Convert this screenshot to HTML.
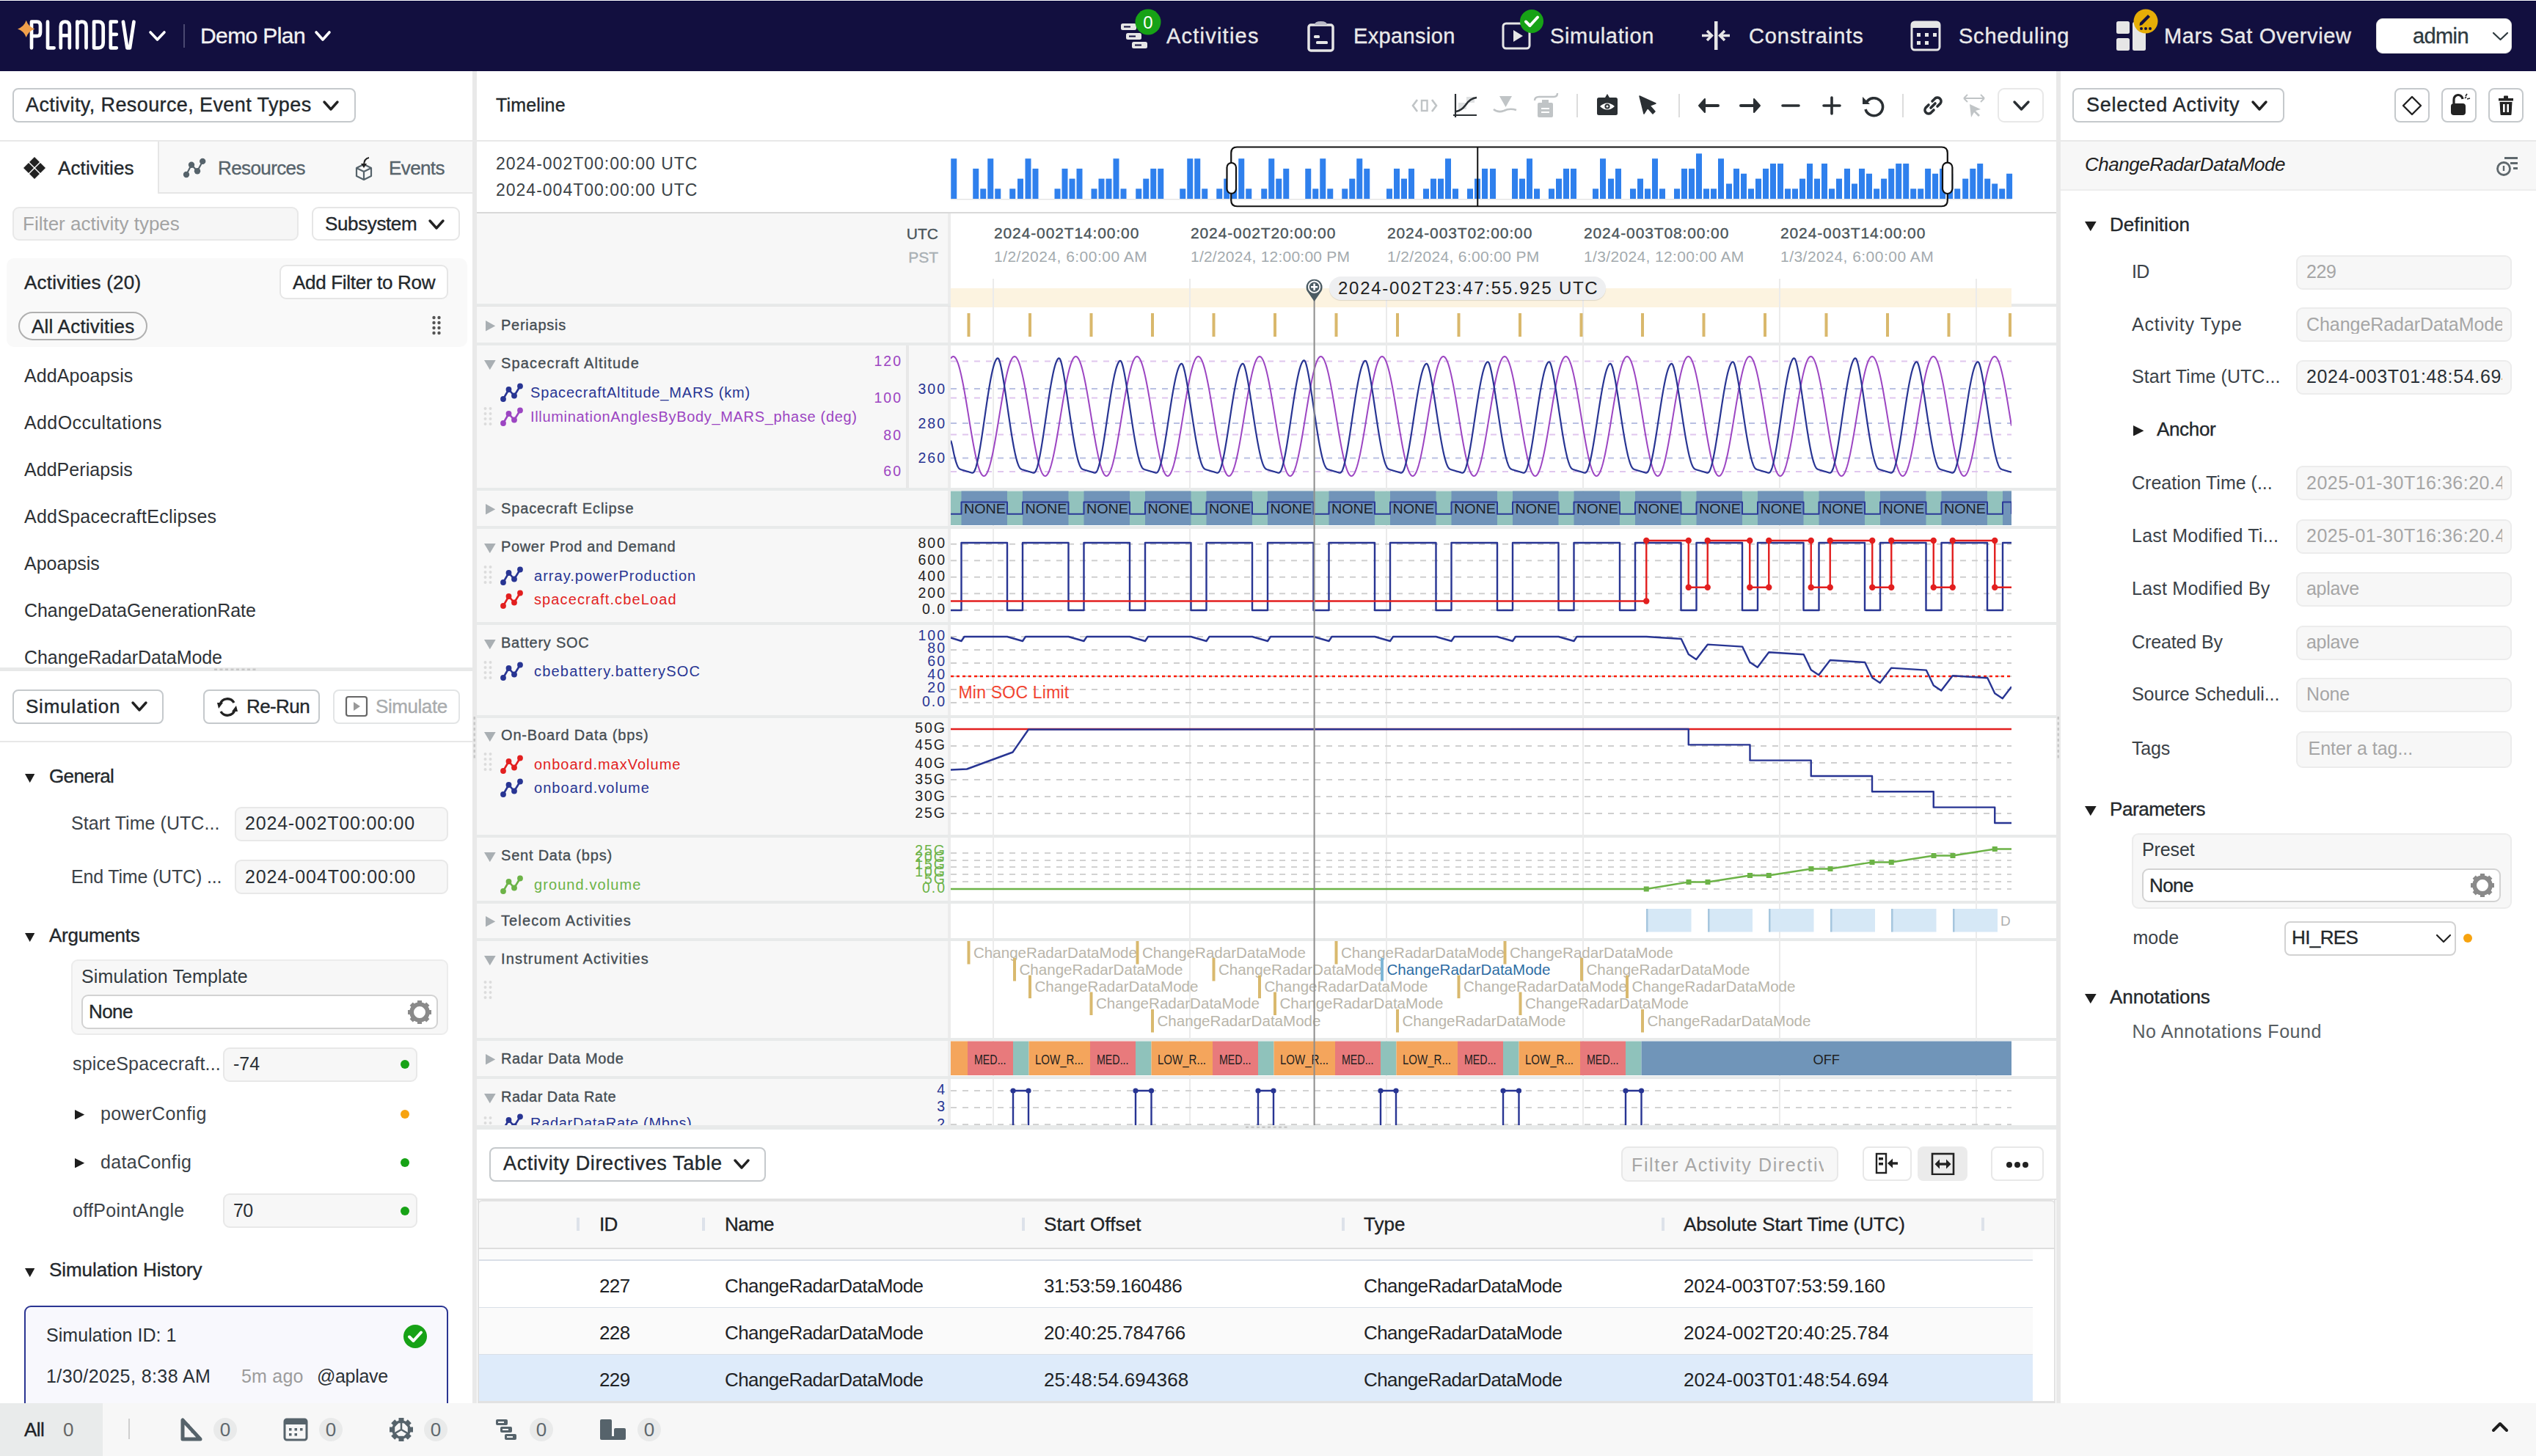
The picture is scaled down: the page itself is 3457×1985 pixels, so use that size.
<!DOCTYPE html>
<html><head><meta charset="utf-8"><style>
html,body{margin:0;padding:0;width:3457px;height:1985px;overflow:hidden;background:#fff;}
body{position:relative;font-family:"Liberation Sans", sans-serif;}
body>div,body>svg{position:absolute;}
.t{white-space:nowrap;}
</style></head><body>
<div style="left:0px;top:0px;width:3457px;height:1985px;background:#fff;"></div>
<div style="left:0px;top:0px;width:3457px;height:97px;background:#120f3f;"></div>
<div style="left:0px;top:0px;width:3457px;height:1px;background:#fff;"></div>
<div style="left:0px;top:1px;width:3457px;height:1px;background:#02023a;"></div>
<svg style="left:0px;top:0px;" width="240" height="97" viewBox="0 0 240 97"><path d="M43 65.3 V29.7 H50.5 Q55 29.7 55 35 V44 Q55 49.2 50.5 49.2 H43 M65 29.7 V65.3 H73.6 M82.8 65.3 V36 Q82.8 29.7 88.8 29.7 Q94.8 29.7 94.8 36 V65.3 M82.8 48.4 H94.8 M105.3 65.3 V29.7 M105.3 33 Q108 29.7 111.5 29.7 Q117.5 29.7 117.5 36 V65.3 M128.1 29.7 V65.3 H134 Q140.7 65.3 140.7 58 V37 Q140.7 29.7 134 29.7 Z M158.8 29.7 H150.8 V65.3 H158.8 M150.8 46.8 H158.8 M167.9 29.7 L173.4 65.3 H177 L182.5 29.7" fill="none" stroke="#fff" stroke-width="4.7" stroke-linejoin="round" stroke-linecap="round"/></svg>
<svg style="left:202px;top:41px;" width="25" height="16" viewBox="0 0 25 16"><path d="M3 3 L12.5 13 L22 3" fill="none" stroke="#fff" stroke-width="3.6" stroke-linecap="round" stroke-linejoin="round"/></svg>
<svg style="left:20px;top:24px;" width="32" height="32" viewBox="0 0 32 32"><path d="M15.7 3.8 Q18.7 12.6 27.4 15.4 Q18.7 18.2 15.7 27 Q12.7 18.2 4 15.4 Q12.7 12.6 15.7 3.8 Z" fill="#f0a04b"/></svg>
<div style="left:250px;top:33px;width:2px;height:32px;background:#4a4870;"></div>
<div class="t" style="top:33.6px;font-size:30px;line-height:30px;color:#f2f2f2;-webkit-text-stroke:0.35px currentColor;letter-spacing:-0.600px;left:273.0px;">Demo Plan</div>
<svg style="left:428px;top:41px;" width="24" height="16" viewBox="0 0 24 16"><path d="M3 3 L12.0 13 L21 3" fill="none" stroke="#fff" stroke-width="3.6" stroke-linecap="round" stroke-linejoin="round"/></svg>
<svg style="left:1524px;top:28px;" width="44" height="44" viewBox="0 0 44 44"><g fill="#e6e6e6"><rect x="4" y="4" width="21" height="9" rx="2.5"/><rect x="11" y="17" width="21" height="9" rx="2.5"/><rect x="19" y="29" width="21" height="9" rx="2.5"/></g><g fill="#120f3f"><rect x="8" y="7.5" width="9" height="2"/><rect x="15" y="20.5" width="9" height="2"/><rect x="23" y="32.5" width="9" height="2"/></g></svg>
<svg style="left:1546px;top:11px;" width="38" height="38" viewBox="0 0 38 38"><circle cx="19" cy="19" r="17.5" fill="#17a216"/><text x="19" y="27.5" text-anchor="middle" font-family="Liberation Sans" font-size="24" font-weight="500" fill="#fff">0</text></svg>
<div class="t" style="top:34.5px;font-size:29px;line-height:29px;color:#e9e9e9;-webkit-text-stroke:0.35px currentColor;letter-spacing:1.222px;left:1590.0px;">Activities</div>
<svg style="left:1780px;top:26px;" width="42" height="46" viewBox="0 0 42 46"><rect x="4" y="8" width="33" height="35" rx="3" fill="none" stroke="#e6e6e6" stroke-width="3.5"/><path d="M12 8 Q12 3 20.5 3 Q29 3 29 8 Z" fill="#b9b9c8"/><rect x="11" y="22" width="8" height="4" rx="1.5" fill="#e6e6e6"/><rect x="14" y="30" width="16" height="4" rx="1.5" fill="#e6e6e6"/></svg>
<div class="t" style="top:34.5px;font-size:29px;line-height:29px;color:#e9e9e9;-webkit-text-stroke:0.35px currentColor;letter-spacing:0.375px;left:1845.0px;">Expansion</div>
<svg style="left:2045px;top:28px;" width="46" height="42" viewBox="0 0 46 42"><rect x="4" y="4" width="36" height="34" rx="4" fill="none" stroke="#e6e6e6" stroke-width="3"/><path d="M18 13 L31 21 L18 29 Z" fill="#e6e6e6"/></svg>
<svg style="left:2071px;top:12px;" width="34" height="34" viewBox="0 0 34 34"><circle cx="17" cy="17" r="16" fill="#17a216"/><path d="M9 17.5 L14.5 23 L25 11.5" fill="none" stroke="#fff" stroke-width="4" stroke-linecap="round" stroke-linejoin="round"/></svg>
<div class="t" style="top:34.5px;font-size:29px;line-height:29px;color:#e9e9e9;-webkit-text-stroke:0.35px currentColor;letter-spacing:0.667px;left:2113.0px;">Simulation</div>
<svg style="left:2318px;top:27px;" width="44" height="44" viewBox="0 0 44 44"><rect x="19" y="2" width="4.5" height="39" fill="#e6e6e6"/><path d="M2 21.5 H13 M9 15 L15.5 21.5 L9 28" fill="none" stroke="#e6e6e6" stroke-width="3.5"/><path d="M40 21.5 H29 M33 15 L26.5 21.5 L33 28" fill="none" stroke="#e6e6e6" stroke-width="3.5"/></svg>
<div class="t" style="top:34.5px;font-size:29px;line-height:29px;color:#e9e9e9;-webkit-text-stroke:0.35px currentColor;letter-spacing:0.900px;left:2384.0px;">Constraints</div>
<svg style="left:2602px;top:26px;" width="46" height="46" viewBox="0 0 46 46"><rect x="4" y="4" width="38" height="38" rx="4" fill="none" stroke="#e6e6e6" stroke-width="3"/><rect x="4" y="4" width="38" height="8" fill="#e6e6e6"/><rect x="11" y="19" width="5" height="5" fill="#e6e6e6"/><rect x="22" y="19" width="5" height="5" fill="#e6e6e6"/><rect x="33" y="19" width="5" height="5" fill="#e6e6e6"/><rect x="11" y="30" width="5" height="5" fill="#e6e6e6"/><rect x="22" y="30" width="5" height="5" fill="#e6e6e6"/></svg>
<div class="t" style="top:34.5px;font-size:29px;line-height:29px;color:#e9e9e9;-webkit-text-stroke:0.35px currentColor;letter-spacing:0.778px;left:2670.0px;">Scheduling</div>
<svg style="left:2880px;top:25px;" width="50" height="46" viewBox="0 0 50 46"><rect x="5" y="4" width="18" height="17" rx="2.5" fill="#e6e6e6"/><rect x="5" y="27" width="18" height="17" rx="2.5" fill="#e6e6e6"/><rect x="27" y="5" width="18" height="39" rx="2.5" fill="#e6e6e6"/></svg>
<svg style="left:2908px;top:12px;" width="34" height="34" viewBox="0 0 34 34"><circle cx="17" cy="17" r="16.5" fill="#e6ad07"/><path d="M9 19 L20 8 L23 11 L12 22 L8.5 23 Z" fill="#120f3f"/><circle cx="11" cy="27" r="2" fill="#120f3f"/><circle cx="17" cy="27" r="2" fill="#120f3f"/><circle cx="23" cy="27" r="2" fill="#120f3f"/></svg>
<div class="t" style="top:34.5px;font-size:29px;line-height:29px;color:#e9e9e9;-webkit-text-stroke:0.35px currentColor;letter-spacing:0.625px;left:2950.0px;">Mars Sat Overview</div>
<div style="left:3239px;top:25px;width:185px;height:48px;background:#fff;border-radius:9px;border:1px solid #ddd;box-sizing:border-box;"></div>
<div class="t" style="top:34.5px;font-size:29px;line-height:29px;color:#2f3a3f;-webkit-text-stroke:0.35px currentColor;letter-spacing:-0.600px;left:3289.0px;">admin</div>
<svg style="left:3396px;top:42px;" width="25" height="15" viewBox="0 0 25 15"><path d="M3 3 L12.5 12 L22 3" fill="none" stroke="#2f3a3f" stroke-width="2.2" stroke-linecap="round" stroke-linejoin="round"/></svg>
<div style="left:17px;top:120px;width:468px;height:47px;border:2px solid #c5c9cc;background:#fff;border-radius:8px;box-sizing:border-box;"></div>
<div class="t" style="top:130.1px;font-size:27px;line-height:27px;color:#23282c;-webkit-text-stroke:0.35px currentColor;letter-spacing:0.400px;left:35.0px;">Activity, Resource, Event Types</div>
<svg style="left:439px;top:136px;" width="24" height="16" viewBox="0 0 24 16"><path d="M3 3 L12.0 13 L21 3" fill="none" stroke="#222" stroke-width="3.4" stroke-linecap="round" stroke-linejoin="round"/></svg>
<div style="left:0px;top:191px;width:644px;height:2px;background:#e8e8e8;"></div>
<div style="left:215px;top:193px;width:429px;height:71px;background:#f8f8f8;border-left:2px solid #e6e6e6;border-bottom:2px solid #e6e6e6;box-sizing:border-box;"></div>
<svg style="left:31px;top:213px;" width="32" height="32" viewBox="0 0 32 32"><g fill="#222"><path d="M16 1 L23 8 L16 15 L9 8 Z"/><path d="M8 9 L15 16 L8 23 L1 16 Z"/><path d="M24 9 L31 16 L24 23 L17 16 Z"/><path d="M16 17 L23 24 L16 31 L9 24 Z"/></g></svg>
<div class="t" style="top:216.0px;font-size:26px;line-height:26px;color:#23282c;-webkit-text-stroke:0.35px currentColor;letter-spacing:0.111px;left:79.0px;">Activities</div>
<svg style="left:248px;top:213px;" width="34" height="34" viewBox="0 0 34 34"><path d="M6 25 L13 11.7 L21 20.2 L28.2 6.9" fill="none" stroke="#56636b" stroke-width="2.2"/><g fill="#56636b"><circle cx="6" cy="25" r="4.2"/><circle cx="13" cy="11.7" r="4.2"/><circle cx="21" cy="20.2" r="4.2"/><circle cx="28.2" cy="6.9" r="4.2"/></g></svg>
<div class="t" style="top:216.0px;font-size:26px;line-height:26px;color:#56636b;-webkit-text-stroke:0.35px currentColor;letter-spacing:-0.600px;left:297.0px;">Resources</div>
<svg style="left:482px;top:212px;" width="30" height="34" viewBox="0 0 30 34"><path d="M4 17 L14 12 L24 17 L24 28 L14 33 L4 28 Z M4 17 L14 22 L24 17 M14 22 V33" fill="none" stroke="#56636b" stroke-width="2.2" stroke-linejoin="round"/><path d="M14 14 Q14 4 21 3" fill="none" stroke="#222" stroke-width="2"/><path d="M10 11 L14 17 L18 11 Z" fill="#222"/></svg>
<div class="t" style="top:216.0px;font-size:26px;line-height:26px;color:#56636b;-webkit-text-stroke:0.35px currentColor;letter-spacing:-0.600px;left:530.0px;">Events</div>
<div style="left:17px;top:282px;width:390px;height:46px;background:#f6f6f6;border:2px solid #e8e8e8;border-radius:9px;box-sizing:border-box;"></div>
<div class="t" style="top:292.0px;font-size:26px;line-height:26px;color:#a3a3a3;letter-spacing:0.000px;left:31.0px;">Filter activity types</div>
<div style="left:425px;top:282px;width:202px;height:46px;border:2px solid #e6e6e6;background:#fff;border-radius:9px;box-sizing:border-box;"></div>
<div class="t" style="top:292.0px;font-size:26px;line-height:26px;color:#23282c;-webkit-text-stroke:0.35px currentColor;letter-spacing:-0.375px;left:443.0px;">Subsystem</div>
<svg style="left:583px;top:298px;" width="24" height="16" viewBox="0 0 24 16"><path d="M3 3 L12.0 13 L21 3" fill="none" stroke="#222" stroke-width="3.4" stroke-linecap="round" stroke-linejoin="round"/></svg>
<div style="left:9px;top:352px;width:628px;height:121px;background:#f9f9f9;border-radius:10px;"></div>
<div class="t" style="top:372.0px;font-size:26px;line-height:26px;color:#23282c;-webkit-text-stroke:0.35px currentColor;letter-spacing:0.214px;left:33.0px;">Activities (20)</div>
<div style="left:381px;top:361px;width:230px;height:47px;border:2px solid #e6e6e6;background:#fff;border-radius:9px;box-sizing:border-box;"></div>
<div class="t" style="top:372.0px;font-size:26px;line-height:26px;color:#23282c;-webkit-text-stroke:0.35px currentColor;letter-spacing:-0.312px;left:399.0px;">Add Filter to Row</div>
<div style="left:25px;top:425px;width:176px;height:39px;border:2px solid #b0b0b0;border-radius:20px;box-sizing:border-box;background:#fafafa;"></div>
<div class="t" style="top:432.0px;font-size:26px;line-height:26px;color:#23282c;-webkit-text-stroke:0.35px currentColor;letter-spacing:0.231px;left:43.0px;">All Activities</div>
<svg style="left:588px;top:430px;" width="14" height="30" viewBox="0 0 14 30"><circle cx="3.5" cy="3" r="2.2" fill="#555"/><circle cx="3.5" cy="10" r="2.2" fill="#555"/><circle cx="3.5" cy="17" r="2.2" fill="#555"/><circle cx="3.5" cy="24" r="2.2" fill="#555"/><circle cx="10.5" cy="3" r="2.2" fill="#555"/><circle cx="10.5" cy="10" r="2.2" fill="#555"/><circle cx="10.5" cy="17" r="2.2" fill="#555"/><circle cx="10.5" cy="24" r="2.2" fill="#555"/></svg>
<div class="t" style="top:499.8px;font-size:25px;line-height:25px;color:#2e3236;letter-spacing:0.100px;left:33.0px;">AddApoapsis</div>
<div class="t" style="top:563.8px;font-size:25px;line-height:25px;color:#2e3236;letter-spacing:0.393px;left:33.0px;">AddOccultations</div>
<div class="t" style="top:627.8px;font-size:25px;line-height:25px;color:#2e3236;letter-spacing:0.045px;left:33.0px;">AddPeriapsis</div>
<div class="t" style="top:691.8px;font-size:25px;line-height:25px;color:#2e3236;letter-spacing:0.250px;left:33.0px;">AddSpacecraftEclipses</div>
<div class="t" style="top:755.8px;font-size:25px;line-height:25px;color:#2e3236;letter-spacing:0.000px;left:33.0px;">Apoapsis</div>
<div class="t" style="top:819.8px;font-size:25px;line-height:25px;color:#2e3236;letter-spacing:-0.043px;left:33.0px;">ChangeDataGenerationRate</div>
<div class="t" style="top:883.8px;font-size:25px;line-height:25px;color:#2e3236;letter-spacing:-0.056px;left:33.0px;">ChangeRadarDataMode</div>
<div style="left:0px;top:910px;width:644px;height:5px;background:#e8e9e9;"></div>
<svg style="left:290px;top:911px;" width="64" height="4" viewBox="0 0 64 4"><rect x="2.0" y="0.5" width="4" height="2.5" fill="#c8c8c8"/><rect x="9.5" y="0.5" width="4" height="2.5" fill="#c8c8c8"/><rect x="17.0" y="0.5" width="4" height="2.5" fill="#c8c8c8"/><rect x="24.5" y="0.5" width="4" height="2.5" fill="#c8c8c8"/><rect x="32.0" y="0.5" width="4" height="2.5" fill="#c8c8c8"/><rect x="39.5" y="0.5" width="4" height="2.5" fill="#c8c8c8"/><rect x="47.0" y="0.5" width="4" height="2.5" fill="#c8c8c8"/><rect x="54.5" y="0.5" width="4" height="2.5" fill="#c8c8c8"/></svg>
<div style="left:0px;top:915px;width:644px;height:998px;background:#fff;"></div>
<div style="left:17px;top:940px;width:206px;height:47px;border:2px solid #c5c9cc;background:#fff;border-radius:8px;box-sizing:border-box;"></div>
<div class="t" style="top:950.0px;font-size:26px;line-height:26px;color:#23282c;-webkit-text-stroke:0.35px currentColor;letter-spacing:0.778px;left:35.0px;">Simulation</div>
<svg style="left:178px;top:955px;" width="24" height="16" viewBox="0 0 24 16"><path d="M3 3 L12.0 13 L21 3" fill="none" stroke="#222" stroke-width="3.4" stroke-linecap="round" stroke-linejoin="round"/></svg>
<div style="left:277px;top:940px;width:159px;height:47px;border:2px solid #c5c9cc;background:#fff;border-radius:8px;box-sizing:border-box;"></div>
<svg style="left:292px;top:946px;" width="36" height="36" viewBox="0 0 36 36"><path d="M27 12 A10.5 10.5 0 0 0 8 14" fill="none" stroke="#222" stroke-width="3.4"/><path d="M9 24 A10.5 10.5 0 0 0 28 22" fill="none" stroke="#222" stroke-width="3.4"/><path d="M4 12 L12 12 L6 20 Z" fill="#222"/><path d="M32 24 L24 24 L30 16 Z" fill="#222"/></svg>
<div class="t" style="top:950.0px;font-size:26px;line-height:26px;color:#23282c;-webkit-text-stroke:0.35px currentColor;letter-spacing:-0.600px;left:336.0px;">Re-Run</div>
<div style="left:454px;top:940px;width:173px;height:47px;border:2px solid #e3e5e6;background:#fff;border-radius:8px;box-sizing:border-box;"></div>
<svg style="left:469px;top:947px;" width="36" height="34" viewBox="0 0 36 34"><rect x="3" y="3" width="28" height="26" rx="3" fill="none" stroke="#666" stroke-width="2.2"/><path d="M13 10 L22 16 L13 22 Z" fill="#999"/></svg>
<div class="t" style="top:950.0px;font-size:26px;line-height:26px;color:#a9acae;-webkit-text-stroke:0.35px currentColor;letter-spacing:-0.429px;left:512.0px;">Simulate</div>
<div style="left:0px;top:1010px;width:644px;height:2px;background:#e8e8e8;"></div>
<svg style="left:34px;top:1055px;" width="13.440000000000001" height="12.100000000000001" viewBox="0 0 13.440000000000001 12.100000000000001"><path d="M0 0 L13.440000000000001 0 L6.720000000000001 12.100000000000001 Z" fill="#1e1e1e"/></svg>
<div class="t" style="top:1045.0px;font-size:26px;line-height:26px;color:#23282c;-webkit-text-stroke:0.35px currentColor;letter-spacing:-0.600px;left:67.0px;">General</div>
<div class="t" style="top:1109.8px;font-size:25px;line-height:25px;color:#3b4248;letter-spacing:0.059px;left:97.0px;">Start Time (UTC...</div>
<div style="left:320px;top:1100px;width:291px;height:47px;background:#f7f7f7;border:2px solid #e8e8e8;border-radius:9px;box-sizing:border-box;"></div>
<div class="t" style="top:1109.8px;font-size:25px;line-height:25px;color:#2a3035;letter-spacing:0.812px;left:334.0px;">2024-002T00:00:00</div>
<div class="t" style="top:1182.8px;font-size:25px;line-height:25px;color:#3b4248;letter-spacing:-0.176px;left:97.0px;">End Time (UTC) ...</div>
<div style="left:320px;top:1172px;width:291px;height:47px;background:#f7f7f7;border:2px solid #e8e8e8;border-radius:9px;box-sizing:border-box;"></div>
<div class="t" style="top:1182.8px;font-size:25px;line-height:25px;color:#2a3035;letter-spacing:0.875px;left:334.0px;">2024-004T00:00:00</div>
<svg style="left:34px;top:1272px;" width="13.440000000000001" height="12.100000000000001" viewBox="0 0 13.440000000000001 12.100000000000001"><path d="M0 0 L13.440000000000001 0 L6.720000000000001 12.100000000000001 Z" fill="#1e1e1e"/></svg>
<div class="t" style="top:1262.0px;font-size:26px;line-height:26px;color:#23282c;-webkit-text-stroke:0.35px currentColor;letter-spacing:-0.250px;left:67.0px;">Arguments</div>
<div style="left:97px;top:1308px;width:514px;height:103px;background:#f7f7f7;border:2px solid #ececec;border-radius:9px;box-sizing:border-box;"></div>
<div class="t" style="top:1318.8px;font-size:25px;line-height:25px;color:#333a3f;letter-spacing:0.111px;left:111.0px;">Simulation Template</div>
<div style="left:111px;top:1356px;width:486px;height:47px;background:#fff;border:2px solid #d2d2d2;border-radius:9px;box-sizing:border-box;"></div>
<div class="t" style="top:1366.0px;font-size:26px;line-height:26px;color:#23282c;-webkit-text-stroke:0.35px currentColor;letter-spacing:-0.600px;left:121.0px;">None</div>
<svg style="left:555px;top:1363px;" width="34" height="34" viewBox="0 0 34 34"><g transform="translate(17,17)"><rect x="-3" y="-16" width="6" height="8.0" transform="rotate(0)" fill="#8a8a8a"/><rect x="-3" y="-16" width="6" height="8.0" transform="rotate(45)" fill="#8a8a8a"/><rect x="-3" y="-16" width="6" height="8.0" transform="rotate(90)" fill="#8a8a8a"/><rect x="-3" y="-16" width="6" height="8.0" transform="rotate(135)" fill="#8a8a8a"/><rect x="-3" y="-16" width="6" height="8.0" transform="rotate(180)" fill="#8a8a8a"/><rect x="-3" y="-16" width="6" height="8.0" transform="rotate(225)" fill="#8a8a8a"/><rect x="-3" y="-16" width="6" height="8.0" transform="rotate(270)" fill="#8a8a8a"/><rect x="-3" y="-16" width="6" height="8.0" transform="rotate(315)" fill="#8a8a8a"/><circle r="10.88" fill="none" stroke="#8a8a8a" stroke-width="5.76"/></g></svg>
<div class="t" style="top:1437.8px;font-size:25px;line-height:25px;color:#3b4248;letter-spacing:0.176px;left:99.0px;">spiceSpacecraft...</div>
<div style="left:304px;top:1428px;width:265px;height:47px;background:#f7f7f7;border:2px solid #e8e8e8;border-radius:9px;box-sizing:border-box;"></div>
<div class="t" style="top:1437.8px;font-size:25px;line-height:25px;color:#2a3035;letter-spacing:0.000px;left:318.0px;">-74</div>
<div style="left:546px;top:1445px;width:12px;height:12px;background:#17a216;border-radius:6px;"></div>
<svg style="left:102px;top:1513px;" width="13.200000000000001" height="13.440000000000001" viewBox="0 0 13.200000000000001 13.440000000000001"><path d="M0 0 L13.200000000000001 6.720000000000001 L0 13.440000000000001 Z" fill="#1e1e1e"/></svg>
<div class="t" style="top:1505.8px;font-size:25px;line-height:25px;color:#3b4248;letter-spacing:0.400px;left:137.0px;">powerConfig</div>
<div style="left:546px;top:1513px;width:12px;height:12px;background:#f7a30f;border-radius:6px;"></div>
<svg style="left:102px;top:1579px;" width="13.200000000000001" height="13.440000000000001" viewBox="0 0 13.200000000000001 13.440000000000001"><path d="M0 0 L13.200000000000001 6.720000000000001 L0 13.440000000000001 Z" fill="#1e1e1e"/></svg>
<div class="t" style="top:1571.8px;font-size:25px;line-height:25px;color:#3b4248;letter-spacing:0.333px;left:137.0px;">dataConfig</div>
<div style="left:546px;top:1579px;width:12px;height:12px;background:#17a216;border-radius:6px;"></div>
<div class="t" style="top:1637.8px;font-size:25px;line-height:25px;color:#3b4248;letter-spacing:0.333px;left:99.0px;">offPointAngle</div>
<div style="left:304px;top:1627px;width:265px;height:47px;background:#f7f7f7;border:2px solid #e8e8e8;border-radius:9px;box-sizing:border-box;"></div>
<div class="t" style="top:1637.8px;font-size:25px;line-height:25px;color:#2a3035;letter-spacing:-0.600px;left:318.0px;">70</div>
<div style="left:546px;top:1645px;width:12px;height:12px;background:#17a216;border-radius:6px;"></div>
<svg style="left:34px;top:1729px;" width="13.440000000000001" height="12.100000000000001" viewBox="0 0 13.440000000000001 12.100000000000001"><path d="M0 0 L13.440000000000001 0 L6.720000000000001 12.100000000000001 Z" fill="#1e1e1e"/></svg>
<div class="t" style="top:1718.0px;font-size:26px;line-height:26px;color:#23282c;-webkit-text-stroke:0.35px currentColor;letter-spacing:-0.059px;left:67.0px;">Simulation History</div>
<div style="left:33px;top:1780px;width:578px;height:160px;background:#f8f8fd;border:2px solid #2b3592;border-radius:9px;box-sizing:border-box;"></div>
<div class="t" style="top:1807.8px;font-size:25px;line-height:25px;color:#2b3136;letter-spacing:0.067px;left:63.0px;">Simulation ID: 1</div>
<svg style="left:549px;top:1805px;" width="34" height="34" viewBox="0 0 34 34"><circle cx="17" cy="17" r="16" fill="#17a216"/><path d="M9 17.5 L14.5 23 L25 11.5" fill="none" stroke="#fff" stroke-width="4" stroke-linecap="round" stroke-linejoin="round"/></svg>
<div class="t" style="top:1863.8px;font-size:25px;line-height:25px;color:#2b3136;letter-spacing:0.412px;left:63.0px;">1/30/2025, 8:38 AM</div>
<div class="t" style="top:1863.8px;font-size:25px;line-height:25px;color:#9c9c9c;letter-spacing:0.200px;left:329.0px;">5m ago</div>
<div class="t" style="top:1863.8px;font-size:25px;line-height:25px;color:#2b3136;letter-spacing:-0.333px;left:432.0px;">@aplave</div>
<div style="left:644px;top:97px;width:6px;height:1816px;background:#e9e9e9;"></div>
<svg style="left:645px;top:975px;" width="4" height="62" viewBox="0 0 4 62"><rect x="0.5" y="2.0" width="2.5" height="4" fill="#c8c8c8"/><rect x="0.5" y="9.5" width="2.5" height="4" fill="#c8c8c8"/><rect x="0.5" y="17.0" width="2.5" height="4" fill="#c8c8c8"/><rect x="0.5" y="24.5" width="2.5" height="4" fill="#c8c8c8"/><rect x="0.5" y="32.0" width="2.5" height="4" fill="#c8c8c8"/><rect x="0.5" y="39.5" width="2.5" height="4" fill="#c8c8c8"/><rect x="0.5" y="47.0" width="2.5" height="4" fill="#c8c8c8"/><rect x="0.5" y="54.5" width="2.5" height="4" fill="#c8c8c8"/></svg>
<div class="t" style="top:130.8px;font-size:25px;line-height:25px;color:#23282c;-webkit-text-stroke:0.35px currentColor;letter-spacing:0.143px;left:676.0px;">Timeline</div>
<div style="left:650px;top:191px;width:2153px;height:2px;background:#e8e8e8;"></div>
<svg style="left:1922px;top:130px;" width="40" height="28" viewBox="0 0 40 28"><path d="M10 6 L4 14 L10 22 M30 6 L36 14 L30 22" fill="none" stroke="#c0c4c6" stroke-width="2.6"/><rect x="16" y="7" width="7.5" height="14" fill="none" stroke="#c0c4c6" stroke-width="2.4"/></svg>
<svg style="left:1978px;top:125px;" width="40" height="38" viewBox="0 0 40 38"><rect x="10" y="15" width="11" height="9" fill="#dfe1e2"/><rect x="21" y="7" width="11" height="8" fill="#dfe1e2"/><path d="M6 3 V35 M3 32 H35" stroke="#2a2f33" stroke-width="2.2" fill="none"/><path d="M7 27 Q14 26 20 18 Q26 9 35 8" stroke="#2a2f33" stroke-width="2.6" fill="none"/></svg>
<svg style="left:2034px;top:126px;" width="40" height="36" viewBox="0 0 40 36"><path d="M10 5 H27 L18.5 20 Z" fill="#c0c4c6"/><path d="M2 23 Q8 28 16 25 Q24 21 33 24" stroke="#c0c4c6" stroke-width="2.6" fill="none"/></svg>
<svg style="left:2090px;top:125px;" width="38" height="38" viewBox="0 0 38 38"><path d="M2 12 Q2 7 8 7 H28 Q33 7 33 2" stroke="#c0c4c6" stroke-width="2.4" fill="none"/><rect x="6" y="15" width="21" height="20" rx="2" fill="#c0c4c6"/><rect x="12" y="11" width="9" height="6" fill="#c0c4c6"/><rect x="11" y="22" width="11" height="2" fill="#fff"/><rect x="11" y="27" width="11" height="2" fill="#fff"/></svg>
<div style="left:2149px;top:128px;width:2px;height:32px;background:#dcdcdc;"></div>
<svg style="left:2174px;top:126px;" width="34" height="34" viewBox="0 0 34 34"><rect x="3" y="7" width="28" height="24" rx="2.5" fill="#2a2f33"/><path d="M14 7 L17 2 L20 7 Z" fill="#2a2f33"/><path d="M7 19 Q17 10 27 19 Q17 28 7 19 Z" fill="#fff"/><circle cx="17" cy="19" r="3.6" fill="#2a2f33"/><circle cx="17" cy="19" r="1.6" fill="#fff"/></svg>
<svg style="left:2232px;top:128px;" width="32" height="32" viewBox="0 0 32 32"><path d="M3 3 L9 27 L14 19 L21 27 L24 24 L17 16 L25 13 Z" fill="#2a2f33" stroke="#2a2f33" stroke-width="1.5" stroke-linejoin="round"/></svg>
<div style="left:2288px;top:128px;width:2px;height:32px;background:#dcdcdc;"></div>
<svg style="left:2312px;top:130px;" width="34" height="28" viewBox="0 0 34 28"><path d="M8 14 H30" stroke="#2a2f33" stroke-width="4" stroke-linecap="round"/><path d="M4 14 L12 5 L12 23 Z" fill="#2a2f33" stroke="#2a2f33" stroke-width="2" stroke-linejoin="round"/></svg>
<svg style="left:2369px;top:130px;" width="34" height="28" viewBox="0 0 34 28"><path d="M4 14 H26" stroke="#2a2f33" stroke-width="4" stroke-linecap="round"/><path d="M30 14 L22 5 L22 23 Z" fill="#2a2f33" stroke="#2a2f33" stroke-width="2" stroke-linejoin="round"/></svg>
<svg style="left:2426px;top:130px;" width="30" height="28" viewBox="0 0 30 28"><path d="M4 14 H26" stroke="#2a2f33" stroke-width="3.6" stroke-linecap="round"/></svg>
<svg style="left:2482px;top:128px;" width="30" height="32" viewBox="0 0 30 32"><path d="M4 16 H26 M15 5 V27" stroke="#2a2f33" stroke-width="3.6" stroke-linecap="round"/></svg>
<svg style="left:2535px;top:127px;" width="36" height="34" viewBox="0 0 36 34"><path d="M9 13 A12 12 0 1 1 8 22" fill="none" stroke="#2a2f33" stroke-width="3.6"/><path d="M4 5 L4 15 L14 15 Z" fill="#2a2f33"/></svg>
<div style="left:2593px;top:128px;width:2px;height:32px;background:#dcdcdc;"></div>
<svg style="left:2618px;top:127px;" width="34" height="34" viewBox="0 0 34 34"><g fill="none" stroke="#2a2f33" stroke-width="3.6" stroke-linecap="round"><path d="M14 20 L20 14"/><path d="M11 16 L7 20 A5 5 0 0 0 14 27 L18 23"/><path d="M16 11 L20 7 A5 5 0 0 1 27 14 L23 18"/></g></svg>
<svg style="left:2674px;top:126px;" width="36" height="36" viewBox="0 0 36 36"><path d="M3 8 H31 M3 8 L8 3 M3 8 L8 13 M31 8 L26 3 M31 8 L26 13" stroke="#c0c4c6" stroke-width="1.8" fill="none"/><path d="M11 16 L13 34 L17 27 L23 33 L25 31 L19 25 L26 23 Z" fill="#c0c4c6"/></svg>
<div style="left:2723px;top:120px;width:63px;height:47px;border:2px solid #e8e8e8;border-radius:9px;box-sizing:border-box;background:#fff;"></div>
<svg style="left:2743px;top:136px;" width="25" height="16" viewBox="0 0 25 16"><path d="M3 3 L12.5 13 L22 3" fill="none" stroke="#2a2f33" stroke-width="3.4" stroke-linecap="round" stroke-linejoin="round"/></svg>
<div class="t" style="top:211.8px;font-size:23px;line-height:23px;color:#3b4347;letter-spacing:1.000px;left:676.0px;">2024-002T00:00:00 UTC</div>
<div class="t" style="top:248.0px;font-size:23px;line-height:23px;color:#3b4347;letter-spacing:1.000px;left:676.0px;">2024-004T00:00:00 UTC</div>
<svg style="left:1290px;top:195px;" width="1460" height="90" viewBox="0 0 1460 90"><rect x="6" y="76" width="1446" height="1.5" fill="#e6e6e6"/><g fill="#2f80ed"><rect x="6.25" y="21.20" width="8" height="54.80"/><rect x="36.25" y="34.90" width="8" height="41.10"/><rect x="46.25" y="62.30" width="8" height="13.70"/><rect x="56.25" y="21.20" width="8" height="54.80"/><rect x="66.25" y="62.30" width="8" height="13.70"/><rect x="86.25" y="62.30" width="8" height="13.70"/><rect x="97.00" y="48.60" width="8" height="27.40"/><rect x="107.50" y="21.20" width="8" height="54.80"/><rect x="117.50" y="34.90" width="8" height="41.10"/><rect x="147.50" y="62.30" width="8" height="13.70"/><rect x="157.50" y="34.90" width="8" height="41.10"/><rect x="167.50" y="48.60" width="8" height="27.40"/><rect x="177.50" y="34.90" width="8" height="41.10"/><rect x="197.50" y="62.30" width="8" height="13.70"/><rect x="207.50" y="48.60" width="8" height="27.40"/><rect x="217.50" y="48.60" width="8" height="27.40"/><rect x="227.50" y="21.20" width="8" height="54.80"/><rect x="237.50" y="62.30" width="8" height="13.70"/><rect x="258.25" y="62.30" width="8" height="13.70"/><rect x="268.25" y="48.60" width="8" height="27.40"/><rect x="278.25" y="34.90" width="8" height="41.10"/><rect x="288.25" y="34.90" width="8" height="41.10"/><rect x="318.25" y="62.30" width="8" height="13.70"/><rect x="328.25" y="21.20" width="8" height="54.80"/><rect x="338.25" y="21.20" width="8" height="54.80"/><rect x="348.25" y="62.30" width="8" height="13.70"/><rect x="368.25" y="62.30" width="8" height="13.70"/><rect x="378.25" y="48.60" width="8" height="27.40"/><rect x="388.25" y="62.30" width="8" height="13.70"/><rect x="398.25" y="21.20" width="8" height="54.80"/><rect x="408.25" y="62.30" width="8" height="13.70"/><rect x="429.25" y="62.30" width="8" height="13.70"/><rect x="439.25" y="21.20" width="8" height="54.80"/><rect x="449.25" y="48.60" width="8" height="27.40"/><rect x="459.25" y="34.90" width="8" height="41.10"/><rect x="489.25" y="34.90" width="8" height="41.10"/><rect x="499.25" y="62.30" width="8" height="13.70"/><rect x="509.25" y="21.20" width="8" height="54.80"/><rect x="519.25" y="62.30" width="8" height="13.70"/><rect x="539.25" y="62.30" width="8" height="13.70"/><rect x="549.25" y="48.60" width="8" height="27.40"/><rect x="559.25" y="21.20" width="8" height="54.80"/><rect x="569.25" y="34.90" width="8" height="41.10"/><rect x="600.00" y="62.30" width="8" height="13.70"/><rect x="610.00" y="34.90" width="8" height="41.10"/><rect x="620.00" y="48.60" width="8" height="27.40"/><rect x="630.00" y="34.90" width="8" height="41.10"/><rect x="650.00" y="62.30" width="8" height="13.70"/><rect x="660.00" y="48.60" width="8" height="27.40"/><rect x="670.00" y="48.60" width="8" height="27.40"/><rect x="680.00" y="21.20" width="8" height="54.80"/><rect x="690.00" y="62.30" width="8" height="13.70"/><rect x="710.00" y="62.30" width="8" height="13.70"/><rect x="720.00" y="48.60" width="8" height="27.40"/><rect x="730.00" y="34.90" width="8" height="41.10"/><rect x="741.00" y="34.90" width="8" height="41.10"/><rect x="771.00" y="34.90" width="8" height="41.10"/><rect x="781.00" y="48.60" width="8" height="27.40"/><rect x="791.00" y="21.20" width="8" height="54.80"/><rect x="801.00" y="62.30" width="8" height="13.70"/><rect x="821.00" y="62.30" width="8" height="13.70"/><rect x="831.00" y="48.60" width="8" height="27.40"/><rect x="841.00" y="34.90" width="8" height="41.10"/><rect x="851.00" y="34.90" width="8" height="41.10"/><rect x="881.00" y="62.30" width="8" height="13.70"/><rect x="891.00" y="21.20" width="8" height="54.80"/><rect x="902.00" y="48.60" width="8" height="27.40"/><rect x="912.00" y="34.90" width="8" height="41.10"/><rect x="932.00" y="62.30" width="8" height="13.70"/><rect x="942.00" y="48.60" width="8" height="27.40"/><rect x="952.00" y="62.30" width="8" height="13.70"/><rect x="962.00" y="21.20" width="8" height="54.80"/><rect x="972.00" y="62.30" width="8" height="13.70"/><rect x="992.00" y="62.30" width="8" height="13.70"/><rect x="1002.00" y="34.90" width="8" height="41.10"/><rect x="1012.00" y="34.90" width="8" height="41.10"/><rect x="1022.00" y="14.35" width="8" height="61.65"/><rect x="1032.00" y="62.30" width="8" height="13.70"/><rect x="1042.00" y="62.30" width="8" height="13.70"/><rect x="1052.00" y="21.20" width="8" height="54.80"/><rect x="1063.00" y="55.45" width="8" height="20.55"/><rect x="1073.00" y="34.90" width="8" height="41.10"/><rect x="1083.00" y="41.75" width="8" height="34.25"/><rect x="1093.00" y="62.30" width="8" height="13.70"/><rect x="1103.00" y="48.60" width="8" height="27.40"/><rect x="1113.00" y="34.90" width="8" height="41.10"/><rect x="1123.00" y="28.05" width="8" height="47.95"/><rect x="1133.00" y="28.05" width="8" height="47.95"/><rect x="1143.00" y="62.30" width="8" height="13.70"/><rect x="1153.00" y="62.30" width="8" height="13.70"/><rect x="1163.00" y="48.60" width="8" height="27.40"/><rect x="1173.00" y="28.05" width="8" height="47.95"/><rect x="1183.00" y="48.60" width="8" height="27.40"/><rect x="1193.00" y="28.05" width="8" height="47.95"/><rect x="1203.00" y="62.30" width="8" height="13.70"/><rect x="1213.00" y="48.60" width="8" height="27.40"/><rect x="1224.00" y="34.90" width="8" height="41.10"/><rect x="1234.00" y="55.45" width="8" height="20.55"/><rect x="1244.00" y="34.90" width="8" height="41.10"/><rect x="1254.00" y="41.75" width="8" height="34.25"/><rect x="1264.10" y="62.30" width="8" height="13.70"/><rect x="1274.10" y="48.60" width="8" height="27.40"/><rect x="1284.20" y="34.90" width="8" height="41.10"/><rect x="1294.20" y="28.05" width="8" height="47.95"/><rect x="1304.20" y="28.05" width="8" height="47.95"/><rect x="1314.20" y="62.30" width="8" height="13.70"/><rect x="1324.20" y="62.30" width="8" height="13.70"/><rect x="1334.10" y="34.90" width="8" height="41.10"/><rect x="1344.10" y="41.75" width="8" height="34.25"/><rect x="1354.10" y="34.90" width="8" height="41.10"/><rect x="1364.20" y="41.75" width="8" height="34.25"/><rect x="1374.20" y="62.30" width="8" height="13.70"/><rect x="1385.20" y="48.60" width="8" height="27.40"/><rect x="1395.30" y="34.90" width="8" height="41.10"/><rect x="1405.20" y="28.05" width="8" height="47.95"/><rect x="1415.20" y="48.60" width="8" height="27.40"/><rect x="1425.20" y="55.45" width="8" height="20.55"/><rect x="1435.20" y="62.30" width="8" height="13.70"/><rect x="1445.10" y="41.75" width="8" height="34.25"/></g><path d="M388.25 68.75 V78.25 Q388.25 86.25 396.25 86.25 H1356.8000000000002 Q1364.8000000000002 86.25 1364.8000000000002 78.25 V13.5 Q1364.8000000000002 5.5 1356.8000000000002 5.5 H396.25 Q388.25 5.5 388.25 13.5 Z" fill="none" stroke="#111" stroke-width="2.2"/><rect x="723.25" y="5.5" width="2" height="81" fill="#111"/><rect x="382.5" y="27" width="12.5" height="41.75" rx="6.25" fill="#fff" stroke="#111" stroke-width="2.2"/><rect x="1358" y="26.599999999999994" width="13.4" height="42.4" rx="6.7" fill="#fff" stroke="#111" stroke-width="2.2"/></svg>
<div style="left:650px;top:289px;width:2153px;height:2px;background:#d9d9d9;"></div>
<div style="left:650px;top:291px;width:642px;height:1243px;background:#f7f7f7;"></div>
<div style="left:1292px;top:291px;width:4px;height:1243px;background:#ececec;"></div>
<div style="left:1296px;top:291px;width:1507px;height:1243px;background:#fff;"></div>
<div style="left:650px;top:414px;width:2153px;height:4px;background:#e8eaea;"></div>
<div style="left:650px;top:467px;width:2153px;height:4px;background:#e8eaea;"></div>
<div style="left:650px;top:665px;width:2153px;height:4px;background:#e8eaea;"></div>
<div style="left:650px;top:717px;width:2153px;height:4px;background:#e8eaea;"></div>
<div style="left:650px;top:848px;width:2153px;height:4px;background:#e8eaea;"></div>
<div style="left:650px;top:975px;width:2153px;height:4px;background:#e8eaea;"></div>
<div style="left:650px;top:1138px;width:2153px;height:4px;background:#e8eaea;"></div>
<div style="left:650px;top:1228px;width:2153px;height:4px;background:#e8eaea;"></div>
<div style="left:650px;top:1279px;width:2153px;height:4px;background:#e8eaea;"></div>
<div style="left:650px;top:1415px;width:2153px;height:4px;background:#e8eaea;"></div>
<div style="left:650px;top:1467px;width:2153px;height:4px;background:#e8eaea;"></div>
<div style="left:650px;top:417px;width:2153px;height:1px;background:#e3e3e3;"></div>
<div style="left:1296px;top:393px;width:1446px;height:26px;background:#fcf3e0;"></div>
<div style="left:1353px;top:380px;width:2px;height:1154px;background:#ebebeb;"></div>
<div style="left:1621px;top:380px;width:2px;height:1154px;background:#ebebeb;"></div>
<div style="left:1889px;top:380px;width:2px;height:1154px;background:#ebebeb;"></div>
<div style="left:2157px;top:380px;width:2px;height:1154px;background:#ebebeb;"></div>
<div style="left:2425px;top:380px;width:2px;height:1154px;background:#ebebeb;"></div>
<div style="left:2693px;top:380px;width:2px;height:1154px;background:#ebebeb;"></div>
<div class="t" style="top:308.2px;font-size:21px;line-height:21px;color:#49545a;-webkit-text-stroke:0.35px currentColor;right:2178px;text-align:right;">UTC</div>
<div class="t" style="top:340.2px;font-size:21px;line-height:21px;color:#a9b0b4;-webkit-text-stroke:0.35px currentColor;right:2178px;text-align:right;">PST</div>
<div class="t" style="top:307.2px;font-size:21px;line-height:21px;color:#4a5459;-webkit-text-stroke:0.35px currentColor;letter-spacing:0.875px;left:1355.0px;">2024-002T14:00:00</div>
<div class="t" style="top:339.2px;font-size:21px;line-height:21px;color:#a3aaae;letter-spacing:0.474px;left:1355.0px;">1/2/2024, 6:00:00 AM</div>
<div class="t" style="top:307.2px;font-size:21px;line-height:21px;color:#4a5459;-webkit-text-stroke:0.35px currentColor;letter-spacing:0.875px;left:1623.0px;">2024-002T20:00:00</div>
<div class="t" style="top:339.2px;font-size:21px;line-height:21px;color:#a3aaae;letter-spacing:0.225px;left:1623.0px;">1/2/2024, 12:00:00 PM</div>
<div class="t" style="top:307.2px;font-size:21px;line-height:21px;color:#4a5459;-webkit-text-stroke:0.35px currentColor;letter-spacing:0.875px;left:1891.0px;">2024-003T02:00:00</div>
<div class="t" style="top:339.2px;font-size:21px;line-height:21px;color:#a3aaae;letter-spacing:0.342px;left:1891.0px;">1/2/2024, 6:00:00 PM</div>
<div class="t" style="top:307.2px;font-size:21px;line-height:21px;color:#4a5459;-webkit-text-stroke:0.35px currentColor;letter-spacing:0.875px;left:2159.0px;">2024-003T08:00:00</div>
<div class="t" style="top:339.2px;font-size:21px;line-height:21px;color:#a3aaae;letter-spacing:0.350px;left:2159.0px;">1/3/2024, 12:00:00 AM</div>
<div class="t" style="top:307.2px;font-size:21px;line-height:21px;color:#4a5459;-webkit-text-stroke:0.35px currentColor;letter-spacing:0.875px;left:2427.0px;">2024-003T14:00:00</div>
<div class="t" style="top:339.2px;font-size:21px;line-height:21px;color:#a3aaae;letter-spacing:0.474px;left:2427.0px;">1/3/2024, 6:00:00 AM</div>
<svg style="left:662px;top:437px;" width="13.200000000000001" height="14.560000000000002" viewBox="0 0 13.200000000000001 14.560000000000002"><path d="M0 0 L13.200000000000001 7.280000000000001 L0 14.560000000000002 Z" fill="#a9afb3"/></svg>
<div class="t" style="top:433.1px;font-size:20px;line-height:20px;color:#454d53;-webkit-text-stroke:0.35px currentColor;letter-spacing:0.750px;left:683.0px;">Periapsis</div>
<svg style="left:660px;top:491px;" width="15.680000000000001" height="13.200000000000001" viewBox="0 0 15.680000000000001 13.200000000000001"><path d="M0 0 L15.680000000000001 0 L7.840000000000001 13.200000000000001 Z" fill="#a9afb3"/></svg>
<div class="t" style="top:485.1px;font-size:20px;line-height:20px;color:#454d53;-webkit-text-stroke:0.35px currentColor;letter-spacing:1.167px;left:683.0px;">Spacecraft Altitude</div>
<svg style="left:662px;top:687px;" width="13.200000000000001" height="14.560000000000002" viewBox="0 0 13.200000000000001 14.560000000000002"><path d="M0 0 L13.200000000000001 7.280000000000001 L0 14.560000000000002 Z" fill="#a9afb3"/></svg>
<div class="t" style="top:683.1px;font-size:20px;line-height:20px;color:#454d53;-webkit-text-stroke:0.35px currentColor;letter-spacing:0.882px;left:683.0px;">Spacecraft Eclipse</div>
<svg style="left:660px;top:740.5px;" width="15.680000000000001" height="13.200000000000001" viewBox="0 0 15.680000000000001 13.200000000000001"><path d="M0 0 L15.680000000000001 0 L7.840000000000001 13.200000000000001 Z" fill="#a9afb3"/></svg>
<div class="t" style="top:734.6px;font-size:20px;line-height:20px;color:#454d53;-webkit-text-stroke:0.35px currentColor;letter-spacing:0.650px;left:683.0px;">Power Prod and Demand</div>
<svg style="left:660px;top:872px;" width="15.680000000000001" height="13.200000000000001" viewBox="0 0 15.680000000000001 13.200000000000001"><path d="M0 0 L15.680000000000001 0 L7.840000000000001 13.200000000000001 Z" fill="#a9afb3"/></svg>
<div class="t" style="top:866.1px;font-size:20px;line-height:20px;color:#454d53;-webkit-text-stroke:0.35px currentColor;letter-spacing:0.750px;left:683.0px;">Battery SOC</div>
<svg style="left:660px;top:997.5px;" width="15.680000000000001" height="13.200000000000001" viewBox="0 0 15.680000000000001 13.200000000000001"><path d="M0 0 L15.680000000000001 0 L7.840000000000001 13.200000000000001 Z" fill="#a9afb3"/></svg>
<div class="t" style="top:991.6px;font-size:20px;line-height:20px;color:#454d53;-webkit-text-stroke:0.35px currentColor;letter-spacing:0.833px;left:683.0px;">On-Board Data (bps)</div>
<svg style="left:660px;top:1162px;" width="15.680000000000001" height="13.200000000000001" viewBox="0 0 15.680000000000001 13.200000000000001"><path d="M0 0 L15.680000000000001 0 L7.840000000000001 13.200000000000001 Z" fill="#a9afb3"/></svg>
<div class="t" style="top:1156.1px;font-size:20px;line-height:20px;color:#454d53;-webkit-text-stroke:0.35px currentColor;letter-spacing:0.786px;left:683.0px;">Sent Data (bps)</div>
<svg style="left:662px;top:1249px;" width="13.200000000000001" height="14.560000000000002" viewBox="0 0 13.200000000000001 14.560000000000002"><path d="M0 0 L13.200000000000001 7.280000000000001 L0 14.560000000000002 Z" fill="#a9afb3"/></svg>
<div class="t" style="top:1245.1px;font-size:20px;line-height:20px;color:#454d53;-webkit-text-stroke:0.35px currentColor;letter-spacing:1.118px;left:683.0px;">Telecom Activities</div>
<svg style="left:660px;top:1303px;" width="15.680000000000001" height="13.200000000000001" viewBox="0 0 15.680000000000001 13.200000000000001"><path d="M0 0 L15.680000000000001 0 L7.840000000000001 13.200000000000001 Z" fill="#a9afb3"/></svg>
<div class="t" style="top:1297.1px;font-size:20px;line-height:20px;color:#454d53;-webkit-text-stroke:0.35px currentColor;letter-spacing:1.150px;left:683.0px;">Instrument Activities</div>
<svg style="left:662px;top:1437px;" width="13.200000000000001" height="14.560000000000002" viewBox="0 0 13.200000000000001 14.560000000000002"><path d="M0 0 L13.200000000000001 7.280000000000001 L0 14.560000000000002 Z" fill="#a9afb3"/></svg>
<div class="t" style="top:1433.1px;font-size:20px;line-height:20px;color:#454d53;-webkit-text-stroke:0.35px currentColor;letter-spacing:0.643px;left:683.0px;">Radar Data Mode</div>
<svg style="left:660px;top:1490.5px;" width="15.680000000000001" height="13.200000000000001" viewBox="0 0 15.680000000000001 13.200000000000001"><path d="M0 0 L15.680000000000001 0 L7.840000000000001 13.200000000000001 Z" fill="#a9afb3"/></svg>
<div class="t" style="top:1484.6px;font-size:20px;line-height:20px;color:#454d53;-webkit-text-stroke:0.35px currentColor;letter-spacing:0.464px;left:683.0px;">Radar Data Rate</div>
<svg style="left:682px;top:521.5px;" width="32" height="28" viewBox="0 0 32 28"><path d="M4 22 L11.5 9 L19 17.5 L27 4.5" fill="none" stroke="#283593" stroke-width="2.6"/><g fill="#283593"><circle cx="4" cy="22" r="3.9"/><circle cx="11.5" cy="9" r="3.9"/><circle cx="19" cy="17.5" r="3.9"/><circle cx="27" cy="4.5" r="3.9"/></g></svg>
<div class="t" style="top:524.6px;font-size:20px;line-height:20px;color:#283593;letter-spacing:0.833px;left:723.0px;">SpacecraftAltitude_MARS (km)</div>
<svg style="left:682px;top:554.5px;" width="32" height="28" viewBox="0 0 32 28"><path d="M4 22 L11.5 9 L19 17.5 L27 4.5" fill="none" stroke="#9c45c2" stroke-width="2.6"/><g fill="#9c45c2"><circle cx="4" cy="22" r="3.9"/><circle cx="11.5" cy="9" r="3.9"/><circle cx="19" cy="17.5" r="3.9"/><circle cx="27" cy="4.5" r="3.9"/></g></svg>
<div class="t" style="top:557.6px;font-size:20px;line-height:20px;color:#9c45c2;letter-spacing:0.675px;left:723.0px;">IlluminationAnglesByBody_MARS_phase (deg)</div>
<svg style="left:682px;top:772px;" width="32" height="28" viewBox="0 0 32 28"><path d="M4 22 L11.5 9 L19 17.5 L27 4.5" fill="none" stroke="#283593" stroke-width="2.6"/><g fill="#283593"><circle cx="4" cy="22" r="3.9"/><circle cx="11.5" cy="9" r="3.9"/><circle cx="19" cy="17.5" r="3.9"/><circle cx="27" cy="4.5" r="3.9"/></g></svg>
<div class="t" style="top:775.1px;font-size:20px;line-height:20px;color:#283593;letter-spacing:1.025px;left:728.0px;">array.powerProduction</div>
<svg style="left:682px;top:804px;" width="32" height="28" viewBox="0 0 32 28"><path d="M4 22 L11.5 9 L19 17.5 L27 4.5" fill="none" stroke="#e21f1f" stroke-width="2.6"/><g fill="#e21f1f"><circle cx="4" cy="22" r="3.9"/><circle cx="11.5" cy="9" r="3.9"/><circle cx="19" cy="17.5" r="3.9"/><circle cx="27" cy="4.5" r="3.9"/></g></svg>
<div class="t" style="top:807.1px;font-size:20px;line-height:20px;color:#e21f1f;letter-spacing:1.118px;left:728.0px;">spacecraft.cbeLoad</div>
<svg style="left:682px;top:902px;" width="32" height="28" viewBox="0 0 32 28"><path d="M4 22 L11.5 9 L19 17.5 L27 4.5" fill="none" stroke="#283593" stroke-width="2.6"/><g fill="#283593"><circle cx="4" cy="22" r="3.9"/><circle cx="11.5" cy="9" r="3.9"/><circle cx="19" cy="17.5" r="3.9"/><circle cx="27" cy="4.5" r="3.9"/></g></svg>
<div class="t" style="top:905.1px;font-size:20px;line-height:20px;color:#283593;letter-spacing:1.200px;left:728.0px;">cbebattery.batterySOC</div>
<svg style="left:682px;top:1029px;" width="32" height="28" viewBox="0 0 32 28"><path d="M4 22 L11.5 9 L19 17.5 L27 4.5" fill="none" stroke="#e21f1f" stroke-width="2.6"/><g fill="#e21f1f"><circle cx="4" cy="22" r="3.9"/><circle cx="11.5" cy="9" r="3.9"/><circle cx="19" cy="17.5" r="3.9"/><circle cx="27" cy="4.5" r="3.9"/></g></svg>
<div class="t" style="top:1032.1px;font-size:20px;line-height:20px;color:#e21f1f;letter-spacing:1.000px;left:728.0px;">onboard.maxVolume</div>
<svg style="left:682px;top:1061px;" width="32" height="28" viewBox="0 0 32 28"><path d="M4 22 L11.5 9 L19 17.5 L27 4.5" fill="none" stroke="#283593" stroke-width="2.6"/><g fill="#283593"><circle cx="4" cy="22" r="3.9"/><circle cx="11.5" cy="9" r="3.9"/><circle cx="19" cy="17.5" r="3.9"/><circle cx="27" cy="4.5" r="3.9"/></g></svg>
<div class="t" style="top:1064.1px;font-size:20px;line-height:20px;color:#283593;letter-spacing:1.038px;left:728.0px;">onboard.volume</div>
<svg style="left:682px;top:1193px;" width="32" height="28" viewBox="0 0 32 28"><path d="M4 22 L11.5 9 L19 17.5 L27 4.5" fill="none" stroke="#6cb347" stroke-width="2.6"/><g fill="#6cb347"><circle cx="4" cy="22" r="3.9"/><circle cx="11.5" cy="9" r="3.9"/><circle cx="19" cy="17.5" r="3.9"/><circle cx="27" cy="4.5" r="3.9"/></g></svg>
<div class="t" style="top:1196.1px;font-size:20px;line-height:20px;color:#6cb347;letter-spacing:1.083px;left:728.0px;">ground.volume</div>
<svg style="left:682px;top:1518px;" width="32" height="28" viewBox="0 0 32 28"><path d="M4 22 L11.5 9 L19 17.5 L27 4.5" fill="none" stroke="#283593" stroke-width="2.6"/><g fill="#283593"><circle cx="4" cy="22" r="3.9"/><circle cx="11.5" cy="9" r="3.9"/><circle cx="19" cy="17.5" r="3.9"/><circle cx="27" cy="4.5" r="3.9"/></g></svg>
<div class="t" style="top:1521.1px;font-size:20px;line-height:20px;color:#283593;letter-spacing:0.684px;left:723.0px;">RadarDataRate (Mbps)</div>
<svg style="left:659px;top:554px;" width="12" height="28" viewBox="0 0 12 28"><circle cx="2.5" cy="3" r="2" fill="#dcdcdc"/><circle cx="2.5" cy="10" r="2" fill="#dcdcdc"/><circle cx="2.5" cy="17" r="2" fill="#dcdcdc"/><circle cx="2.5" cy="24" r="2" fill="#dcdcdc"/><circle cx="9.5" cy="3" r="2" fill="#dcdcdc"/><circle cx="9.5" cy="10" r="2" fill="#dcdcdc"/><circle cx="9.5" cy="17" r="2" fill="#dcdcdc"/><circle cx="9.5" cy="24" r="2" fill="#dcdcdc"/></svg>
<svg style="left:659px;top:770px;" width="12" height="28" viewBox="0 0 12 28"><circle cx="2.5" cy="3" r="2" fill="#dcdcdc"/><circle cx="2.5" cy="10" r="2" fill="#dcdcdc"/><circle cx="2.5" cy="17" r="2" fill="#dcdcdc"/><circle cx="2.5" cy="24" r="2" fill="#dcdcdc"/><circle cx="9.5" cy="3" r="2" fill="#dcdcdc"/><circle cx="9.5" cy="10" r="2" fill="#dcdcdc"/><circle cx="9.5" cy="17" r="2" fill="#dcdcdc"/><circle cx="9.5" cy="24" r="2" fill="#dcdcdc"/></svg>
<svg style="left:659px;top:900px;" width="12" height="28" viewBox="0 0 12 28"><circle cx="2.5" cy="3" r="2" fill="#dcdcdc"/><circle cx="2.5" cy="10" r="2" fill="#dcdcdc"/><circle cx="2.5" cy="17" r="2" fill="#dcdcdc"/><circle cx="2.5" cy="24" r="2" fill="#dcdcdc"/><circle cx="9.5" cy="3" r="2" fill="#dcdcdc"/><circle cx="9.5" cy="10" r="2" fill="#dcdcdc"/><circle cx="9.5" cy="17" r="2" fill="#dcdcdc"/><circle cx="9.5" cy="24" r="2" fill="#dcdcdc"/></svg>
<svg style="left:659px;top:1025px;" width="12" height="28" viewBox="0 0 12 28"><circle cx="2.5" cy="3" r="2" fill="#dcdcdc"/><circle cx="2.5" cy="10" r="2" fill="#dcdcdc"/><circle cx="2.5" cy="17" r="2" fill="#dcdcdc"/><circle cx="2.5" cy="24" r="2" fill="#dcdcdc"/><circle cx="9.5" cy="3" r="2" fill="#dcdcdc"/><circle cx="9.5" cy="10" r="2" fill="#dcdcdc"/><circle cx="9.5" cy="17" r="2" fill="#dcdcdc"/><circle cx="9.5" cy="24" r="2" fill="#dcdcdc"/></svg>
<svg style="left:659px;top:1336px;" width="12" height="28" viewBox="0 0 12 28"><circle cx="2.5" cy="3" r="2" fill="#dcdcdc"/><circle cx="2.5" cy="10" r="2" fill="#dcdcdc"/><circle cx="2.5" cy="17" r="2" fill="#dcdcdc"/><circle cx="2.5" cy="24" r="2" fill="#dcdcdc"/><circle cx="9.5" cy="3" r="2" fill="#dcdcdc"/><circle cx="9.5" cy="10" r="2" fill="#dcdcdc"/><circle cx="9.5" cy="17" r="2" fill="#dcdcdc"/><circle cx="9.5" cy="24" r="2" fill="#dcdcdc"/></svg>
<svg style="left:659px;top:1521px;" width="12" height="14" viewBox="0 0 12 14"><circle cx="2.5" cy="3" r="2" fill="#dcdcdc"/><circle cx="2.5" cy="10" r="2" fill="#dcdcdc"/><circle cx="9.5" cy="3" r="2" fill="#dcdcdc"/><circle cx="9.5" cy="10" r="2" fill="#dcdcdc"/></svg>
<div style="left:1235px;top:471px;width:4px;height:194px;background:#e8e8e8;"></div>
<div class="t" style="top:482.5px;font-size:19.5px;line-height:19.5px;color:#9c45c2;right:2229px;text-align:right;letter-spacing:2px;margin-right:-2px;">120</div>
<div class="t" style="top:532.5px;font-size:19.5px;line-height:19.5px;color:#9c45c2;right:2229px;text-align:right;letter-spacing:2px;margin-right:-2px;">100</div>
<div class="t" style="top:583.5px;font-size:19.5px;line-height:19.5px;color:#9c45c2;right:2229px;text-align:right;letter-spacing:2px;margin-right:-2px;">80</div>
<div class="t" style="top:633.0px;font-size:19.5px;line-height:19.5px;color:#9c45c2;right:2229px;text-align:right;letter-spacing:2px;margin-right:-2px;">60</div>
<div class="t" style="top:520.5px;font-size:19.5px;line-height:19.5px;color:#283593;right:2169px;text-align:right;letter-spacing:2px;margin-right:-2px;">300</div>
<div class="t" style="top:567.5px;font-size:19.5px;line-height:19.5px;color:#283593;right:2169px;text-align:right;letter-spacing:2px;margin-right:-2px;">280</div>
<div class="t" style="top:614.5px;font-size:19.5px;line-height:19.5px;color:#283593;right:2169px;text-align:right;letter-spacing:2px;margin-right:-2px;">260</div>
<div class="t" style="top:731.0px;font-size:19.5px;line-height:19.5px;color:#222;right:2169px;text-align:right;letter-spacing:2px;margin-right:-2px;">800</div>
<div class="t" style="top:753.5px;font-size:19.5px;line-height:19.5px;color:#222;right:2169px;text-align:right;letter-spacing:2px;margin-right:-2px;">600</div>
<div class="t" style="top:776.0px;font-size:19.5px;line-height:19.5px;color:#222;right:2169px;text-align:right;letter-spacing:2px;margin-right:-2px;">400</div>
<div class="t" style="top:799.0px;font-size:19.5px;line-height:19.5px;color:#222;right:2169px;text-align:right;letter-spacing:2px;margin-right:-2px;">200</div>
<div class="t" style="top:821.0px;font-size:19.5px;line-height:19.5px;color:#222;right:2169px;text-align:right;letter-spacing:2px;margin-right:-2px;">0.0</div>
<div class="t" style="top:856.5px;font-size:19.5px;line-height:19.5px;color:#283593;right:2169px;text-align:right;letter-spacing:2px;margin-right:-2px;">100</div>
<div class="t" style="top:874.0px;font-size:19.5px;line-height:19.5px;color:#283593;right:2169px;text-align:right;letter-spacing:2px;margin-right:-2px;">80</div>
<div class="t" style="top:891.5px;font-size:19.5px;line-height:19.5px;color:#283593;right:2169px;text-align:right;letter-spacing:2px;margin-right:-2px;">60</div>
<div class="t" style="top:909.5px;font-size:19.5px;line-height:19.5px;color:#283593;right:2169px;text-align:right;letter-spacing:2px;margin-right:-2px;">40</div>
<div class="t" style="top:927.5px;font-size:19.5px;line-height:19.5px;color:#283593;right:2169px;text-align:right;letter-spacing:2px;margin-right:-2px;">20</div>
<div class="t" style="top:946.5px;font-size:19.5px;line-height:19.5px;color:#283593;right:2169px;text-align:right;letter-spacing:2px;margin-right:-2px;">0.0</div>
<div class="t" style="top:982.5px;font-size:19.5px;line-height:19.5px;color:#222;right:2169px;text-align:right;letter-spacing:2px;margin-right:-2px;">50G</div>
<div class="t" style="top:1005.5px;font-size:19.5px;line-height:19.5px;color:#222;right:2169px;text-align:right;letter-spacing:2px;margin-right:-2px;">45G</div>
<div class="t" style="top:1030.5px;font-size:19.5px;line-height:19.5px;color:#222;right:2169px;text-align:right;letter-spacing:2px;margin-right:-2px;">40G</div>
<div class="t" style="top:1053.2px;font-size:19.5px;line-height:19.5px;color:#222;right:2169px;text-align:right;letter-spacing:2px;margin-right:-2px;">35G</div>
<div class="t" style="top:1076.2px;font-size:19.5px;line-height:19.5px;color:#222;right:2169px;text-align:right;letter-spacing:2px;margin-right:-2px;">30G</div>
<div class="t" style="top:1099.1px;font-size:19.5px;line-height:19.5px;color:#222;right:2169px;text-align:right;letter-spacing:2px;margin-right:-2px;">25G</div>
<div class="t" style="top:1149.5px;font-size:19.5px;line-height:19.5px;color:#6cb347;right:2169px;text-align:right;letter-spacing:2px;margin-right:-2px;">25G</div>
<div class="t" style="top:1159.0px;font-size:19.5px;line-height:19.5px;color:#6cb347;right:2169px;text-align:right;letter-spacing:2px;margin-right:-2px;">20G</div>
<div class="t" style="top:1168.5px;font-size:19.5px;line-height:19.5px;color:#6cb347;right:2169px;text-align:right;letter-spacing:2px;margin-right:-2px;">15G</div>
<div class="t" style="top:1178.5px;font-size:19.5px;line-height:19.5px;color:#6cb347;right:2169px;text-align:right;letter-spacing:2px;margin-right:-2px;">10G</div>
<div class="t" style="top:1188.5px;font-size:19.5px;line-height:19.5px;color:#6cb347;right:2169px;text-align:right;letter-spacing:2px;margin-right:-2px;">5G</div>
<div class="t" style="top:1201.0px;font-size:19.5px;line-height:19.5px;color:#6cb347;right:2169px;text-align:right;letter-spacing:2px;margin-right:-2px;">0.0</div>
<div class="t" style="top:1475.5px;font-size:19.5px;line-height:19.5px;color:#283593;right:2169px;text-align:right;letter-spacing:2px;margin-right:-2px;">4</div>
<div class="t" style="top:1499.2px;font-size:19.5px;line-height:19.5px;color:#283593;right:2169px;text-align:right;letter-spacing:2px;margin-right:-2px;">3</div>
<div class="t" style="top:1522.5px;font-size:19.5px;line-height:19.5px;color:#283593;right:2169px;text-align:right;letter-spacing:2px;margin-right:-2px;">2</div>
<svg style="left:0px;top:0px;pointer-events:none;" width="3457" height="1985" viewBox="0 0 3457 1985"><defs><clipPath id="cc"><rect x="1296" y="291" width="1446" height="1243"/></clipPath></defs><g clip-path="url(#cc)"><rect x="1318.50" y="427" width="4" height="32" fill="#d9b86c"/><rect x="1402.00" y="427" width="4" height="32" fill="#d9b86c"/><rect x="1485.50" y="427" width="4" height="32" fill="#d9b86c"/><rect x="1569.00" y="427" width="4" height="32" fill="#d9b86c"/><rect x="1652.50" y="427" width="4" height="32" fill="#d9b86c"/><rect x="1736.00" y="427" width="4" height="32" fill="#d9b86c"/><rect x="1819.50" y="427" width="4" height="32" fill="#d9b86c"/><rect x="1903.00" y="427" width="4" height="32" fill="#d9b86c"/><rect x="1986.50" y="427" width="4" height="32" fill="#d9b86c"/><rect x="2070.00" y="427" width="4" height="32" fill="#d9b86c"/><rect x="2153.50" y="427" width="4" height="32" fill="#d9b86c"/><rect x="2237.00" y="427" width="4" height="32" fill="#d9b86c"/><rect x="2320.50" y="427" width="4" height="32" fill="#d9b86c"/><rect x="2404.00" y="427" width="4" height="32" fill="#d9b86c"/><rect x="2487.50" y="427" width="4" height="32" fill="#d9b86c"/><rect x="2571.00" y="427" width="4" height="32" fill="#d9b86c"/><rect x="2654.50" y="427" width="4" height="32" fill="#d9b86c"/><rect x="2738.00" y="427" width="4" height="32" fill="#d9b86c"/><path d="M1296 492.5 H2742" stroke="#e0c6ee" stroke-width="2" stroke-dasharray="8 8" fill="none"/><path d="M1296 542.5 H2742" stroke="#e0c6ee" stroke-width="2" stroke-dasharray="8 8" fill="none"/><path d="M1296 592.5 H2742" stroke="#e0c6ee" stroke-width="2" stroke-dasharray="8 8" fill="none"/><path d="M1296 643 H2742" stroke="#e0c6ee" stroke-width="2" stroke-dasharray="8 8" fill="none"/><path d="M1296 530 H2742" stroke="#b9c0e2" stroke-width="2" stroke-dasharray="8 8" fill="none"/><path d="M1296 577 H2742" stroke="#b9c0e2" stroke-width="2" stroke-dasharray="8 8" fill="none"/><path d="M1296 624.5 H2742" stroke="#b9c0e2" stroke-width="2" stroke-dasharray="8 8" fill="none"/><path d="M1296.00 488.81 L1297.00 487.44 L1298.00 486.52 L1299.00 486.06 L1300.00 486.06 L1301.00 486.52 L1302.00 487.44 L1303.00 488.81 L1304.00 490.63 L1305.00 492.88 L1306.00 495.56 L1307.00 498.64 L1308.00 502.11 L1309.00 505.95 L1310.00 510.14 L1311.00 514.66 L1312.00 519.47 L1313.00 524.56 L1314.00 529.89 L1315.00 535.43 L1316.00 541.15 L1317.00 547.02 L1318.00 553.01 L1319.00 559.08 L1320.00 565.20 L1321.00 571.33 L1322.00 577.44 L1323.00 583.49 L1324.00 589.46 L1325.00 595.29 L1326.00 600.98 L1327.00 606.47 L1328.00 611.74 L1329.00 616.76 L1330.00 621.50 L1331.00 625.94 L1332.00 630.04 L1333.00 633.79 L1334.00 637.17 L1335.00 640.15 L1336.00 642.72 L1337.00 644.87 L1338.00 646.57 L1339.00 647.83 L1340.00 648.64 L1341.00 648.99 L1342.00 648.87 L1343.00 648.29 L1344.00 647.26 L1345.00 645.78 L1346.00 643.85 L1347.00 641.49 L1348.00 638.71 L1349.00 635.53 L1350.00 631.96 L1351.00 628.03 L1352.00 623.76 L1353.00 619.17 L1354.00 614.28 L1355.00 609.13 L1356.00 603.75 L1357.00 598.16 L1358.00 592.39 L1359.00 586.49 L1360.00 580.48 L1361.00 574.39 L1362.00 568.27 L1363.00 562.14 L1364.00 556.04 L1365.00 550.01 L1366.00 544.07 L1367.00 538.27 L1368.00 532.63 L1369.00 527.19 L1370.00 521.98 L1371.00 517.03 L1372.00 512.36 L1373.00 508.01 L1374.00 503.99 L1375.00 500.33 L1376.00 497.05 L1377.00 494.17 L1378.00 491.70 L1379.00 489.66 L1380.00 488.07 L1381.00 486.92 L1382.00 486.23 L1383.00 486.00 L1384.00 486.23 L1385.00 486.92 L1386.00 488.07 L1387.00 489.66 L1388.00 491.70 L1389.00 494.17 L1390.00 497.05 L1391.00 500.33 L1392.00 503.99 L1393.00 508.01 L1394.00 512.36 L1395.00 517.03 L1396.00 521.98 L1397.00 527.19 L1398.00 532.63 L1399.00 538.27 L1400.00 544.07 L1401.00 550.01 L1402.00 556.04 L1403.00 562.14 L1404.00 568.27 L1405.00 574.39 L1406.00 580.48 L1407.00 586.49 L1408.00 592.39 L1409.00 598.16 L1410.00 603.75 L1411.00 609.13 L1412.00 614.28 L1413.00 619.17 L1414.00 623.76 L1415.00 628.03 L1416.00 631.96 L1417.00 635.53 L1418.00 638.71 L1419.00 641.49 L1420.00 643.85 L1421.00 645.78 L1422.00 647.26 L1423.00 648.29 L1424.00 648.87 L1425.00 648.99 L1426.00 648.64 L1427.00 647.83 L1428.00 646.57 L1429.00 644.87 L1430.00 642.72 L1431.00 640.15 L1432.00 637.17 L1433.00 633.79 L1434.00 630.04 L1435.00 625.94 L1436.00 621.50 L1437.00 616.76 L1438.00 611.74 L1439.00 606.47 L1440.00 600.98 L1441.00 595.29 L1442.00 589.46 L1443.00 583.49 L1444.00 577.44 L1445.00 571.33 L1446.00 565.20 L1447.00 559.08 L1448.00 553.01 L1449.00 547.02 L1450.00 541.15 L1451.00 535.43 L1452.00 529.89 L1453.00 524.56 L1454.00 519.47 L1455.00 514.66 L1456.00 510.14 L1457.00 505.95 L1458.00 502.11 L1459.00 498.64 L1460.00 495.56 L1461.00 492.88 L1462.00 490.63 L1463.00 488.81 L1464.00 487.44 L1465.00 486.52 L1466.00 486.06 L1467.00 486.06 L1468.00 486.52 L1469.00 487.44 L1470.00 488.81 L1471.00 490.63 L1472.00 492.88 L1473.00 495.56 L1474.00 498.64 L1475.00 502.11 L1476.00 505.95 L1477.00 510.14 L1478.00 514.66 L1479.00 519.47 L1480.00 524.56 L1481.00 529.89 L1482.00 535.43 L1483.00 541.15 L1484.00 547.02 L1485.00 553.01 L1486.00 559.08 L1487.00 565.20 L1488.00 571.33 L1489.00 577.44 L1490.00 583.49 L1491.00 589.46 L1492.00 595.29 L1493.00 600.98 L1494.00 606.47 L1495.00 611.74 L1496.00 616.76 L1497.00 621.50 L1498.00 625.94 L1499.00 630.04 L1500.00 633.79 L1501.00 637.17 L1502.00 640.15 L1503.00 642.72 L1504.00 644.87 L1505.00 646.57 L1506.00 647.83 L1507.00 648.64 L1508.00 648.99 L1509.00 648.87 L1510.00 648.29 L1511.00 647.26 L1512.00 645.78 L1513.00 643.85 L1514.00 641.49 L1515.00 638.71 L1516.00 635.53 L1517.00 631.96 L1518.00 628.03 L1519.00 623.76 L1520.00 619.17 L1521.00 614.28 L1522.00 609.13 L1523.00 603.75 L1524.00 598.16 L1525.00 592.39 L1526.00 586.49 L1527.00 580.48 L1528.00 574.39 L1529.00 568.27 L1530.00 562.14 L1531.00 556.04 L1532.00 550.01 L1533.00 544.07 L1534.00 538.27 L1535.00 532.63 L1536.00 527.19 L1537.00 521.98 L1538.00 517.03 L1539.00 512.36 L1540.00 508.01 L1541.00 503.99 L1542.00 500.33 L1543.00 497.05 L1544.00 494.17 L1545.00 491.70 L1546.00 489.66 L1547.00 488.07 L1548.00 486.92 L1549.00 486.23 L1550.00 486.00 L1551.00 486.23 L1552.00 486.92 L1553.00 488.07 L1554.00 489.66 L1555.00 491.70 L1556.00 494.17 L1557.00 497.05 L1558.00 500.33 L1559.00 503.99 L1560.00 508.01 L1561.00 512.36 L1562.00 517.03 L1563.00 521.98 L1564.00 527.19 L1565.00 532.63 L1566.00 538.27 L1567.00 544.07 L1568.00 550.01 L1569.00 556.04 L1570.00 562.14 L1571.00 568.27 L1572.00 574.39 L1573.00 580.48 L1574.00 586.49 L1575.00 592.39 L1576.00 598.16 L1577.00 603.75 L1578.00 609.13 L1579.00 614.28 L1580.00 619.17 L1581.00 623.76 L1582.00 628.03 L1583.00 631.96 L1584.00 635.53 L1585.00 638.71 L1586.00 641.49 L1587.00 643.85 L1588.00 645.78 L1589.00 647.26 L1590.00 648.29 L1591.00 648.87 L1592.00 648.99 L1593.00 648.64 L1594.00 647.83 L1595.00 646.57 L1596.00 644.87 L1597.00 642.72 L1598.00 640.15 L1599.00 637.17 L1600.00 633.79 L1601.00 630.04 L1602.00 625.94 L1603.00 621.50 L1604.00 616.76 L1605.00 611.74 L1606.00 606.47 L1607.00 600.98 L1608.00 595.29 L1609.00 589.46 L1610.00 583.49 L1611.00 577.44 L1612.00 571.33 L1613.00 565.20 L1614.00 559.08 L1615.00 553.01 L1616.00 547.02 L1617.00 541.15 L1618.00 535.43 L1619.00 529.89 L1620.00 524.56 L1621.00 519.47 L1622.00 514.66 L1623.00 510.14 L1624.00 505.95 L1625.00 502.11 L1626.00 498.64 L1627.00 495.56 L1628.00 492.88 L1629.00 490.63 L1630.00 488.81 L1631.00 487.44 L1632.00 486.52 L1633.00 486.06 L1634.00 486.06 L1635.00 486.52 L1636.00 487.44 L1637.00 488.81 L1638.00 490.63 L1639.00 492.88 L1640.00 495.56 L1641.00 498.64 L1642.00 502.11 L1643.00 505.95 L1644.00 510.14 L1645.00 514.66 L1646.00 519.47 L1647.00 524.56 L1648.00 529.89 L1649.00 535.43 L1650.00 541.15 L1651.00 547.02 L1652.00 553.01 L1653.00 559.08 L1654.00 565.20 L1655.00 571.33 L1656.00 577.44 L1657.00 583.49 L1658.00 589.46 L1659.00 595.29 L1660.00 600.98 L1661.00 606.47 L1662.00 611.74 L1663.00 616.76 L1664.00 621.50 L1665.00 625.94 L1666.00 630.04 L1667.00 633.79 L1668.00 637.17 L1669.00 640.15 L1670.00 642.72 L1671.00 644.87 L1672.00 646.57 L1673.00 647.83 L1674.00 648.64 L1675.00 648.99 L1676.00 648.87 L1677.00 648.29 L1678.00 647.26 L1679.00 645.78 L1680.00 643.85 L1681.00 641.49 L1682.00 638.71 L1683.00 635.53 L1684.00 631.96 L1685.00 628.03 L1686.00 623.76 L1687.00 619.17 L1688.00 614.28 L1689.00 609.13 L1690.00 603.75 L1691.00 598.16 L1692.00 592.39 L1693.00 586.49 L1694.00 580.48 L1695.00 574.39 L1696.00 568.27 L1697.00 562.14 L1698.00 556.04 L1699.00 550.01 L1700.00 544.07 L1701.00 538.27 L1702.00 532.63 L1703.00 527.19 L1704.00 521.98 L1705.00 517.03 L1706.00 512.36 L1707.00 508.01 L1708.00 503.99 L1709.00 500.33 L1710.00 497.05 L1711.00 494.17 L1712.00 491.70 L1713.00 489.66 L1714.00 488.07 L1715.00 486.92 L1716.00 486.23 L1717.00 486.00 L1718.00 486.23 L1719.00 486.92 L1720.00 488.07 L1721.00 489.66 L1722.00 491.70 L1723.00 494.17 L1724.00 497.05 L1725.00 500.33 L1726.00 503.99 L1727.00 508.01 L1728.00 512.36 L1729.00 517.03 L1730.00 521.98 L1731.00 527.19 L1732.00 532.63 L1733.00 538.27 L1734.00 544.07 L1735.00 550.01 L1736.00 556.04 L1737.00 562.14 L1738.00 568.27 L1739.00 574.39 L1740.00 580.48 L1741.00 586.49 L1742.00 592.39 L1743.00 598.16 L1744.00 603.75 L1745.00 609.13 L1746.00 614.28 L1747.00 619.17 L1748.00 623.76 L1749.00 628.03 L1750.00 631.96 L1751.00 635.53 L1752.00 638.71 L1753.00 641.49 L1754.00 643.85 L1755.00 645.78 L1756.00 647.26 L1757.00 648.29 L1758.00 648.87 L1759.00 648.99 L1760.00 648.64 L1761.00 647.83 L1762.00 646.57 L1763.00 644.87 L1764.00 642.72 L1765.00 640.15 L1766.00 637.17 L1767.00 633.79 L1768.00 630.04 L1769.00 625.94 L1770.00 621.50 L1771.00 616.76 L1772.00 611.74 L1773.00 606.47 L1774.00 600.98 L1775.00 595.29 L1776.00 589.46 L1777.00 583.49 L1778.00 577.44 L1779.00 571.33 L1780.00 565.20 L1781.00 559.08 L1782.00 553.01 L1783.00 547.02 L1784.00 541.15 L1785.00 535.43 L1786.00 529.89 L1787.00 524.56 L1788.00 519.47 L1789.00 514.66 L1790.00 510.14 L1791.00 505.95 L1792.00 502.11 L1793.00 498.64 L1794.00 495.56 L1795.00 492.88 L1796.00 490.63 L1797.00 488.81 L1798.00 487.44 L1799.00 486.52 L1800.00 486.06 L1801.00 486.06 L1802.00 486.52 L1803.00 487.44 L1804.00 488.81 L1805.00 490.63 L1806.00 492.88 L1807.00 495.56 L1808.00 498.64 L1809.00 502.11 L1810.00 505.95 L1811.00 510.14 L1812.00 514.66 L1813.00 519.47 L1814.00 524.56 L1815.00 529.89 L1816.00 535.43 L1817.00 541.15 L1818.00 547.02 L1819.00 553.01 L1820.00 559.08 L1821.00 565.20 L1822.00 571.33 L1823.00 577.44 L1824.00 583.49 L1825.00 589.46 L1826.00 595.29 L1827.00 600.98 L1828.00 606.47 L1829.00 611.74 L1830.00 616.76 L1831.00 621.50 L1832.00 625.94 L1833.00 630.04 L1834.00 633.79 L1835.00 637.17 L1836.00 640.15 L1837.00 642.72 L1838.00 644.87 L1839.00 646.57 L1840.00 647.83 L1841.00 648.64 L1842.00 648.99 L1843.00 648.87 L1844.00 648.29 L1845.00 647.26 L1846.00 645.78 L1847.00 643.85 L1848.00 641.49 L1849.00 638.71 L1850.00 635.53 L1851.00 631.96 L1852.00 628.03 L1853.00 623.76 L1854.00 619.17 L1855.00 614.28 L1856.00 609.13 L1857.00 603.75 L1858.00 598.16 L1859.00 592.39 L1860.00 586.49 L1861.00 580.48 L1862.00 574.39 L1863.00 568.27 L1864.00 562.14 L1865.00 556.04 L1866.00 550.01 L1867.00 544.07 L1868.00 538.27 L1869.00 532.63 L1870.00 527.19 L1871.00 521.98 L1872.00 517.03 L1873.00 512.36 L1874.00 508.01 L1875.00 503.99 L1876.00 500.33 L1877.00 497.05 L1878.00 494.17 L1879.00 491.70 L1880.00 489.66 L1881.00 488.07 L1882.00 486.92 L1883.00 486.23 L1884.00 486.00 L1885.00 486.23 L1886.00 486.92 L1887.00 488.07 L1888.00 489.66 L1889.00 491.70 L1890.00 494.17 L1891.00 497.05 L1892.00 500.33 L1893.00 503.99 L1894.00 508.01 L1895.00 512.36 L1896.00 517.03 L1897.00 521.98 L1898.00 527.19 L1899.00 532.63 L1900.00 538.27 L1901.00 544.07 L1902.00 550.01 L1903.00 556.04 L1904.00 562.14 L1905.00 568.27 L1906.00 574.39 L1907.00 580.48 L1908.00 586.49 L1909.00 592.39 L1910.00 598.16 L1911.00 603.75 L1912.00 609.13 L1913.00 614.28 L1914.00 619.17 L1915.00 623.76 L1916.00 628.03 L1917.00 631.96 L1918.00 635.53 L1919.00 638.71 L1920.00 641.49 L1921.00 643.85 L1922.00 645.78 L1923.00 647.26 L1924.00 648.29 L1925.00 648.87 L1926.00 648.99 L1927.00 648.64 L1928.00 647.83 L1929.00 646.57 L1930.00 644.87 L1931.00 642.72 L1932.00 640.15 L1933.00 637.17 L1934.00 633.79 L1935.00 630.04 L1936.00 625.94 L1937.00 621.50 L1938.00 616.76 L1939.00 611.74 L1940.00 606.47 L1941.00 600.98 L1942.00 595.29 L1943.00 589.46 L1944.00 583.49 L1945.00 577.44 L1946.00 571.33 L1947.00 565.20 L1948.00 559.08 L1949.00 553.01 L1950.00 547.02 L1951.00 541.15 L1952.00 535.43 L1953.00 529.89 L1954.00 524.56 L1955.00 519.47 L1956.00 514.66 L1957.00 510.14 L1958.00 505.95 L1959.00 502.11 L1960.00 498.64 L1961.00 495.56 L1962.00 492.88 L1963.00 490.63 L1964.00 488.81 L1965.00 487.44 L1966.00 486.52 L1967.00 486.06 L1968.00 486.06 L1969.00 486.52 L1970.00 487.44 L1971.00 488.81 L1972.00 490.63 L1973.00 492.88 L1974.00 495.56 L1975.00 498.64 L1976.00 502.11 L1977.00 505.95 L1978.00 510.14 L1979.00 514.66 L1980.00 519.47 L1981.00 524.56 L1982.00 529.89 L1983.00 535.43 L1984.00 541.15 L1985.00 547.02 L1986.00 553.01 L1987.00 559.08 L1988.00 565.20 L1989.00 571.33 L1990.00 577.44 L1991.00 583.49 L1992.00 589.46 L1993.00 595.29 L1994.00 600.98 L1995.00 606.47 L1996.00 611.74 L1997.00 616.76 L1998.00 621.50 L1999.00 625.94 L2000.00 630.04 L2001.00 633.79 L2002.00 637.17 L2003.00 640.15 L2004.00 642.72 L2005.00 644.87 L2006.00 646.57 L2007.00 647.83 L2008.00 648.64 L2009.00 648.99 L2010.00 648.87 L2011.00 648.29 L2012.00 647.26 L2013.00 645.78 L2014.00 643.85 L2015.00 641.49 L2016.00 638.71 L2017.00 635.53 L2018.00 631.96 L2019.00 628.03 L2020.00 623.76 L2021.00 619.17 L2022.00 614.28 L2023.00 609.13 L2024.00 603.75 L2025.00 598.16 L2026.00 592.39 L2027.00 586.49 L2028.00 580.48 L2029.00 574.39 L2030.00 568.27 L2031.00 562.14 L2032.00 556.04 L2033.00 550.01 L2034.00 544.07 L2035.00 538.27 L2036.00 532.63 L2037.00 527.19 L2038.00 521.98 L2039.00 517.03 L2040.00 512.36 L2041.00 508.01 L2042.00 503.99 L2043.00 500.33 L2044.00 497.05 L2045.00 494.17 L2046.00 491.70 L2047.00 489.66 L2048.00 488.07 L2049.00 486.92 L2050.00 486.23 L2051.00 486.00 L2052.00 486.23 L2053.00 486.92 L2054.00 488.07 L2055.00 489.66 L2056.00 491.70 L2057.00 494.17 L2058.00 497.05 L2059.00 500.33 L2060.00 503.99 L2061.00 508.01 L2062.00 512.36 L2063.00 517.03 L2064.00 521.98 L2065.00 527.19 L2066.00 532.63 L2067.00 538.27 L2068.00 544.07 L2069.00 550.01 L2070.00 556.04 L2071.00 562.14 L2072.00 568.27 L2073.00 574.39 L2074.00 580.48 L2075.00 586.49 L2076.00 592.39 L2077.00 598.16 L2078.00 603.75 L2079.00 609.13 L2080.00 614.28 L2081.00 619.17 L2082.00 623.76 L2083.00 628.03 L2084.00 631.96 L2085.00 635.53 L2086.00 638.71 L2087.00 641.49 L2088.00 643.85 L2089.00 645.78 L2090.00 647.26 L2091.00 648.29 L2092.00 648.87 L2093.00 648.99 L2094.00 648.64 L2095.00 647.83 L2096.00 646.57 L2097.00 644.87 L2098.00 642.72 L2099.00 640.15 L2100.00 637.17 L2101.00 633.79 L2102.00 630.04 L2103.00 625.94 L2104.00 621.50 L2105.00 616.76 L2106.00 611.74 L2107.00 606.47 L2108.00 600.98 L2109.00 595.29 L2110.00 589.46 L2111.00 583.49 L2112.00 577.44 L2113.00 571.33 L2114.00 565.20 L2115.00 559.08 L2116.00 553.01 L2117.00 547.02 L2118.00 541.15 L2119.00 535.43 L2120.00 529.89 L2121.00 524.56 L2122.00 519.47 L2123.00 514.66 L2124.00 510.14 L2125.00 505.95 L2126.00 502.11 L2127.00 498.64 L2128.00 495.56 L2129.00 492.88 L2130.00 490.63 L2131.00 488.81 L2132.00 487.44 L2133.00 486.52 L2134.00 486.06 L2135.00 486.06 L2136.00 486.52 L2137.00 487.44 L2138.00 488.81 L2139.00 490.63 L2140.00 492.88 L2141.00 495.56 L2142.00 498.64 L2143.00 502.11 L2144.00 505.95 L2145.00 510.14 L2146.00 514.66 L2147.00 519.47 L2148.00 524.56 L2149.00 529.89 L2150.00 535.43 L2151.00 541.15 L2152.00 547.02 L2153.00 553.01 L2154.00 559.08 L2155.00 565.20 L2156.00 571.33 L2157.00 577.44 L2158.00 583.49 L2159.00 589.46 L2160.00 595.29 L2161.00 600.98 L2162.00 606.47 L2163.00 611.74 L2164.00 616.76 L2165.00 621.50 L2166.00 625.94 L2167.00 630.04 L2168.00 633.79 L2169.00 637.17 L2170.00 640.15 L2171.00 642.72 L2172.00 644.87 L2173.00 646.57 L2174.00 647.83 L2175.00 648.64 L2176.00 648.99 L2177.00 648.87 L2178.00 648.29 L2179.00 647.26 L2180.00 645.78 L2181.00 643.85 L2182.00 641.49 L2183.00 638.71 L2184.00 635.53 L2185.00 631.96 L2186.00 628.03 L2187.00 623.76 L2188.00 619.17 L2189.00 614.28 L2190.00 609.13 L2191.00 603.75 L2192.00 598.16 L2193.00 592.39 L2194.00 586.49 L2195.00 580.48 L2196.00 574.39 L2197.00 568.27 L2198.00 562.14 L2199.00 556.04 L2200.00 550.01 L2201.00 544.07 L2202.00 538.27 L2203.00 532.63 L2204.00 527.19 L2205.00 521.98 L2206.00 517.03 L2207.00 512.36 L2208.00 508.01 L2209.00 503.99 L2210.00 500.33 L2211.00 497.05 L2212.00 494.17 L2213.00 491.70 L2214.00 489.66 L2215.00 488.07 L2216.00 486.92 L2217.00 486.23 L2218.00 486.00 L2219.00 486.23 L2220.00 486.92 L2221.00 488.07 L2222.00 489.66 L2223.00 491.70 L2224.00 494.17 L2225.00 497.05 L2226.00 500.33 L2227.00 503.99 L2228.00 508.01 L2229.00 512.36 L2230.00 517.03 L2231.00 521.98 L2232.00 527.19 L2233.00 532.63 L2234.00 538.27 L2235.00 544.07 L2236.00 550.01 L2237.00 556.04 L2238.00 562.14 L2239.00 568.27 L2240.00 574.39 L2241.00 580.48 L2242.00 586.49 L2243.00 592.39 L2244.00 598.16 L2245.00 603.75 L2246.00 609.13 L2247.00 614.28 L2248.00 619.17 L2249.00 623.76 L2250.00 628.03 L2251.00 631.96 L2252.00 635.53 L2253.00 638.71 L2254.00 641.49 L2255.00 643.85 L2256.00 645.78 L2257.00 647.26 L2258.00 648.29 L2259.00 648.87 L2260.00 648.99 L2261.00 648.64 L2262.00 647.83 L2263.00 646.57 L2264.00 644.87 L2265.00 642.72 L2266.00 640.15 L2267.00 637.17 L2268.00 633.79 L2269.00 630.04 L2270.00 625.94 L2271.00 621.50 L2272.00 616.76 L2273.00 611.74 L2274.00 606.47 L2275.00 600.98 L2276.00 595.29 L2277.00 589.46 L2278.00 583.49 L2279.00 577.44 L2280.00 571.33 L2281.00 565.20 L2282.00 559.08 L2283.00 553.01 L2284.00 547.02 L2285.00 541.15 L2286.00 535.43 L2287.00 529.89 L2288.00 524.56 L2289.00 519.47 L2290.00 514.66 L2291.00 510.14 L2292.00 505.95 L2293.00 502.11 L2294.00 498.64 L2295.00 495.56 L2296.00 492.88 L2297.00 490.63 L2298.00 488.81 L2299.00 487.44 L2300.00 486.52 L2301.00 486.06 L2302.00 486.06 L2303.00 486.52 L2304.00 487.44 L2305.00 488.81 L2306.00 490.63 L2307.00 492.88 L2308.00 495.56 L2309.00 498.64 L2310.00 502.11 L2311.00 505.95 L2312.00 510.14 L2313.00 514.66 L2314.00 519.47 L2315.00 524.56 L2316.00 529.89 L2317.00 535.43 L2318.00 541.15 L2319.00 547.02 L2320.00 553.01 L2321.00 559.08 L2322.00 565.20 L2323.00 571.33 L2324.00 577.44 L2325.00 583.49 L2326.00 589.46 L2327.00 595.29 L2328.00 600.98 L2329.00 606.47 L2330.00 611.74 L2331.00 616.76 L2332.00 621.50 L2333.00 625.94 L2334.00 630.04 L2335.00 633.79 L2336.00 637.17 L2337.00 640.15 L2338.00 642.72 L2339.00 644.87 L2340.00 646.57 L2341.00 647.83 L2342.00 648.64 L2343.00 648.99 L2344.00 648.87 L2345.00 648.29 L2346.00 647.26 L2347.00 645.78 L2348.00 643.85 L2349.00 641.49 L2350.00 638.71 L2351.00 635.53 L2352.00 631.96 L2353.00 628.03 L2354.00 623.76 L2355.00 619.17 L2356.00 614.28 L2357.00 609.13 L2358.00 603.75 L2359.00 598.16 L2360.00 592.39 L2361.00 586.49 L2362.00 580.48 L2363.00 574.39 L2364.00 568.27 L2365.00 562.14 L2366.00 556.04 L2367.00 550.01 L2368.00 544.07 L2369.00 538.27 L2370.00 532.63 L2371.00 527.19 L2372.00 521.98 L2373.00 517.03 L2374.00 512.36 L2375.00 508.01 L2376.00 503.99 L2377.00 500.33 L2378.00 497.05 L2379.00 494.17 L2380.00 491.70 L2381.00 489.66 L2382.00 488.07 L2383.00 486.92 L2384.00 486.23 L2385.00 486.00 L2386.00 486.23 L2387.00 486.92 L2388.00 488.07 L2389.00 489.66 L2390.00 491.70 L2391.00 494.17 L2392.00 497.05 L2393.00 500.33 L2394.00 503.99 L2395.00 508.01 L2396.00 512.36 L2397.00 517.03 L2398.00 521.98 L2399.00 527.19 L2400.00 532.63 L2401.00 538.27 L2402.00 544.07 L2403.00 550.01 L2404.00 556.04 L2405.00 562.14 L2406.00 568.27 L2407.00 574.39 L2408.00 580.48 L2409.00 586.49 L2410.00 592.39 L2411.00 598.16 L2412.00 603.75 L2413.00 609.13 L2414.00 614.28 L2415.00 619.17 L2416.00 623.76 L2417.00 628.03 L2418.00 631.96 L2419.00 635.53 L2420.00 638.71 L2421.00 641.49 L2422.00 643.85 L2423.00 645.78 L2424.00 647.26 L2425.00 648.29 L2426.00 648.87 L2427.00 648.99 L2428.00 648.64 L2429.00 647.83 L2430.00 646.57 L2431.00 644.87 L2432.00 642.72 L2433.00 640.15 L2434.00 637.17 L2435.00 633.79 L2436.00 630.04 L2437.00 625.94 L2438.00 621.50 L2439.00 616.76 L2440.00 611.74 L2441.00 606.47 L2442.00 600.98 L2443.00 595.29 L2444.00 589.46 L2445.00 583.49 L2446.00 577.44 L2447.00 571.33 L2448.00 565.20 L2449.00 559.08 L2450.00 553.01 L2451.00 547.02 L2452.00 541.15 L2453.00 535.43 L2454.00 529.89 L2455.00 524.56 L2456.00 519.47 L2457.00 514.66 L2458.00 510.14 L2459.00 505.95 L2460.00 502.11 L2461.00 498.64 L2462.00 495.56 L2463.00 492.88 L2464.00 490.63 L2465.00 488.81 L2466.00 487.44 L2467.00 486.52 L2468.00 486.06 L2469.00 486.06 L2470.00 486.52 L2471.00 487.44 L2472.00 488.81 L2473.00 490.63 L2474.00 492.88 L2475.00 495.56 L2476.00 498.64 L2477.00 502.11 L2478.00 505.95 L2479.00 510.14 L2480.00 514.66 L2481.00 519.47 L2482.00 524.56 L2483.00 529.89 L2484.00 535.43 L2485.00 541.15 L2486.00 547.02 L2487.00 553.01 L2488.00 559.08 L2489.00 565.20 L2490.00 571.33 L2491.00 577.44 L2492.00 583.49 L2493.00 589.46 L2494.00 595.29 L2495.00 600.98 L2496.00 606.47 L2497.00 611.74 L2498.00 616.76 L2499.00 621.50 L2500.00 625.94 L2501.00 630.04 L2502.00 633.79 L2503.00 637.17 L2504.00 640.15 L2505.00 642.72 L2506.00 644.87 L2507.00 646.57 L2508.00 647.83 L2509.00 648.64 L2510.00 648.99 L2511.00 648.87 L2512.00 648.29 L2513.00 647.26 L2514.00 645.78 L2515.00 643.85 L2516.00 641.49 L2517.00 638.71 L2518.00 635.53 L2519.00 631.96 L2520.00 628.03 L2521.00 623.76 L2522.00 619.17 L2523.00 614.28 L2524.00 609.13 L2525.00 603.75 L2526.00 598.16 L2527.00 592.39 L2528.00 586.49 L2529.00 580.48 L2530.00 574.39 L2531.00 568.27 L2532.00 562.14 L2533.00 556.04 L2534.00 550.01 L2535.00 544.07 L2536.00 538.27 L2537.00 532.63 L2538.00 527.19 L2539.00 521.98 L2540.00 517.03 L2541.00 512.36 L2542.00 508.01 L2543.00 503.99 L2544.00 500.33 L2545.00 497.05 L2546.00 494.17 L2547.00 491.70 L2548.00 489.66 L2549.00 488.07 L2550.00 486.92 L2551.00 486.23 L2552.00 486.00 L2553.00 486.23 L2554.00 486.92 L2555.00 488.07 L2556.00 489.66 L2557.00 491.70 L2558.00 494.17 L2559.00 497.05 L2560.00 500.33 L2561.00 503.99 L2562.00 508.01 L2563.00 512.36 L2564.00 517.03 L2565.00 521.98 L2566.00 527.19 L2567.00 532.63 L2568.00 538.27 L2569.00 544.07 L2570.00 550.01 L2571.00 556.04 L2572.00 562.14 L2573.00 568.27 L2574.00 574.39 L2575.00 580.48 L2576.00 586.49 L2577.00 592.39 L2578.00 598.16 L2579.00 603.75 L2580.00 609.13 L2581.00 614.28 L2582.00 619.17 L2583.00 623.76 L2584.00 628.03 L2585.00 631.96 L2586.00 635.53 L2587.00 638.71 L2588.00 641.49 L2589.00 643.85 L2590.00 645.78 L2591.00 647.26 L2592.00 648.29 L2593.00 648.87 L2594.00 648.99 L2595.00 648.64 L2596.00 647.83 L2597.00 646.57 L2598.00 644.87 L2599.00 642.72 L2600.00 640.15 L2601.00 637.17 L2602.00 633.79 L2603.00 630.04 L2604.00 625.94 L2605.00 621.50 L2606.00 616.76 L2607.00 611.74 L2608.00 606.47 L2609.00 600.98 L2610.00 595.29 L2611.00 589.46 L2612.00 583.49 L2613.00 577.44 L2614.00 571.33 L2615.00 565.20 L2616.00 559.08 L2617.00 553.01 L2618.00 547.02 L2619.00 541.15 L2620.00 535.43 L2621.00 529.89 L2622.00 524.56 L2623.00 519.47 L2624.00 514.66 L2625.00 510.14 L2626.00 505.95 L2627.00 502.11 L2628.00 498.64 L2629.00 495.56 L2630.00 492.88 L2631.00 490.63 L2632.00 488.81 L2633.00 487.44 L2634.00 486.52 L2635.00 486.06 L2636.00 486.06 L2637.00 486.52 L2638.00 487.44 L2639.00 488.81 L2640.00 490.63 L2641.00 492.88 L2642.00 495.56 L2643.00 498.64 L2644.00 502.11 L2645.00 505.95 L2646.00 510.14 L2647.00 514.66 L2648.00 519.47 L2649.00 524.56 L2650.00 529.89 L2651.00 535.43 L2652.00 541.15 L2653.00 547.02 L2654.00 553.01 L2655.00 559.08 L2656.00 565.20 L2657.00 571.33 L2658.00 577.44 L2659.00 583.49 L2660.00 589.46 L2661.00 595.29 L2662.00 600.98 L2663.00 606.47 L2664.00 611.74 L2665.00 616.76 L2666.00 621.50 L2667.00 625.94 L2668.00 630.04 L2669.00 633.79 L2670.00 637.17 L2671.00 640.15 L2672.00 642.72 L2673.00 644.87 L2674.00 646.57 L2675.00 647.83 L2676.00 648.64 L2677.00 648.99 L2678.00 648.87 L2679.00 648.29 L2680.00 647.26 L2681.00 645.78 L2682.00 643.85 L2683.00 641.49 L2684.00 638.71 L2685.00 635.53 L2686.00 631.96 L2687.00 628.03 L2688.00 623.76 L2689.00 619.17 L2690.00 614.28 L2691.00 609.13 L2692.00 603.75 L2693.00 598.16 L2694.00 592.39 L2695.00 586.49 L2696.00 580.48 L2697.00 574.39 L2698.00 568.27 L2699.00 562.14 L2700.00 556.04 L2701.00 550.01 L2702.00 544.07 L2703.00 538.27 L2704.00 532.63 L2705.00 527.19 L2706.00 521.98 L2707.00 517.03 L2708.00 512.36 L2709.00 508.01 L2710.00 503.99 L2711.00 500.33 L2712.00 497.05 L2713.00 494.17 L2714.00 491.70 L2715.00 489.66 L2716.00 488.07 L2717.00 486.92 L2718.00 486.23 L2719.00 486.00 L2720.00 486.23 L2721.00 486.92 L2722.00 488.07 L2723.00 489.66 L2724.00 491.70 L2725.00 494.17 L2726.00 497.05 L2727.00 500.33 L2728.00 503.99 L2729.00 508.01 L2730.00 512.36 L2731.00 517.03 L2732.00 521.98 L2733.00 527.19 L2734.00 532.63 L2735.00 538.27 L2736.00 544.07 L2737.00 550.01 L2738.00 556.04 L2739.00 562.14 L2740.00 568.27 L2741.00 574.39 L2742.00 580.48" stroke="#9c45c2" stroke-width="2.0" fill="none" stroke-linejoin="round" /><path d="M1296.00 600.55 L1296.50 601.85 L1297.00 603.45 L1297.50 605.35 L1298.00 607.51 L1298.50 609.85 L1299.00 612.27 L1299.50 614.75 L1300.00 617.12 L1300.50 619.40 L1301.00 621.56 L1301.50 623.62 L1302.00 625.56 L1302.50 627.39 L1303.00 629.10 L1303.50 630.68 L1304.00 632.15 L1304.50 633.48 L1305.00 634.69 L1305.50 635.77 L1306.00 636.72 L1306.50 637.54 L1307.00 638.23 L1307.50 638.79 L1308.00 639.23 L1308.50 639.57 L1309.00 639.84 L1309.50 640.04 L1310.00 640.22 L1310.50 640.37 L1311.00 640.52 L1311.50 640.66 L1312.00 640.81 L1312.50 640.96 L1313.00 641.10 L1313.50 641.25 L1314.00 641.40 L1314.50 641.54 L1315.00 641.69 L1315.50 641.84 L1316.00 641.99 L1316.50 642.13 L1317.00 642.28 L1317.50 642.43 L1318.00 642.57 L1318.50 642.72 L1319.00 642.87 L1319.50 643.01 L1320.00 643.16 L1320.50 643.31 L1321.00 643.46 L1321.50 643.60 L1322.00 643.75 L1322.50 643.90 L1323.00 644.04 L1323.50 644.19 L1324.00 644.33 L1324.50 644.46 L1325.00 644.55 L1325.50 644.59 L1326.00 644.54 L1326.50 644.36 L1327.00 644.02 L1327.50 643.50 L1328.00 642.78 L1328.50 641.87 L1329.00 640.78 L1329.50 639.51 L1330.00 638.07 L1330.50 636.47 L1331.00 634.72 L1331.50 632.83 L1332.00 630.80 L1332.50 628.64 L1333.00 626.35 L1333.50 623.95 L1334.00 621.43 L1334.50 618.81 L1335.00 616.09 L1335.50 613.27 L1336.00 610.37 L1336.50 607.38 L1337.00 604.32 L1337.50 601.19 L1338.00 598.00 L1338.50 594.75 L1339.00 591.45 L1339.50 588.11 L1340.00 584.74 L1340.50 581.33 L1341.00 577.91 L1341.50 574.46 L1342.00 571.01 L1342.50 567.55 L1343.00 564.09 L1343.50 560.64 L1344.00 557.21 L1344.50 553.80 L1345.00 550.42 L1345.50 547.07 L1346.00 543.77 L1346.50 540.51 L1347.00 537.30 L1347.50 534.15 L1348.00 531.06 L1348.50 528.05 L1349.00 525.11 L1349.50 522.24 L1350.00 519.47 L1350.50 516.78 L1351.00 514.19 L1351.50 511.70 L1352.00 509.31 L1352.50 507.03 L1353.00 504.87 L1353.50 502.82 L1354.00 500.89 L1354.50 499.08 L1355.00 497.40 L1355.50 495.85 L1356.00 494.43 L1356.50 493.14 L1357.00 492.00 L1357.50 490.99 L1358.00 490.12 L1358.50 489.41 L1359.00 488.86 L1359.50 488.50 L1360.00 488.36 L1360.50 488.48 L1361.00 488.90 L1361.50 489.64 L1362.00 490.70 L1362.50 492.07 L1363.00 493.70 L1363.50 495.56 L1364.00 497.63 L1364.50 499.87 L1365.00 502.26 L1365.50 504.79 L1366.00 507.44 L1366.50 510.20 L1367.00 513.07 L1367.50 516.03 L1368.00 519.08 L1368.50 522.20 L1369.00 525.38 L1369.50 528.63 L1370.00 531.93 L1370.50 535.27 L1371.00 538.65 L1371.50 542.06 L1372.00 545.49 L1372.50 548.94 L1373.00 552.40 L1373.50 555.87 L1374.00 559.33 L1374.50 562.78 L1375.00 566.22 L1375.50 569.64 L1376.00 573.03 L1376.50 576.39 L1377.00 579.72 L1377.50 583.00 L1378.00 586.23 L1378.50 589.40 L1379.00 592.52 L1379.50 595.57 L1380.00 598.55 L1380.50 601.46 L1381.00 604.30 L1381.50 607.04 L1382.00 609.70 L1382.50 612.27 L1383.00 614.75 L1383.50 617.12 L1384.00 619.40 L1384.50 621.56 L1385.00 623.62 L1385.50 625.56 L1386.00 627.39 L1386.50 629.10 L1387.00 630.68 L1387.50 632.15 L1388.00 633.48 L1388.50 634.69 L1389.00 635.77 L1389.50 636.72 L1390.00 637.54 L1390.50 638.23 L1391.00 638.79 L1391.50 639.23 L1392.00 639.57 L1392.50 639.84 L1393.00 640.04 L1393.50 640.22 L1394.00 640.37 L1394.50 640.52 L1395.00 640.66 L1395.50 640.81 L1396.00 640.96 L1396.50 641.10 L1397.00 641.25 L1397.50 641.40 L1398.00 641.54 L1398.50 641.69 L1399.00 641.84 L1399.50 641.99 L1400.00 642.13 L1400.50 642.28 L1401.00 642.43 L1401.50 642.57 L1402.00 642.72 L1402.50 642.87 L1403.00 643.01 L1403.50 643.16 L1404.00 643.31 L1404.50 643.46 L1405.00 643.60 L1405.50 643.75 L1406.00 643.90 L1406.50 644.04 L1407.00 644.19 L1407.50 644.33 L1408.00 644.46 L1408.50 644.55 L1409.00 644.59 L1409.50 644.54 L1410.00 644.36 L1410.50 644.02 L1411.00 643.50 L1411.50 642.78 L1412.00 641.87 L1412.50 640.78 L1413.00 639.51 L1413.50 638.07 L1414.00 636.47 L1414.50 634.72 L1415.00 632.83 L1415.50 630.80 L1416.00 628.64 L1416.50 626.35 L1417.00 623.95 L1417.50 621.43 L1418.00 618.81 L1418.50 616.09 L1419.00 613.27 L1419.50 610.37 L1420.00 607.38 L1420.50 604.32 L1421.00 601.19 L1421.50 598.00 L1422.00 594.75 L1422.50 591.45 L1423.00 588.11 L1423.50 584.74 L1424.00 581.33 L1424.50 577.91 L1425.00 574.46 L1425.50 571.01 L1426.00 567.55 L1426.50 564.09 L1427.00 560.64 L1427.50 557.21 L1428.00 553.80 L1428.50 550.42 L1429.00 547.07 L1429.50 543.77 L1430.00 540.51 L1430.50 537.30 L1431.00 534.15 L1431.50 531.06 L1432.00 528.05 L1432.50 525.11 L1433.00 522.24 L1433.50 519.47 L1434.00 516.78 L1434.50 514.19 L1435.00 511.70 L1435.50 509.31 L1436.00 507.03 L1436.50 504.87 L1437.00 502.82 L1437.50 500.89 L1438.00 499.08 L1438.50 497.40 L1439.00 495.85 L1439.50 494.43 L1440.00 493.14 L1440.50 492.00 L1441.00 490.99 L1441.50 490.12 L1442.00 489.41 L1442.50 488.86 L1443.00 488.50 L1443.50 488.36 L1444.00 488.48 L1444.50 488.90 L1445.00 489.64 L1445.50 490.70 L1446.00 492.07 L1446.50 493.70 L1447.00 495.56 L1447.50 497.63 L1448.00 499.87 L1448.50 502.26 L1449.00 504.79 L1449.50 507.44 L1450.00 510.20 L1450.50 513.07 L1451.00 516.03 L1451.50 519.08 L1452.00 522.20 L1452.50 525.38 L1453.00 528.63 L1453.50 531.93 L1454.00 535.27 L1454.50 538.65 L1455.00 542.06 L1455.50 545.49 L1456.00 548.94 L1456.50 552.40 L1457.00 555.87 L1457.50 559.33 L1458.00 562.78 L1458.50 566.22 L1459.00 569.64 L1459.50 573.03 L1460.00 576.39 L1460.50 579.72 L1461.00 583.00 L1461.50 586.23 L1462.00 589.40 L1462.50 592.52 L1463.00 595.57 L1463.50 598.55 L1464.00 601.46 L1464.50 604.30 L1465.00 607.04 L1465.50 609.70 L1466.00 612.27 L1466.50 614.75 L1467.00 617.12 L1467.50 619.40 L1468.00 621.56 L1468.50 623.62 L1469.00 625.56 L1469.50 627.39 L1470.00 629.10 L1470.50 630.68 L1471.00 632.15 L1471.50 633.48 L1472.00 634.69 L1472.50 635.77 L1473.00 636.72 L1473.50 637.54 L1474.00 638.23 L1474.50 638.79 L1475.00 639.23 L1475.50 639.57 L1476.00 639.84 L1476.50 640.04 L1477.00 640.22 L1477.50 640.37 L1478.00 640.52 L1478.50 640.66 L1479.00 640.81 L1479.50 640.96 L1480.00 641.10 L1480.50 641.25 L1481.00 641.40 L1481.50 641.54 L1482.00 641.69 L1482.50 641.84 L1483.00 641.99 L1483.50 642.13 L1484.00 642.28 L1484.50 642.43 L1485.00 642.57 L1485.50 642.72 L1486.00 642.87 L1486.50 643.01 L1487.00 643.16 L1487.50 643.31 L1488.00 643.46 L1488.50 643.60 L1489.00 643.75 L1489.50 643.90 L1490.00 644.04 L1490.50 644.19 L1491.00 644.33 L1491.50 644.46 L1492.00 644.55 L1492.50 644.59 L1493.00 644.54 L1493.50 644.37 L1494.00 644.04 L1494.50 643.53 L1495.00 642.83 L1495.50 641.94 L1496.00 640.87 L1496.50 639.63 L1497.00 638.22 L1497.50 636.66 L1498.00 634.95 L1498.50 633.10 L1499.00 631.12 L1499.50 629.00 L1500.00 626.77 L1500.50 624.42 L1501.00 621.96 L1501.50 619.39 L1502.00 616.73 L1502.50 613.97 L1503.00 611.13 L1503.50 608.22 L1504.00 605.22 L1504.50 602.16 L1505.00 599.04 L1505.50 595.87 L1506.00 592.64 L1506.50 589.38 L1507.00 586.08 L1507.50 582.75 L1508.00 579.40 L1508.50 576.03 L1509.00 572.65 L1509.50 569.27 L1510.00 565.89 L1510.50 562.52 L1511.00 559.16 L1511.50 555.83 L1512.00 552.52 L1512.50 549.25 L1513.00 546.02 L1513.50 542.83 L1514.00 539.69 L1514.50 536.61 L1515.00 533.60 L1515.50 530.65 L1516.00 527.77 L1516.50 524.97 L1517.00 522.26 L1517.50 519.63 L1518.00 517.10 L1518.50 514.66 L1519.00 512.33 L1519.50 510.10 L1520.00 507.98 L1520.50 505.98 L1521.00 504.09 L1521.50 502.32 L1522.00 500.68 L1522.50 499.16 L1523.00 497.78 L1523.50 496.52 L1524.00 495.40 L1524.50 494.41 L1525.00 493.56 L1525.50 492.86 L1526.00 492.33 L1526.50 491.97 L1527.00 491.84 L1527.50 491.96 L1528.00 492.37 L1528.50 493.09 L1529.00 494.13 L1529.50 495.46 L1530.00 497.06 L1530.50 498.88 L1531.00 500.89 L1531.50 503.08 L1532.00 505.42 L1532.50 507.89 L1533.00 510.48 L1533.50 513.18 L1534.00 515.99 L1534.50 518.88 L1535.00 521.85 L1535.50 524.90 L1536.00 528.01 L1536.50 531.18 L1537.00 534.41 L1537.50 537.67 L1538.00 540.97 L1538.50 544.31 L1539.00 547.66 L1539.50 551.03 L1540.00 554.41 L1540.50 557.80 L1541.00 561.18 L1541.50 564.56 L1542.00 567.92 L1542.50 571.26 L1543.00 574.57 L1543.50 577.85 L1544.00 581.10 L1544.50 584.30 L1545.00 587.46 L1545.50 590.56 L1546.00 593.61 L1546.50 596.59 L1547.00 599.51 L1547.50 602.35 L1548.00 605.11 L1548.50 607.80 L1549.00 610.40 L1549.50 612.91 L1550.00 615.33 L1550.50 617.65 L1551.00 619.87 L1551.50 621.98 L1552.00 623.99 L1552.50 625.89 L1553.00 627.68 L1553.50 629.35 L1554.00 630.90 L1554.50 632.33 L1555.00 633.63 L1555.50 634.82 L1556.00 635.87 L1556.50 636.80 L1557.00 637.60 L1557.50 638.27 L1558.00 638.81 L1558.50 639.25 L1559.00 639.58 L1559.50 639.84 L1560.00 640.05 L1560.50 640.22 L1561.00 640.37 L1561.50 640.52 L1562.00 640.66 L1562.50 640.81 L1563.00 640.96 L1563.50 641.10 L1564.00 641.25 L1564.50 641.40 L1565.00 641.54 L1565.50 641.69 L1566.00 641.84 L1566.50 641.99 L1567.00 642.13 L1567.50 642.28 L1568.00 642.43 L1568.50 642.57 L1569.00 642.72 L1569.50 642.87 L1570.00 643.01 L1570.50 643.16 L1571.00 643.31 L1571.50 643.46 L1572.00 643.60 L1572.50 643.75 L1573.00 643.90 L1573.50 644.04 L1574.00 644.19 L1574.50 644.33 L1575.00 644.46 L1575.50 644.55 L1576.00 644.60 L1576.50 644.55 L1577.00 644.38 L1577.50 644.06 L1578.00 643.57 L1578.50 642.88 L1579.00 642.02 L1579.50 640.98 L1580.00 639.77 L1580.50 638.40 L1581.00 636.88 L1581.50 635.21 L1582.00 633.41 L1582.50 631.48 L1583.00 629.42 L1583.50 627.24 L1584.00 624.95 L1584.50 622.55 L1585.00 620.06 L1585.50 617.46 L1586.00 614.78 L1586.50 612.01 L1587.00 609.17 L1587.50 606.26 L1588.00 603.28 L1588.50 600.24 L1589.00 597.14 L1589.50 594.00 L1590.00 590.82 L1590.50 587.61 L1591.00 584.37 L1591.50 581.10 L1592.00 577.82 L1592.50 574.53 L1593.00 571.23 L1593.50 567.94 L1594.00 564.66 L1594.50 561.39 L1595.00 558.14 L1595.50 554.92 L1596.00 551.74 L1596.50 548.59 L1597.00 545.48 L1597.50 542.43 L1598.00 539.43 L1598.50 536.49 L1599.00 533.62 L1599.50 530.82 L1600.00 528.09 L1600.50 525.45 L1601.00 522.89 L1601.50 520.42 L1602.00 518.05 L1602.50 515.77 L1603.00 513.60 L1603.50 511.54 L1604.00 509.59 L1604.50 507.75 L1605.00 506.03 L1605.50 504.43 L1606.00 502.95 L1606.50 501.60 L1607.00 500.38 L1607.50 499.28 L1608.00 498.32 L1608.50 497.50 L1609.00 496.82 L1609.50 496.29 L1610.00 495.95 L1610.50 495.81 L1611.00 495.93 L1611.50 496.33 L1612.00 497.04 L1612.50 498.05 L1613.00 499.34 L1613.50 500.89 L1614.00 502.66 L1614.50 504.63 L1615.00 506.76 L1615.50 509.03 L1616.00 511.44 L1616.50 513.96 L1617.00 516.59 L1617.50 519.31 L1618.00 522.13 L1618.50 525.02 L1619.00 527.99 L1619.50 531.02 L1620.00 534.11 L1620.50 537.24 L1621.00 540.42 L1621.50 543.63 L1622.00 546.87 L1622.50 550.14 L1623.00 553.42 L1623.50 556.71 L1624.00 560.00 L1624.50 563.30 L1625.00 566.58 L1625.50 569.85 L1626.00 573.10 L1626.50 576.33 L1627.00 579.52 L1627.50 582.68 L1628.00 585.80 L1628.50 588.87 L1629.00 591.89 L1629.50 594.85 L1630.00 597.76 L1630.50 600.59 L1631.00 603.36 L1631.50 606.05 L1632.00 608.66 L1632.50 611.19 L1633.00 613.64 L1633.50 615.99 L1634.00 618.25 L1634.50 620.41 L1635.00 622.47 L1635.50 624.42 L1636.00 626.27 L1636.50 628.01 L1637.00 629.63 L1637.50 631.14 L1638.00 632.53 L1638.50 633.81 L1639.00 634.96 L1639.50 635.98 L1640.00 636.88 L1640.50 637.66 L1641.00 638.31 L1641.50 638.85 L1642.00 639.27 L1642.50 639.60 L1643.00 639.85 L1643.50 640.05 L1644.00 640.22 L1644.50 640.37 L1645.00 640.52 L1645.50 640.66 L1646.00 640.81 L1646.50 640.96 L1647.00 641.10 L1647.50 641.25 L1648.00 641.40 L1648.50 641.54 L1649.00 641.69 L1649.50 641.84 L1650.00 641.99 L1650.50 642.13 L1651.00 642.28 L1651.50 642.43 L1652.00 642.57 L1652.50 642.72 L1653.00 642.87 L1653.50 643.01 L1654.00 643.16 L1654.50 643.31 L1655.00 643.46 L1655.50 643.60 L1656.00 643.75 L1656.50 643.90 L1657.00 644.04 L1657.50 644.19 L1658.00 644.33 L1658.50 644.46 L1659.00 644.55 L1659.50 644.60 L1660.00 644.55 L1660.50 644.38 L1661.00 644.06 L1661.50 643.57 L1662.00 642.88 L1662.50 642.02 L1663.00 640.98 L1663.50 639.77 L1664.00 638.40 L1664.50 636.88 L1665.00 635.21 L1665.50 633.41 L1666.00 631.48 L1666.50 629.42 L1667.00 627.24 L1667.50 624.95 L1668.00 622.55 L1668.50 620.06 L1669.00 617.46 L1669.50 614.78 L1670.00 612.01 L1670.50 609.17 L1671.00 606.26 L1671.50 603.28 L1672.00 600.24 L1672.50 597.14 L1673.00 594.00 L1673.50 590.82 L1674.00 587.61 L1674.50 584.37 L1675.00 581.10 L1675.50 577.82 L1676.00 574.53 L1676.50 571.23 L1677.00 567.94 L1677.50 564.66 L1678.00 561.39 L1678.50 558.14 L1679.00 554.92 L1679.50 551.74 L1680.00 548.59 L1680.50 545.48 L1681.00 542.43 L1681.50 539.43 L1682.00 536.49 L1682.50 533.62 L1683.00 530.82 L1683.50 528.09 L1684.00 525.45 L1684.50 522.89 L1685.00 520.42 L1685.50 518.05 L1686.00 515.77 L1686.50 513.60 L1687.00 511.54 L1687.50 509.59 L1688.00 507.75 L1688.50 506.03 L1689.00 504.43 L1689.50 502.95 L1690.00 501.60 L1690.50 500.38 L1691.00 499.28 L1691.50 498.32 L1692.00 497.50 L1692.50 496.82 L1693.00 496.29 L1693.50 495.95 L1694.00 495.81 L1694.50 495.93 L1695.00 496.33 L1695.50 497.04 L1696.00 498.05 L1696.50 499.34 L1697.00 500.89 L1697.50 502.66 L1698.00 504.63 L1698.50 506.76 L1699.00 509.03 L1699.50 511.44 L1700.00 513.96 L1700.50 516.59 L1701.00 519.31 L1701.50 522.13 L1702.00 525.02 L1702.50 527.99 L1703.00 531.02 L1703.50 534.11 L1704.00 537.24 L1704.50 540.42 L1705.00 543.63 L1705.50 546.87 L1706.00 550.14 L1706.50 553.42 L1707.00 556.71 L1707.50 560.00 L1708.00 563.30 L1708.50 566.58 L1709.00 569.85 L1709.50 573.10 L1710.00 576.33 L1710.50 579.52 L1711.00 582.68 L1711.50 585.80 L1712.00 588.87 L1712.50 591.89 L1713.00 594.85 L1713.50 597.76 L1714.00 600.59 L1714.50 603.36 L1715.00 606.05 L1715.50 608.66 L1716.00 611.19 L1716.50 613.64 L1717.00 615.99 L1717.50 618.25 L1718.00 620.41 L1718.50 622.47 L1719.00 624.42 L1719.50 626.27 L1720.00 628.01 L1720.50 629.63 L1721.00 631.14 L1721.50 632.53 L1722.00 633.81 L1722.50 634.96 L1723.00 635.98 L1723.50 636.88 L1724.00 637.66 L1724.50 638.31 L1725.00 638.85 L1725.50 639.27 L1726.00 639.60 L1726.50 639.85 L1727.00 640.05 L1727.50 640.22 L1728.00 640.37 L1728.50 640.52 L1729.00 640.66 L1729.50 640.81 L1730.00 640.96 L1730.50 641.10 L1731.00 641.25 L1731.50 641.40 L1732.00 641.54 L1732.50 641.69 L1733.00 641.84 L1733.50 641.99 L1734.00 642.13 L1734.50 642.28 L1735.00 642.43 L1735.50 642.57 L1736.00 642.72 L1736.50 642.87 L1737.00 643.01 L1737.50 643.16 L1738.00 643.31 L1738.50 643.46 L1739.00 643.60 L1739.50 643.75 L1740.00 643.90 L1740.50 644.04 L1741.00 644.19 L1741.50 644.33 L1742.00 644.46 L1742.50 644.55 L1743.00 644.59 L1743.50 644.54 L1744.00 644.37 L1744.50 644.04 L1745.00 643.52 L1745.50 642.82 L1746.00 641.93 L1746.50 640.86 L1747.00 639.61 L1747.50 638.20 L1748.00 636.63 L1748.50 634.92 L1749.00 633.06 L1749.50 631.07 L1750.00 628.95 L1750.50 626.71 L1751.00 624.35 L1751.50 621.88 L1752.00 619.31 L1752.50 616.64 L1753.00 613.87 L1753.50 611.02 L1754.00 608.10 L1754.50 605.09 L1755.00 602.02 L1755.50 598.89 L1756.00 595.71 L1756.50 592.47 L1757.00 589.20 L1757.50 585.89 L1758.00 582.55 L1758.50 579.18 L1759.00 575.80 L1759.50 572.41 L1760.00 569.02 L1760.50 565.63 L1761.00 562.25 L1761.50 558.88 L1762.00 555.54 L1762.50 552.22 L1763.00 548.94 L1763.50 545.69 L1764.00 542.50 L1764.50 539.35 L1765.00 536.26 L1765.50 533.23 L1766.00 530.27 L1766.50 527.39 L1767.00 524.58 L1767.50 521.86 L1768.00 519.22 L1768.50 516.68 L1769.00 514.24 L1769.50 511.90 L1770.00 509.66 L1770.50 507.54 L1771.00 505.53 L1771.50 503.63 L1772.00 501.86 L1772.50 500.21 L1773.00 498.69 L1773.50 497.30 L1774.00 496.04 L1774.50 494.91 L1775.00 493.92 L1775.50 493.07 L1776.00 492.37 L1776.50 491.83 L1777.00 491.48 L1777.50 491.34 L1778.00 491.46 L1778.50 491.87 L1779.00 492.60 L1779.50 493.64 L1780.00 494.98 L1780.50 496.58 L1781.00 498.40 L1781.50 500.43 L1782.00 502.62 L1782.50 504.97 L1783.00 507.45 L1783.50 510.05 L1784.00 512.76 L1784.50 515.57 L1785.00 518.47 L1785.50 521.46 L1786.00 524.51 L1786.50 527.64 L1787.00 530.82 L1787.50 534.05 L1788.00 537.33 L1788.50 540.64 L1789.00 543.98 L1789.50 547.35 L1790.00 550.73 L1790.50 554.13 L1791.00 557.52 L1791.50 560.92 L1792.00 564.30 L1792.50 567.67 L1793.00 571.03 L1793.50 574.35 L1794.00 577.65 L1794.50 580.90 L1795.00 584.12 L1795.50 587.28 L1796.00 590.40 L1796.50 593.45 L1797.00 596.44 L1797.50 599.37 L1798.00 602.22 L1798.50 605.00 L1799.00 607.69 L1799.50 610.30 L1800.00 612.82 L1800.50 615.25 L1801.00 617.57 L1801.50 619.80 L1802.00 621.92 L1802.50 623.94 L1803.00 625.84 L1803.50 627.64 L1804.00 629.31 L1804.50 630.87 L1805.00 632.30 L1805.50 633.61 L1806.00 634.80 L1806.50 635.86 L1807.00 636.79 L1807.50 637.59 L1808.00 638.26 L1808.50 638.81 L1809.00 639.25 L1809.50 639.58 L1810.00 639.84 L1810.50 640.05 L1811.00 640.22 L1811.50 640.37 L1812.00 640.52 L1812.50 640.66 L1813.00 640.81 L1813.50 640.96 L1814.00 641.10 L1814.50 641.25 L1815.00 641.40 L1815.50 641.54 L1816.00 641.69 L1816.50 641.84 L1817.00 641.99 L1817.50 642.13 L1818.00 642.28 L1818.50 642.43 L1819.00 642.57 L1819.50 642.72 L1820.00 642.87 L1820.50 643.01 L1821.00 643.16 L1821.50 643.31 L1822.00 643.46 L1822.50 643.60 L1823.00 643.75 L1823.50 643.90 L1824.00 644.04 L1824.50 644.19 L1825.00 644.33 L1825.50 644.46 L1826.00 644.55 L1826.50 644.59 L1827.00 644.54 L1827.50 644.37 L1828.00 644.04 L1828.50 643.53 L1829.00 642.83 L1829.50 641.94 L1830.00 640.87 L1830.50 639.63 L1831.00 638.22 L1831.50 636.66 L1832.00 634.95 L1832.50 633.10 L1833.00 631.12 L1833.50 629.00 L1834.00 626.77 L1834.50 624.42 L1835.00 621.96 L1835.50 619.39 L1836.00 616.73 L1836.50 613.97 L1837.00 611.13 L1837.50 608.22 L1838.00 605.22 L1838.50 602.16 L1839.00 599.04 L1839.50 595.87 L1840.00 592.64 L1840.50 589.38 L1841.00 586.08 L1841.50 582.75 L1842.00 579.40 L1842.50 576.03 L1843.00 572.65 L1843.50 569.27 L1844.00 565.89 L1844.50 562.52 L1845.00 559.16 L1845.50 555.83 L1846.00 552.52 L1846.50 549.25 L1847.00 546.02 L1847.50 542.83 L1848.00 539.69 L1848.50 536.61 L1849.00 533.60 L1849.50 530.65 L1850.00 527.77 L1850.50 524.97 L1851.00 522.26 L1851.50 519.63 L1852.00 517.10 L1852.50 514.66 L1853.00 512.33 L1853.50 510.10 L1854.00 507.98 L1854.50 505.98 L1855.00 504.09 L1855.50 502.32 L1856.00 500.68 L1856.50 499.16 L1857.00 497.78 L1857.50 496.52 L1858.00 495.40 L1858.50 494.41 L1859.00 493.56 L1859.50 492.86 L1860.00 492.33 L1860.50 491.97 L1861.00 491.84 L1861.50 491.96 L1862.00 492.37 L1862.50 493.09 L1863.00 494.13 L1863.50 495.46 L1864.00 497.06 L1864.50 498.88 L1865.00 500.89 L1865.50 503.08 L1866.00 505.42 L1866.50 507.89 L1867.00 510.48 L1867.50 513.18 L1868.00 515.99 L1868.50 518.88 L1869.00 521.85 L1869.50 524.90 L1870.00 528.01 L1870.50 531.18 L1871.00 534.41 L1871.50 537.67 L1872.00 540.97 L1872.50 544.31 L1873.00 547.66 L1873.50 551.03 L1874.00 554.41 L1874.50 557.80 L1875.00 561.18 L1875.50 564.56 L1876.00 567.92 L1876.50 571.26 L1877.00 574.57 L1877.50 577.85 L1878.00 581.10 L1878.50 584.30 L1879.00 587.46 L1879.50 590.56 L1880.00 593.61 L1880.50 596.59 L1881.00 599.51 L1881.50 602.35 L1882.00 605.11 L1882.50 607.80 L1883.00 610.40 L1883.50 612.91 L1884.00 615.33 L1884.50 617.65 L1885.00 619.87 L1885.50 621.98 L1886.00 623.99 L1886.50 625.89 L1887.00 627.68 L1887.50 629.35 L1888.00 630.90 L1888.50 632.33 L1889.00 633.63 L1889.50 634.82 L1890.00 635.87 L1890.50 636.80 L1891.00 637.60 L1891.50 638.27 L1892.00 638.81 L1892.50 639.25 L1893.00 639.58 L1893.50 639.84 L1894.00 640.05 L1894.50 640.22 L1895.00 640.37 L1895.50 640.52 L1896.00 640.66 L1896.50 640.81 L1897.00 640.96 L1897.50 641.10 L1898.00 641.25 L1898.50 641.40 L1899.00 641.54 L1899.50 641.69 L1900.00 641.84 L1900.50 641.99 L1901.00 642.13 L1901.50 642.28 L1902.00 642.43 L1902.50 642.57 L1903.00 642.72 L1903.50 642.87 L1904.00 643.01 L1904.50 643.16 L1905.00 643.31 L1905.50 643.46 L1906.00 643.60 L1906.50 643.75 L1907.00 643.90 L1907.50 644.04 L1908.00 644.19 L1908.50 644.33 L1909.00 644.46 L1909.50 644.55 L1910.00 644.60 L1910.50 644.55 L1911.00 644.38 L1911.50 644.06 L1912.00 643.57 L1912.50 642.88 L1913.00 642.02 L1913.50 640.98 L1914.00 639.77 L1914.50 638.40 L1915.00 636.88 L1915.50 635.21 L1916.00 633.41 L1916.50 631.48 L1917.00 629.42 L1917.50 627.24 L1918.00 624.95 L1918.50 622.55 L1919.00 620.06 L1919.50 617.46 L1920.00 614.78 L1920.50 612.01 L1921.00 609.17 L1921.50 606.26 L1922.00 603.28 L1922.50 600.24 L1923.00 597.14 L1923.50 594.00 L1924.00 590.82 L1924.50 587.61 L1925.00 584.37 L1925.50 581.10 L1926.00 577.82 L1926.50 574.53 L1927.00 571.23 L1927.50 567.94 L1928.00 564.66 L1928.50 561.39 L1929.00 558.14 L1929.50 554.92 L1930.00 551.74 L1930.50 548.59 L1931.00 545.48 L1931.50 542.43 L1932.00 539.43 L1932.50 536.49 L1933.00 533.62 L1933.50 530.82 L1934.00 528.09 L1934.50 525.45 L1935.00 522.89 L1935.50 520.42 L1936.00 518.05 L1936.50 515.77 L1937.00 513.60 L1937.50 511.54 L1938.00 509.59 L1938.50 507.75 L1939.00 506.03 L1939.50 504.43 L1940.00 502.95 L1940.50 501.60 L1941.00 500.38 L1941.50 499.28 L1942.00 498.32 L1942.50 497.50 L1943.00 496.82 L1943.50 496.29 L1944.00 495.95 L1944.50 495.81 L1945.00 495.93 L1945.50 496.33 L1946.00 497.04 L1946.50 498.05 L1947.00 499.34 L1947.50 500.89 L1948.00 502.66 L1948.50 504.63 L1949.00 506.76 L1949.50 509.03 L1950.00 511.44 L1950.50 513.96 L1951.00 516.59 L1951.50 519.31 L1952.00 522.13 L1952.50 525.02 L1953.00 527.99 L1953.50 531.02 L1954.00 534.11 L1954.50 537.24 L1955.00 540.42 L1955.50 543.63 L1956.00 546.87 L1956.50 550.14 L1957.00 553.42 L1957.50 556.71 L1958.00 560.00 L1958.50 563.30 L1959.00 566.58 L1959.50 569.85 L1960.00 573.10 L1960.50 576.33 L1961.00 579.52 L1961.50 582.68 L1962.00 585.80 L1962.50 588.87 L1963.00 591.89 L1963.50 594.85 L1964.00 597.76 L1964.50 600.59 L1965.00 603.36 L1965.50 606.05 L1966.00 608.66 L1966.50 611.19 L1967.00 613.64 L1967.50 615.99 L1968.00 618.25 L1968.50 620.41 L1969.00 622.47 L1969.50 624.42 L1970.00 626.27 L1970.50 628.01 L1971.00 629.63 L1971.50 631.14 L1972.00 632.53 L1972.50 633.81 L1973.00 634.96 L1973.50 635.98 L1974.00 636.88 L1974.50 637.66 L1975.00 638.31 L1975.50 638.85 L1976.00 639.27 L1976.50 639.60 L1977.00 639.85 L1977.50 640.05 L1978.00 640.22 L1978.50 640.37 L1979.00 640.52 L1979.50 640.66 L1980.00 640.81 L1980.50 640.96 L1981.00 641.10 L1981.50 641.25 L1982.00 641.40 L1982.50 641.54 L1983.00 641.69 L1983.50 641.84 L1984.00 641.99 L1984.50 642.13 L1985.00 642.28 L1985.50 642.43 L1986.00 642.57 L1986.50 642.72 L1987.00 642.87 L1987.50 643.01 L1988.00 643.16 L1988.50 643.31 L1989.00 643.46 L1989.50 643.60 L1990.00 643.75 L1990.50 643.90 L1991.00 644.04 L1991.50 644.19 L1992.00 644.33 L1992.50 644.46 L1993.00 644.55 L1993.50 644.59 L1994.00 644.55 L1994.50 644.37 L1995.00 644.05 L1995.50 643.54 L1996.00 642.85 L1996.50 641.97 L1997.00 640.91 L1997.50 639.68 L1998.00 638.29 L1998.50 636.74 L1999.00 635.05 L1999.50 633.22 L2000.00 631.25 L2000.50 629.16 L2001.00 626.95 L2001.50 624.62 L2002.00 622.18 L2002.50 619.64 L2003.00 617.00 L2003.50 614.28 L2004.00 611.46 L2004.50 608.57 L2005.00 605.61 L2005.50 602.58 L2006.00 599.49 L2006.50 596.35 L2007.00 593.15 L2007.50 589.92 L2008.00 586.65 L2008.50 583.36 L2009.00 580.04 L2009.50 576.70 L2010.00 573.35 L2010.50 570.00 L2011.00 566.66 L2011.50 563.32 L2012.00 560.00 L2012.50 556.70 L2013.00 553.42 L2013.50 550.18 L2014.00 546.98 L2014.50 543.82 L2015.00 540.72 L2015.50 537.67 L2016.00 534.68 L2016.50 531.76 L2017.00 528.91 L2017.50 526.14 L2018.00 523.45 L2018.50 520.85 L2019.00 518.34 L2019.50 515.93 L2020.00 513.62 L2020.50 511.41 L2021.00 509.32 L2021.50 507.33 L2022.00 505.46 L2022.50 503.71 L2023.00 502.09 L2023.50 500.58 L2024.00 499.21 L2024.50 497.97 L2025.00 496.85 L2025.50 495.88 L2026.00 495.04 L2026.50 494.35 L2027.00 493.81 L2027.50 493.46 L2028.00 493.33 L2028.50 493.45 L2029.00 493.86 L2029.50 494.57 L2030.00 495.60 L2030.50 496.92 L2031.00 498.49 L2031.50 500.30 L2032.00 502.29 L2032.50 504.46 L2033.00 506.77 L2033.50 509.22 L2034.00 511.79 L2034.50 514.46 L2035.00 517.23 L2035.50 520.10 L2036.00 523.04 L2036.50 526.06 L2037.00 529.14 L2037.50 532.28 L2038.00 535.47 L2038.50 538.70 L2039.00 541.97 L2039.50 545.27 L2040.00 548.59 L2040.50 551.93 L2041.00 555.27 L2041.50 558.63 L2042.00 561.97 L2042.50 565.32 L2043.00 568.64 L2043.50 571.95 L2044.00 575.23 L2044.50 578.48 L2045.00 581.69 L2045.50 584.86 L2046.00 587.99 L2046.50 591.06 L2047.00 594.08 L2047.50 597.03 L2048.00 599.91 L2048.50 602.73 L2049.00 605.47 L2049.50 608.12 L2050.00 610.70 L2050.50 613.18 L2051.00 615.58 L2051.50 617.87 L2052.00 620.07 L2052.50 622.17 L2053.00 624.15 L2053.50 626.03 L2054.00 627.80 L2054.50 629.45 L2055.00 630.99 L2055.50 632.40 L2056.00 633.70 L2056.50 634.87 L2057.00 635.91 L2057.50 636.83 L2058.00 637.62 L2058.50 638.28 L2059.00 638.83 L2059.50 639.26 L2060.00 639.59 L2060.50 639.85 L2061.00 640.05 L2061.50 640.22 L2062.00 640.37 L2062.50 640.52 L2063.00 640.66 L2063.50 640.81 L2064.00 640.96 L2064.50 641.10 L2065.00 641.25 L2065.50 641.40 L2066.00 641.54 L2066.50 641.69 L2067.00 641.84 L2067.50 641.99 L2068.00 642.13 L2068.50 642.28 L2069.00 642.43 L2069.50 642.57 L2070.00 642.72 L2070.50 642.87 L2071.00 643.01 L2071.50 643.16 L2072.00 643.31 L2072.50 643.46 L2073.00 643.60 L2073.50 643.75 L2074.00 643.90 L2074.50 644.04 L2075.00 644.19 L2075.50 644.33 L2076.00 644.46 L2076.50 644.55 L2077.00 644.59 L2077.50 644.55 L2078.00 644.37 L2078.50 644.05 L2079.00 643.54 L2079.50 642.85 L2080.00 641.97 L2080.50 640.91 L2081.00 639.68 L2081.50 638.29 L2082.00 636.74 L2082.50 635.05 L2083.00 633.22 L2083.50 631.25 L2084.00 629.16 L2084.50 626.95 L2085.00 624.62 L2085.50 622.18 L2086.00 619.64 L2086.50 617.00 L2087.00 614.28 L2087.50 611.46 L2088.00 608.57 L2088.50 605.61 L2089.00 602.58 L2089.50 599.49 L2090.00 596.35 L2090.50 593.15 L2091.00 589.92 L2091.50 586.65 L2092.00 583.36 L2092.50 580.04 L2093.00 576.70 L2093.50 573.35 L2094.00 570.00 L2094.50 566.66 L2095.00 563.32 L2095.50 560.00 L2096.00 556.70 L2096.50 553.42 L2097.00 550.18 L2097.50 546.98 L2098.00 543.82 L2098.50 540.72 L2099.00 537.67 L2099.50 534.68 L2100.00 531.76 L2100.50 528.91 L2101.00 526.14 L2101.50 523.45 L2102.00 520.85 L2102.50 518.34 L2103.00 515.93 L2103.50 513.62 L2104.00 511.41 L2104.50 509.32 L2105.00 507.33 L2105.50 505.46 L2106.00 503.71 L2106.50 502.09 L2107.00 500.58 L2107.50 499.21 L2108.00 497.97 L2108.50 496.85 L2109.00 495.88 L2109.50 495.04 L2110.00 494.35 L2110.50 493.81 L2111.00 493.46 L2111.50 493.33 L2112.00 493.45 L2112.50 493.86 L2113.00 494.57 L2113.50 495.60 L2114.00 496.92 L2114.50 498.49 L2115.00 500.30 L2115.50 502.29 L2116.00 504.46 L2116.50 506.77 L2117.00 509.22 L2117.50 511.79 L2118.00 514.46 L2118.50 517.23 L2119.00 520.10 L2119.50 523.04 L2120.00 526.06 L2120.50 529.14 L2121.00 532.28 L2121.50 535.47 L2122.00 538.70 L2122.50 541.97 L2123.00 545.27 L2123.50 548.59 L2124.00 551.93 L2124.50 555.27 L2125.00 558.63 L2125.50 561.97 L2126.00 565.32 L2126.50 568.64 L2127.00 571.95 L2127.50 575.23 L2128.00 578.48 L2128.50 581.69 L2129.00 584.86 L2129.50 587.99 L2130.00 591.06 L2130.50 594.08 L2131.00 597.03 L2131.50 599.91 L2132.00 602.73 L2132.50 605.47 L2133.00 608.12 L2133.50 610.70 L2134.00 613.18 L2134.50 615.58 L2135.00 617.87 L2135.50 620.07 L2136.00 622.17 L2136.50 624.15 L2137.00 626.03 L2137.50 627.80 L2138.00 629.45 L2138.50 630.99 L2139.00 632.40 L2139.50 633.70 L2140.00 634.87 L2140.50 635.91 L2141.00 636.83 L2141.50 637.62 L2142.00 638.28 L2142.50 638.83 L2143.00 639.26 L2143.50 639.59 L2144.00 639.85 L2144.50 640.05 L2145.00 640.22 L2145.50 640.37 L2146.00 640.52 L2146.50 640.66 L2147.00 640.81 L2147.50 640.96 L2148.00 641.10 L2148.50 641.25 L2149.00 641.40 L2149.50 641.54 L2150.00 641.69 L2150.50 641.84 L2151.00 641.99 L2151.50 642.13 L2152.00 642.28 L2152.50 642.43 L2153.00 642.57 L2153.50 642.72 L2154.00 642.87 L2154.50 643.01 L2155.00 643.16 L2155.50 643.31 L2156.00 643.46 L2156.50 643.60 L2157.00 643.75 L2157.50 643.90 L2158.00 644.04 L2158.50 644.19 L2159.00 644.33 L2159.50 644.46 L2160.00 644.55 L2160.50 644.60 L2161.00 644.55 L2161.50 644.38 L2162.00 644.06 L2162.50 643.57 L2163.00 642.88 L2163.50 642.02 L2164.00 640.98 L2164.50 639.77 L2165.00 638.40 L2165.50 636.88 L2166.00 635.21 L2166.50 633.41 L2167.00 631.48 L2167.50 629.42 L2168.00 627.24 L2168.50 624.95 L2169.00 622.55 L2169.50 620.06 L2170.00 617.46 L2170.50 614.78 L2171.00 612.01 L2171.50 609.17 L2172.00 606.26 L2172.50 603.28 L2173.00 600.24 L2173.50 597.14 L2174.00 594.00 L2174.50 590.82 L2175.00 587.61 L2175.50 584.37 L2176.00 581.10 L2176.50 577.82 L2177.00 574.53 L2177.50 571.23 L2178.00 567.94 L2178.50 564.66 L2179.00 561.39 L2179.50 558.14 L2180.00 554.92 L2180.50 551.74 L2181.00 548.59 L2181.50 545.48 L2182.00 542.43 L2182.50 539.43 L2183.00 536.49 L2183.50 533.62 L2184.00 530.82 L2184.50 528.09 L2185.00 525.45 L2185.50 522.89 L2186.00 520.42 L2186.50 518.05 L2187.00 515.77 L2187.50 513.60 L2188.00 511.54 L2188.50 509.59 L2189.00 507.75 L2189.50 506.03 L2190.00 504.43 L2190.50 502.95 L2191.00 501.60 L2191.50 500.38 L2192.00 499.28 L2192.50 498.32 L2193.00 497.50 L2193.50 496.82 L2194.00 496.29 L2194.50 495.95 L2195.00 495.81 L2195.50 495.93 L2196.00 496.33 L2196.50 497.04 L2197.00 498.05 L2197.50 499.34 L2198.00 500.89 L2198.50 502.66 L2199.00 504.63 L2199.50 506.76 L2200.00 509.03 L2200.50 511.44 L2201.00 513.96 L2201.50 516.59 L2202.00 519.31 L2202.50 522.13 L2203.00 525.02 L2203.50 527.99 L2204.00 531.02 L2204.50 534.11 L2205.00 537.24 L2205.50 540.42 L2206.00 543.63 L2206.50 546.87 L2207.00 550.14 L2207.50 553.42 L2208.00 556.71 L2208.50 560.00 L2209.00 563.30 L2209.50 566.58 L2210.00 569.85 L2210.50 573.10 L2211.00 576.33 L2211.50 579.52 L2212.00 582.68 L2212.50 585.80 L2213.00 588.87 L2213.50 591.89 L2214.00 594.85 L2214.50 597.76 L2215.00 600.59 L2215.50 603.36 L2216.00 606.05 L2216.50 608.66 L2217.00 611.19 L2217.50 613.64 L2218.00 615.99 L2218.50 618.25 L2219.00 620.41 L2219.50 622.47 L2220.00 624.42 L2220.50 626.27 L2221.00 628.01 L2221.50 629.63 L2222.00 631.14 L2222.50 632.53 L2223.00 633.81 L2223.50 634.96 L2224.00 635.98 L2224.50 636.88 L2225.00 637.66 L2225.50 638.31 L2226.00 638.85 L2226.50 639.27 L2227.00 639.60 L2227.50 639.85 L2228.00 640.05 L2228.50 640.22 L2229.00 640.37 L2229.50 640.52 L2230.00 640.66 L2230.50 640.81 L2231.00 640.96 L2231.50 641.10 L2232.00 641.25 L2232.50 641.40 L2233.00 641.54 L2233.50 641.69 L2234.00 641.84 L2234.50 641.99 L2235.00 642.13 L2235.50 642.28 L2236.00 642.43 L2236.50 642.57 L2237.00 642.72 L2237.50 642.87 L2238.00 643.01 L2238.50 643.16 L2239.00 643.31 L2239.50 643.46 L2240.00 643.60 L2240.50 643.75 L2241.00 643.90 L2241.50 644.04 L2242.00 644.19 L2242.50 644.33 L2243.00 644.46 L2243.50 644.55 L2244.00 644.60 L2244.50 644.55 L2245.00 644.38 L2245.50 644.06 L2246.00 643.57 L2246.50 642.88 L2247.00 642.02 L2247.50 640.98 L2248.00 639.77 L2248.50 638.40 L2249.00 636.88 L2249.50 635.21 L2250.00 633.41 L2250.50 631.48 L2251.00 629.42 L2251.50 627.24 L2252.00 624.95 L2252.50 622.55 L2253.00 620.06 L2253.50 617.46 L2254.00 614.78 L2254.50 612.01 L2255.00 609.17 L2255.50 606.26 L2256.00 603.28 L2256.50 600.24 L2257.00 597.14 L2257.50 594.00 L2258.00 590.82 L2258.50 587.61 L2259.00 584.37 L2259.50 581.10 L2260.00 577.82 L2260.50 574.53 L2261.00 571.23 L2261.50 567.94 L2262.00 564.66 L2262.50 561.39 L2263.00 558.14 L2263.50 554.92 L2264.00 551.74 L2264.50 548.59 L2265.00 545.48 L2265.50 542.43 L2266.00 539.43 L2266.50 536.49 L2267.00 533.62 L2267.50 530.82 L2268.00 528.09 L2268.50 525.45 L2269.00 522.89 L2269.50 520.42 L2270.00 518.05 L2270.50 515.77 L2271.00 513.60 L2271.50 511.54 L2272.00 509.59 L2272.50 507.75 L2273.00 506.03 L2273.50 504.43 L2274.00 502.95 L2274.50 501.60 L2275.00 500.38 L2275.50 499.28 L2276.00 498.32 L2276.50 497.50 L2277.00 496.82 L2277.50 496.29 L2278.00 495.95 L2278.50 495.81 L2279.00 495.93 L2279.50 496.33 L2280.00 497.04 L2280.50 498.05 L2281.00 499.34 L2281.50 500.89 L2282.00 502.66 L2282.50 504.63 L2283.00 506.76 L2283.50 509.03 L2284.00 511.44 L2284.50 513.96 L2285.00 516.59 L2285.50 519.31 L2286.00 522.13 L2286.50 525.02 L2287.00 527.99 L2287.50 531.02 L2288.00 534.11 L2288.50 537.24 L2289.00 540.42 L2289.50 543.63 L2290.00 546.87 L2290.50 550.14 L2291.00 553.42 L2291.50 556.71 L2292.00 560.00 L2292.50 563.30 L2293.00 566.58 L2293.50 569.85 L2294.00 573.10 L2294.50 576.33 L2295.00 579.52 L2295.50 582.68 L2296.00 585.80 L2296.50 588.87 L2297.00 591.89 L2297.50 594.85 L2298.00 597.76 L2298.50 600.59 L2299.00 603.36 L2299.50 606.05 L2300.00 608.66 L2300.50 611.19 L2301.00 613.64 L2301.50 615.99 L2302.00 618.25 L2302.50 620.41 L2303.00 622.47 L2303.50 624.42 L2304.00 626.27 L2304.50 628.01 L2305.00 629.63 L2305.50 631.14 L2306.00 632.53 L2306.50 633.81 L2307.00 634.96 L2307.50 635.98 L2308.00 636.88 L2308.50 637.66 L2309.00 638.31 L2309.50 638.85 L2310.00 639.27 L2310.50 639.60 L2311.00 639.85 L2311.50 640.05 L2312.00 640.22 L2312.50 640.37 L2313.00 640.52 L2313.50 640.66 L2314.00 640.81 L2314.50 640.96 L2315.00 641.10 L2315.50 641.25 L2316.00 641.40 L2316.50 641.54 L2317.00 641.69 L2317.50 641.84 L2318.00 641.99 L2318.50 642.13 L2319.00 642.28 L2319.50 642.43 L2320.00 642.57 L2320.50 642.72 L2321.00 642.87 L2321.50 643.01 L2322.00 643.16 L2322.50 643.31 L2323.00 643.46 L2323.50 643.60 L2324.00 643.75 L2324.50 643.90 L2325.00 644.04 L2325.50 644.19 L2326.00 644.33 L2326.50 644.46 L2327.00 644.55 L2327.50 644.59 L2328.00 644.55 L2328.50 644.37 L2329.00 644.05 L2329.50 643.54 L2330.00 642.85 L2330.50 641.97 L2331.00 640.91 L2331.50 639.68 L2332.00 638.29 L2332.50 636.74 L2333.00 635.05 L2333.50 633.22 L2334.00 631.25 L2334.50 629.16 L2335.00 626.95 L2335.50 624.62 L2336.00 622.18 L2336.50 619.64 L2337.00 617.00 L2337.50 614.28 L2338.00 611.46 L2338.50 608.57 L2339.00 605.61 L2339.50 602.58 L2340.00 599.49 L2340.50 596.35 L2341.00 593.15 L2341.50 589.92 L2342.00 586.65 L2342.50 583.36 L2343.00 580.04 L2343.50 576.70 L2344.00 573.35 L2344.50 570.00 L2345.00 566.66 L2345.50 563.32 L2346.00 560.00 L2346.50 556.70 L2347.00 553.42 L2347.50 550.18 L2348.00 546.98 L2348.50 543.82 L2349.00 540.72 L2349.50 537.67 L2350.00 534.68 L2350.50 531.76 L2351.00 528.91 L2351.50 526.14 L2352.00 523.45 L2352.50 520.85 L2353.00 518.34 L2353.50 515.93 L2354.00 513.62 L2354.50 511.41 L2355.00 509.32 L2355.50 507.33 L2356.00 505.46 L2356.50 503.71 L2357.00 502.09 L2357.50 500.58 L2358.00 499.21 L2358.50 497.97 L2359.00 496.85 L2359.50 495.88 L2360.00 495.04 L2360.50 494.35 L2361.00 493.81 L2361.50 493.46 L2362.00 493.33 L2362.50 493.45 L2363.00 493.86 L2363.50 494.57 L2364.00 495.60 L2364.50 496.92 L2365.00 498.49 L2365.50 500.30 L2366.00 502.29 L2366.50 504.46 L2367.00 506.77 L2367.50 509.22 L2368.00 511.79 L2368.50 514.46 L2369.00 517.23 L2369.50 520.10 L2370.00 523.04 L2370.50 526.06 L2371.00 529.14 L2371.50 532.28 L2372.00 535.47 L2372.50 538.70 L2373.00 541.97 L2373.50 545.27 L2374.00 548.59 L2374.50 551.93 L2375.00 555.27 L2375.50 558.63 L2376.00 561.97 L2376.50 565.32 L2377.00 568.64 L2377.50 571.95 L2378.00 575.23 L2378.50 578.48 L2379.00 581.69 L2379.50 584.86 L2380.00 587.99 L2380.50 591.06 L2381.00 594.08 L2381.50 597.03 L2382.00 599.91 L2382.50 602.73 L2383.00 605.47 L2383.50 608.12 L2384.00 610.70 L2384.50 613.18 L2385.00 615.58 L2385.50 617.87 L2386.00 620.07 L2386.50 622.17 L2387.00 624.15 L2387.50 626.03 L2388.00 627.80 L2388.50 629.45 L2389.00 630.99 L2389.50 632.40 L2390.00 633.70 L2390.50 634.87 L2391.00 635.91 L2391.50 636.83 L2392.00 637.62 L2392.50 638.28 L2393.00 638.83 L2393.50 639.26 L2394.00 639.59 L2394.50 639.85 L2395.00 640.05 L2395.50 640.22 L2396.00 640.37 L2396.50 640.52 L2397.00 640.66 L2397.50 640.81 L2398.00 640.96 L2398.50 641.10 L2399.00 641.25 L2399.50 641.40 L2400.00 641.54 L2400.50 641.69 L2401.00 641.84 L2401.50 641.99 L2402.00 642.13 L2402.50 642.28 L2403.00 642.43 L2403.50 642.57 L2404.00 642.72 L2404.50 642.87 L2405.00 643.01 L2405.50 643.16 L2406.00 643.31 L2406.50 643.46 L2407.00 643.60 L2407.50 643.75 L2408.00 643.90 L2408.50 644.04 L2409.00 644.19 L2409.50 644.33 L2410.00 644.46 L2410.50 644.55 L2411.00 644.59 L2411.50 644.54 L2412.00 644.36 L2412.50 644.02 L2413.00 643.50 L2413.50 642.78 L2414.00 641.87 L2414.50 640.78 L2415.00 639.51 L2415.50 638.07 L2416.00 636.47 L2416.50 634.72 L2417.00 632.83 L2417.50 630.80 L2418.00 628.64 L2418.50 626.35 L2419.00 623.95 L2419.50 621.43 L2420.00 618.81 L2420.50 616.09 L2421.00 613.27 L2421.50 610.37 L2422.00 607.38 L2422.50 604.32 L2423.00 601.19 L2423.50 598.00 L2424.00 594.75 L2424.50 591.45 L2425.00 588.11 L2425.50 584.74 L2426.00 581.33 L2426.50 577.91 L2427.00 574.46 L2427.50 571.01 L2428.00 567.55 L2428.50 564.09 L2429.00 560.64 L2429.50 557.21 L2430.00 553.80 L2430.50 550.42 L2431.00 547.07 L2431.50 543.77 L2432.00 540.51 L2432.50 537.30 L2433.00 534.15 L2433.50 531.06 L2434.00 528.05 L2434.50 525.11 L2435.00 522.24 L2435.50 519.47 L2436.00 516.78 L2436.50 514.19 L2437.00 511.70 L2437.50 509.31 L2438.00 507.03 L2438.50 504.87 L2439.00 502.82 L2439.50 500.89 L2440.00 499.08 L2440.50 497.40 L2441.00 495.85 L2441.50 494.43 L2442.00 493.14 L2442.50 492.00 L2443.00 490.99 L2443.50 490.12 L2444.00 489.41 L2444.50 488.86 L2445.00 488.50 L2445.50 488.36 L2446.00 488.48 L2446.50 488.90 L2447.00 489.64 L2447.50 490.70 L2448.00 492.07 L2448.50 493.70 L2449.00 495.56 L2449.50 497.63 L2450.00 499.87 L2450.50 502.26 L2451.00 504.79 L2451.50 507.44 L2452.00 510.20 L2452.50 513.07 L2453.00 516.03 L2453.50 519.08 L2454.00 522.20 L2454.50 525.38 L2455.00 528.63 L2455.50 531.93 L2456.00 535.27 L2456.50 538.65 L2457.00 542.06 L2457.50 545.49 L2458.00 548.94 L2458.50 552.40 L2459.00 555.87 L2459.50 559.33 L2460.00 562.78 L2460.50 566.22 L2461.00 569.64 L2461.50 573.03 L2462.00 576.39 L2462.50 579.72 L2463.00 583.00 L2463.50 586.23 L2464.00 589.40 L2464.50 592.52 L2465.00 595.57 L2465.50 598.55 L2466.00 601.46 L2466.50 604.30 L2467.00 607.04 L2467.50 609.70 L2468.00 612.27 L2468.50 614.75 L2469.00 617.12 L2469.50 619.40 L2470.00 621.56 L2470.50 623.62 L2471.00 625.56 L2471.50 627.39 L2472.00 629.10 L2472.50 630.68 L2473.00 632.15 L2473.50 633.48 L2474.00 634.69 L2474.50 635.77 L2475.00 636.72 L2475.50 637.54 L2476.00 638.23 L2476.50 638.79 L2477.00 639.23 L2477.50 639.57 L2478.00 639.84 L2478.50 640.04 L2479.00 640.22 L2479.50 640.37 L2480.00 640.52 L2480.50 640.66 L2481.00 640.81 L2481.50 640.96 L2482.00 641.10 L2482.50 641.25 L2483.00 641.40 L2483.50 641.54 L2484.00 641.69 L2484.50 641.84 L2485.00 641.99 L2485.50 642.13 L2486.00 642.28 L2486.50 642.43 L2487.00 642.57 L2487.50 642.72 L2488.00 642.87 L2488.50 643.01 L2489.00 643.16 L2489.50 643.31 L2490.00 643.46 L2490.50 643.60 L2491.00 643.75 L2491.50 643.90 L2492.00 644.04 L2492.50 644.19 L2493.00 644.33 L2493.50 644.46 L2494.00 644.55 L2494.50 644.59 L2495.00 644.54 L2495.50 644.36 L2496.00 644.02 L2496.50 643.50 L2497.00 642.78 L2497.50 641.87 L2498.00 640.78 L2498.50 639.51 L2499.00 638.07 L2499.50 636.47 L2500.00 634.72 L2500.50 632.83 L2501.00 630.80 L2501.50 628.64 L2502.00 626.35 L2502.50 623.95 L2503.00 621.43 L2503.50 618.81 L2504.00 616.09 L2504.50 613.27 L2505.00 610.37 L2505.50 607.38 L2506.00 604.32 L2506.50 601.19 L2507.00 598.00 L2507.50 594.75 L2508.00 591.45 L2508.50 588.11 L2509.00 584.74 L2509.50 581.33 L2510.00 577.91 L2510.50 574.46 L2511.00 571.01 L2511.50 567.55 L2512.00 564.09 L2512.50 560.64 L2513.00 557.21 L2513.50 553.80 L2514.00 550.42 L2514.50 547.07 L2515.00 543.77 L2515.50 540.51 L2516.00 537.30 L2516.50 534.15 L2517.00 531.06 L2517.50 528.05 L2518.00 525.11 L2518.50 522.24 L2519.00 519.47 L2519.50 516.78 L2520.00 514.19 L2520.50 511.70 L2521.00 509.31 L2521.50 507.03 L2522.00 504.87 L2522.50 502.82 L2523.00 500.89 L2523.50 499.08 L2524.00 497.40 L2524.50 495.85 L2525.00 494.43 L2525.50 493.14 L2526.00 492.00 L2526.50 490.99 L2527.00 490.12 L2527.50 489.41 L2528.00 488.86 L2528.50 488.50 L2529.00 488.36 L2529.50 488.48 L2530.00 488.90 L2530.50 489.64 L2531.00 490.70 L2531.50 492.07 L2532.00 493.70 L2532.50 495.56 L2533.00 497.63 L2533.50 499.87 L2534.00 502.26 L2534.50 504.79 L2535.00 507.44 L2535.50 510.20 L2536.00 513.07 L2536.50 516.03 L2537.00 519.08 L2537.50 522.20 L2538.00 525.38 L2538.50 528.63 L2539.00 531.93 L2539.50 535.27 L2540.00 538.65 L2540.50 542.06 L2541.00 545.49 L2541.50 548.94 L2542.00 552.40 L2542.50 555.87 L2543.00 559.33 L2543.50 562.78 L2544.00 566.22 L2544.50 569.64 L2545.00 573.03 L2545.50 576.39 L2546.00 579.72 L2546.50 583.00 L2547.00 586.23 L2547.50 589.40 L2548.00 592.52 L2548.50 595.57 L2549.00 598.55 L2549.50 601.46 L2550.00 604.30 L2550.50 607.04 L2551.00 609.70 L2551.50 612.27 L2552.00 614.75 L2552.50 617.12 L2553.00 619.40 L2553.50 621.56 L2554.00 623.62 L2554.50 625.56 L2555.00 627.39 L2555.50 629.10 L2556.00 630.68 L2556.50 632.15 L2557.00 633.48 L2557.50 634.69 L2558.00 635.77 L2558.50 636.72 L2559.00 637.54 L2559.50 638.23 L2560.00 638.79 L2560.50 639.23 L2561.00 639.57 L2561.50 639.84 L2562.00 640.04 L2562.50 640.22 L2563.00 640.37 L2563.50 640.52 L2564.00 640.66 L2564.50 640.81 L2565.00 640.96 L2565.50 641.10 L2566.00 641.25 L2566.50 641.40 L2567.00 641.54 L2567.50 641.69 L2568.00 641.84 L2568.50 641.99 L2569.00 642.13 L2569.50 642.28 L2570.00 642.43 L2570.50 642.57 L2571.00 642.72 L2571.50 642.87 L2572.00 643.01 L2572.50 643.16 L2573.00 643.31 L2573.50 643.46 L2574.00 643.60 L2574.50 643.75 L2575.00 643.90 L2575.50 644.04 L2576.00 644.19 L2576.50 644.33 L2577.00 644.46 L2577.50 644.55 L2578.00 644.59 L2578.50 644.55 L2579.00 644.37 L2579.50 644.05 L2580.00 643.54 L2580.50 642.85 L2581.00 641.97 L2581.50 640.91 L2582.00 639.68 L2582.50 638.29 L2583.00 636.74 L2583.50 635.05 L2584.00 633.22 L2584.50 631.25 L2585.00 629.16 L2585.50 626.95 L2586.00 624.62 L2586.50 622.18 L2587.00 619.64 L2587.50 617.00 L2588.00 614.28 L2588.50 611.46 L2589.00 608.57 L2589.50 605.61 L2590.00 602.58 L2590.50 599.49 L2591.00 596.35 L2591.50 593.15 L2592.00 589.92 L2592.50 586.65 L2593.00 583.36 L2593.50 580.04 L2594.00 576.70 L2594.50 573.35 L2595.00 570.00 L2595.50 566.66 L2596.00 563.32 L2596.50 560.00 L2597.00 556.70 L2597.50 553.42 L2598.00 550.18 L2598.50 546.98 L2599.00 543.82 L2599.50 540.72 L2600.00 537.67 L2600.50 534.68 L2601.00 531.76 L2601.50 528.91 L2602.00 526.14 L2602.50 523.45 L2603.00 520.85 L2603.50 518.34 L2604.00 515.93 L2604.50 513.62 L2605.00 511.41 L2605.50 509.32 L2606.00 507.33 L2606.50 505.46 L2607.00 503.71 L2607.50 502.09 L2608.00 500.58 L2608.50 499.21 L2609.00 497.97 L2609.50 496.85 L2610.00 495.88 L2610.50 495.04 L2611.00 494.35 L2611.50 493.81 L2612.00 493.46 L2612.50 493.33 L2613.00 493.45 L2613.50 493.86 L2614.00 494.57 L2614.50 495.60 L2615.00 496.92 L2615.50 498.49 L2616.00 500.30 L2616.50 502.29 L2617.00 504.46 L2617.50 506.77 L2618.00 509.22 L2618.50 511.79 L2619.00 514.46 L2619.50 517.23 L2620.00 520.10 L2620.50 523.04 L2621.00 526.06 L2621.50 529.14 L2622.00 532.28 L2622.50 535.47 L2623.00 538.70 L2623.50 541.97 L2624.00 545.27 L2624.50 548.59 L2625.00 551.93 L2625.50 555.27 L2626.00 558.63 L2626.50 561.97 L2627.00 565.32 L2627.50 568.64 L2628.00 571.95 L2628.50 575.23 L2629.00 578.48 L2629.50 581.69 L2630.00 584.86 L2630.50 587.99 L2631.00 591.06 L2631.50 594.08 L2632.00 597.03 L2632.50 599.91 L2633.00 602.73 L2633.50 605.47 L2634.00 608.12 L2634.50 610.70 L2635.00 613.18 L2635.50 615.58 L2636.00 617.87 L2636.50 620.07 L2637.00 622.17 L2637.50 624.15 L2638.00 626.03 L2638.50 627.80 L2639.00 629.45 L2639.50 630.99 L2640.00 632.40 L2640.50 633.70 L2641.00 634.87 L2641.50 635.91 L2642.00 636.83 L2642.50 637.62 L2643.00 638.28 L2643.50 638.83 L2644.00 639.26 L2644.50 639.59 L2645.00 639.85 L2645.50 640.05 L2646.00 640.22 L2646.50 640.37 L2647.00 640.52 L2647.50 640.66 L2648.00 640.81 L2648.50 640.96 L2649.00 641.10 L2649.50 641.25 L2650.00 641.40 L2650.50 641.54 L2651.00 641.69 L2651.50 641.84 L2652.00 641.99 L2652.50 642.13 L2653.00 642.28 L2653.50 642.43 L2654.00 642.57 L2654.50 642.72 L2655.00 642.87 L2655.50 643.01 L2656.00 643.16 L2656.50 643.31 L2657.00 643.46 L2657.50 643.60 L2658.00 643.75 L2658.50 643.90 L2659.00 644.04 L2659.50 644.19 L2660.00 644.33 L2660.50 644.46 L2661.00 644.55 L2661.50 644.59 L2662.00 644.55 L2662.50 644.37 L2663.00 644.05 L2663.50 643.54 L2664.00 642.85 L2664.50 641.97 L2665.00 640.91 L2665.50 639.68 L2666.00 638.29 L2666.50 636.74 L2667.00 635.05 L2667.50 633.22 L2668.00 631.25 L2668.50 629.16 L2669.00 626.95 L2669.50 624.62 L2670.00 622.18 L2670.50 619.64 L2671.00 617.00 L2671.50 614.28 L2672.00 611.46 L2672.50 608.57 L2673.00 605.61 L2673.50 602.58 L2674.00 599.49 L2674.50 596.35 L2675.00 593.15 L2675.50 589.92 L2676.00 586.65 L2676.50 583.36 L2677.00 580.04 L2677.50 576.70 L2678.00 573.35 L2678.50 570.00 L2679.00 566.66 L2679.50 563.32 L2680.00 560.00 L2680.50 556.70 L2681.00 553.42 L2681.50 550.18 L2682.00 546.98 L2682.50 543.82 L2683.00 540.72 L2683.50 537.67 L2684.00 534.68 L2684.50 531.76 L2685.00 528.91 L2685.50 526.14 L2686.00 523.45 L2686.50 520.85 L2687.00 518.34 L2687.50 515.93 L2688.00 513.62 L2688.50 511.41 L2689.00 509.32 L2689.50 507.33 L2690.00 505.46 L2690.50 503.71 L2691.00 502.09 L2691.50 500.58 L2692.00 499.21 L2692.50 497.97 L2693.00 496.85 L2693.50 495.88 L2694.00 495.04 L2694.50 494.35 L2695.00 493.81 L2695.50 493.46 L2696.00 493.33 L2696.50 493.45 L2697.00 493.86 L2697.50 494.57 L2698.00 495.60 L2698.50 496.92 L2699.00 498.49 L2699.50 500.30 L2700.00 502.29 L2700.50 504.46 L2701.00 506.77 L2701.50 509.22 L2702.00 511.79 L2702.50 514.46 L2703.00 517.23 L2703.50 520.10 L2704.00 523.04 L2704.50 526.06 L2705.00 529.14 L2705.50 532.28 L2706.00 535.47 L2706.50 538.70 L2707.00 541.97 L2707.50 545.27 L2708.00 548.59 L2708.50 551.93 L2709.00 555.27 L2709.50 558.63 L2710.00 561.97 L2710.50 565.32 L2711.00 568.64 L2711.50 571.95 L2712.00 575.23 L2712.50 578.48 L2713.00 581.69 L2713.50 584.86 L2714.00 587.99 L2714.50 591.06 L2715.00 594.08 L2715.50 597.03 L2716.00 599.91 L2716.50 602.73 L2717.00 605.47 L2717.50 608.12 L2718.00 610.70 L2718.50 613.18 L2719.00 615.58 L2719.50 617.87 L2720.00 620.07 L2720.50 622.17 L2721.00 624.15 L2721.50 626.03 L2722.00 627.80 L2722.50 629.45 L2723.00 630.99 L2723.50 632.40 L2724.00 633.70 L2724.50 634.87 L2725.00 635.91 L2725.50 636.83 L2726.00 637.62 L2726.50 638.28 L2727.00 638.83 L2727.50 639.26 L2728.00 639.59 L2728.50 639.85 L2729.00 640.05 L2729.50 640.22 L2730.00 640.37 L2730.50 640.52 L2731.00 640.66 L2731.50 640.81 L2732.00 640.96 L2732.50 641.10 L2733.00 641.25 L2733.50 641.40 L2734.00 641.54 L2734.50 641.69 L2735.00 641.84 L2735.50 641.99 L2736.00 642.13 L2736.50 642.28 L2737.00 642.43 L2737.50 642.57 L2738.00 642.72 L2738.50 642.87 L2739.00 643.01 L2739.50 643.15 L2740.00 643.28 L2740.50 643.40 L2741.00 643.50 L2741.50 643.59 L2742.00 643.66" stroke="#283593" stroke-width="2.2" fill="none" stroke-linejoin="round" /><rect x="1296" y="669.5" width="1446" height="46.5" fill="#92c2bd"/><rect x="1310.50" y="669.5" width="62.50" height="46.5" fill="#7194b9"/><text x="1314.00" y="700" font-family="Liberation Sans" font-size="19" fill="#1a1f2a" textLength="57" lengthAdjust="spacingAndGlyphs">NONE</text><rect x="1394.00" y="669.5" width="62.50" height="46.5" fill="#7194b9"/><text x="1397.50" y="700" font-family="Liberation Sans" font-size="19" fill="#1a1f2a" textLength="57" lengthAdjust="spacingAndGlyphs">NONE</text><rect x="1477.50" y="669.5" width="62.50" height="46.5" fill="#7194b9"/><text x="1481.00" y="700" font-family="Liberation Sans" font-size="19" fill="#1a1f2a" textLength="57" lengthAdjust="spacingAndGlyphs">NONE</text><rect x="1561.00" y="669.5" width="62.50" height="46.5" fill="#7194b9"/><text x="1564.50" y="700" font-family="Liberation Sans" font-size="19" fill="#1a1f2a" textLength="57" lengthAdjust="spacingAndGlyphs">NONE</text><rect x="1644.50" y="669.5" width="62.50" height="46.5" fill="#7194b9"/><text x="1648.00" y="700" font-family="Liberation Sans" font-size="19" fill="#1a1f2a" textLength="57" lengthAdjust="spacingAndGlyphs">NONE</text><rect x="1728.00" y="669.5" width="62.50" height="46.5" fill="#7194b9"/><text x="1731.50" y="700" font-family="Liberation Sans" font-size="19" fill="#1a1f2a" textLength="57" lengthAdjust="spacingAndGlyphs">NONE</text><rect x="1811.50" y="669.5" width="62.50" height="46.5" fill="#7194b9"/><text x="1815.00" y="700" font-family="Liberation Sans" font-size="19" fill="#1a1f2a" textLength="57" lengthAdjust="spacingAndGlyphs">NONE</text><rect x="1895.00" y="669.5" width="62.50" height="46.5" fill="#7194b9"/><text x="1898.50" y="700" font-family="Liberation Sans" font-size="19" fill="#1a1f2a" textLength="57" lengthAdjust="spacingAndGlyphs">NONE</text><rect x="1978.50" y="669.5" width="62.50" height="46.5" fill="#7194b9"/><text x="1982.00" y="700" font-family="Liberation Sans" font-size="19" fill="#1a1f2a" textLength="57" lengthAdjust="spacingAndGlyphs">NONE</text><rect x="2062.00" y="669.5" width="62.50" height="46.5" fill="#7194b9"/><text x="2065.50" y="700" font-family="Liberation Sans" font-size="19" fill="#1a1f2a" textLength="57" lengthAdjust="spacingAndGlyphs">NONE</text><rect x="2145.50" y="669.5" width="62.50" height="46.5" fill="#7194b9"/><text x="2149.00" y="700" font-family="Liberation Sans" font-size="19" fill="#1a1f2a" textLength="57" lengthAdjust="spacingAndGlyphs">NONE</text><rect x="2229.00" y="669.5" width="62.50" height="46.5" fill="#7194b9"/><text x="2232.50" y="700" font-family="Liberation Sans" font-size="19" fill="#1a1f2a" textLength="57" lengthAdjust="spacingAndGlyphs">NONE</text><rect x="2312.50" y="669.5" width="62.50" height="46.5" fill="#7194b9"/><text x="2316.00" y="700" font-family="Liberation Sans" font-size="19" fill="#1a1f2a" textLength="57" lengthAdjust="spacingAndGlyphs">NONE</text><rect x="2396.00" y="669.5" width="62.50" height="46.5" fill="#7194b9"/><text x="2399.50" y="700" font-family="Liberation Sans" font-size="19" fill="#1a1f2a" textLength="57" lengthAdjust="spacingAndGlyphs">NONE</text><rect x="2479.50" y="669.5" width="62.50" height="46.5" fill="#7194b9"/><text x="2483.00" y="700" font-family="Liberation Sans" font-size="19" fill="#1a1f2a" textLength="57" lengthAdjust="spacingAndGlyphs">NONE</text><rect x="2563.00" y="669.5" width="62.50" height="46.5" fill="#7194b9"/><text x="2566.50" y="700" font-family="Liberation Sans" font-size="19" fill="#1a1f2a" textLength="57" lengthAdjust="spacingAndGlyphs">NONE</text><rect x="2646.50" y="669.5" width="62.50" height="46.5" fill="#7194b9"/><text x="2650.00" y="700" font-family="Liberation Sans" font-size="19" fill="#1a1f2a" textLength="57" lengthAdjust="spacingAndGlyphs">NONE</text><rect x="2730.00" y="669.5" width="12.00" height="46.5" fill="#7194b9"/><path d="M1296.00 700.75 L1310.50 700.75 L1310.50 684.50 L1373.00 684.50 L1373.00 700.75 L1394.00 700.75 L1394.00 684.50 L1456.50 684.50 L1456.50 700.75 L1477.50 700.75 L1477.50 684.50 L1540.00 684.50 L1540.00 700.75 L1561.00 700.75 L1561.00 684.50 L1623.50 684.50 L1623.50 700.75 L1644.50 700.75 L1644.50 684.50 L1707.00 684.50 L1707.00 700.75 L1728.00 700.75 L1728.00 684.50 L1790.50 684.50 L1790.50 700.75 L1811.50 700.75 L1811.50 684.50 L1874.00 684.50 L1874.00 700.75 L1895.00 700.75 L1895.00 684.50 L1957.50 684.50 L1957.50 700.75 L1978.50 700.75 L1978.50 684.50 L2041.00 684.50 L2041.00 700.75 L2062.00 700.75 L2062.00 684.50 L2124.50 684.50 L2124.50 700.75 L2145.50 700.75 L2145.50 684.50 L2208.00 684.50 L2208.00 700.75 L2229.00 700.75 L2229.00 684.50 L2291.50 684.50 L2291.50 700.75 L2312.50 700.75 L2312.50 684.50 L2375.00 684.50 L2375.00 700.75 L2396.00 700.75 L2396.00 684.50 L2458.50 684.50 L2458.50 700.75 L2479.50 700.75 L2479.50 684.50 L2542.00 684.50 L2542.00 700.75 L2563.00 700.75 L2563.00 684.50 L2625.50 684.50 L2625.50 700.75 L2646.50 700.75 L2646.50 684.50 L2709.00 684.50 L2709.00 700.75 L2730.00 700.75 L2730.00 684.50 L2742.00 684.50 L2742.00 700.75 L2742.00 700.75" stroke="#2b3a98" stroke-width="2" fill="none" stroke-linejoin="round" /><path d="M1296 741.75 H2742" stroke="#cfcfcf" stroke-width="2" stroke-dasharray="8 8" fill="none"/><path d="M1296 764.25 H2742" stroke="#cfcfcf" stroke-width="2" stroke-dasharray="8 8" fill="none"/><path d="M1296 786.75 H2742" stroke="#cfcfcf" stroke-width="2" stroke-dasharray="8 8" fill="none"/><path d="M1296 809.25 H2742" stroke="#cfcfcf" stroke-width="2" stroke-dasharray="8 8" fill="none"/><path d="M1296 831.75 H2742" stroke="#cfcfcf" stroke-width="2" stroke-dasharray="8 8" fill="none"/><path d="M1296.00 832.00 L1310.50 832.00 L1310.50 740.00 L1373.00 740.00 L1373.00 832.00 L1394.00 832.00 L1394.00 740.00 L1456.50 740.00 L1456.50 832.00 L1477.50 832.00 L1477.50 740.00 L1540.00 740.00 L1540.00 832.00 L1561.00 832.00 L1561.00 740.00 L1623.50 740.00 L1623.50 832.00 L1644.50 832.00 L1644.50 740.00 L1707.00 740.00 L1707.00 832.00 L1728.00 832.00 L1728.00 740.00 L1790.50 740.00 L1790.50 832.00 L1811.50 832.00 L1811.50 740.00 L1874.00 740.00 L1874.00 832.00 L1895.00 832.00 L1895.00 740.00 L1957.50 740.00 L1957.50 832.00 L1978.50 832.00 L1978.50 740.00 L2041.00 740.00 L2041.00 832.00 L2062.00 832.00 L2062.00 740.00 L2124.50 740.00 L2124.50 832.00 L2145.50 832.00 L2145.50 740.00 L2208.00 740.00 L2208.00 832.00 L2229.00 832.00 L2229.00 740.00 L2291.50 740.00 L2291.50 832.00 L2312.50 832.00 L2312.50 740.00 L2375.00 740.00 L2375.00 832.00 L2396.00 832.00 L2396.00 740.00 L2458.50 740.00 L2458.50 832.00 L2479.50 832.00 L2479.50 740.00 L2542.00 740.00 L2542.00 832.00 L2563.00 832.00 L2563.00 740.00 L2625.50 740.00 L2625.50 832.00 L2646.50 832.00 L2646.50 740.00 L2709.00 740.00 L2709.00 832.00 L2730.00 832.00 L2730.00 740.00 L2742.00 740.00" stroke="#283593" stroke-width="2.4" fill="none" stroke-linejoin="round" /><path d="M1296.00 819.50 L2244.25 819.50 L2244.25 737.00 L2301.75 737.00 L2301.75 800.75 L2327.75 800.75 L2327.75 737.00 L2385.25 737.00 L2385.25 800.75 L2411.25 800.75 L2411.25 737.00 L2468.75 737.00 L2468.75 800.75 L2494.75 800.75 L2494.75 737.00 L2552.25 737.00 L2552.25 800.75 L2578.25 800.75 L2578.25 737.00 L2635.75 737.00 L2635.75 800.75 L2661.75 800.75 L2661.75 737.00 L2719.25 737.00 L2719.25 800.75 L2742.00 800.75" stroke="#e21f1f" stroke-width="2.4" fill="none" stroke-linejoin="round" /><circle cx="2244.25" cy="819.5" r="4.2" fill="#e21f1f"/><circle cx="2244.25" cy="737" r="4.2" fill="#e21f1f"/><circle cx="2301.75" cy="737" r="4.2" fill="#e21f1f"/><circle cx="2301.75" cy="800.75" r="4.2" fill="#e21f1f"/><circle cx="2327.75" cy="800.75" r="4.2" fill="#e21f1f"/><circle cx="2327.75" cy="737" r="4.2" fill="#e21f1f"/><circle cx="2385.25" cy="737" r="4.2" fill="#e21f1f"/><circle cx="2385.25" cy="800.75" r="4.2" fill="#e21f1f"/><circle cx="2411.25" cy="800.75" r="4.2" fill="#e21f1f"/><circle cx="2411.25" cy="737" r="4.2" fill="#e21f1f"/><circle cx="2468.75" cy="737" r="4.2" fill="#e21f1f"/><circle cx="2468.75" cy="800.75" r="4.2" fill="#e21f1f"/><circle cx="2494.75" cy="800.75" r="4.2" fill="#e21f1f"/><circle cx="2494.75" cy="737" r="4.2" fill="#e21f1f"/><circle cx="2552.25" cy="737" r="4.2" fill="#e21f1f"/><circle cx="2552.25" cy="800.75" r="4.2" fill="#e21f1f"/><circle cx="2578.25" cy="800.75" r="4.2" fill="#e21f1f"/><circle cx="2578.25" cy="737" r="4.2" fill="#e21f1f"/><circle cx="2635.75" cy="737" r="4.2" fill="#e21f1f"/><circle cx="2635.75" cy="800.75" r="4.2" fill="#e21f1f"/><circle cx="2661.75" cy="800.75" r="4.2" fill="#e21f1f"/><circle cx="2661.75" cy="737" r="4.2" fill="#e21f1f"/><circle cx="2719.25" cy="737" r="4.2" fill="#e21f1f"/><circle cx="2719.25" cy="800.75" r="4.2" fill="#e21f1f"/><path d="M1296 868 H2742" stroke="#cfcfcf" stroke-width="2" stroke-dasharray="8 8" fill="none"/><path d="M1296 886 H2742" stroke="#cfcfcf" stroke-width="2" stroke-dasharray="8 8" fill="none"/><path d="M1296 904 H2742" stroke="#cfcfcf" stroke-width="2" stroke-dasharray="8 8" fill="none"/><path d="M1296 922 H2742" stroke="#cfcfcf" stroke-width="2" stroke-dasharray="8 8" fill="none"/><path d="M1296 940 H2742" stroke="#cfcfcf" stroke-width="2" stroke-dasharray="8 8" fill="none"/><path d="M1296 958 H2742" stroke="#cfcfcf" stroke-width="2" stroke-dasharray="8 8" fill="none"/><path d="M1296 922 H2742" stroke="#fa1e0a" stroke-width="2.4" stroke-dasharray="4 4" fill="none"/><path d="M1296.00 869.50 L1310.50 874.00 L1314.50 868.00 L1373.00 868.00 L1394.00 874.00 L1398.00 868.00 L1456.50 868.00 L1477.50 874.00 L1481.50 868.00 L1540.00 868.00 L1561.00 874.00 L1565.00 868.00 L1623.50 868.00 L1644.50 874.00 L1648.50 868.00 L1707.00 868.00 L1728.00 874.00 L1732.00 868.00 L1790.50 868.00 L1811.50 874.00 L1815.50 868.00 L1874.00 868.00 L1895.00 874.00 L1899.00 868.00 L1957.50 868.00 L1978.50 874.00 L1982.50 868.00 L2041.00 868.00 L2062.00 874.00 L2066.00 868.00 L2124.50 868.00 L2145.50 874.00 L2149.50 868.00 L2244.25 868.00 L2244.25 868.00 L2291.75 871.00 L2301.75 892.00 L2312.25 899.00 L2327.75 878.65 L2327.75 878.65 L2375.25 881.65 L2385.25 902.65 L2395.75 909.65 L2411.25 889.30 L2411.25 889.30 L2458.75 892.30 L2468.75 913.30 L2479.25 920.30 L2494.75 899.95 L2494.75 899.95 L2542.25 902.95 L2552.25 923.95 L2562.75 930.95 L2578.25 910.60 L2578.25 910.60 L2625.75 913.60 L2635.75 934.60 L2646.25 941.60 L2661.75 921.25 L2661.75 921.25 L2709.25 924.25 L2719.25 945.25 L2729.75 952.25 L2742.00 936.25" stroke="#283593" stroke-width="2.4" fill="none" stroke-linejoin="round" /><path d="M1296 1017 H2742" stroke="#cfcfcf" stroke-width="2" stroke-dasharray="8 8" fill="none"/><path d="M1296 1040 H2742" stroke="#cfcfcf" stroke-width="2" stroke-dasharray="8 8" fill="none"/><path d="M1296 1063 H2742" stroke="#cfcfcf" stroke-width="2" stroke-dasharray="8 8" fill="none"/><path d="M1296 1086 H2742" stroke="#cfcfcf" stroke-width="2" stroke-dasharray="8 8" fill="none"/><path d="M1296 1109 H2742" stroke="#cfcfcf" stroke-width="2" stroke-dasharray="8 8" fill="none"/><path d="M1296 994 H2742" stroke="#e21f1f" stroke-width="2.4"/><path d="M1296.00 1049.50 L1318.00 1048.50 L1380.50 1025.50 L1402.00 994.50 L2301.75 994.00 L2301.75 1015.33 L2385.50 1015.33 L2385.50 1036.66 L2468.75 1036.66 L2468.75 1057.99 L2552.00 1057.99 L2552.00 1079.32 L2635.75 1079.32 L2635.75 1100.65 L2719.25 1100.65 L2719.25 1121.98 L2742.00 1121.98" stroke="#283593" stroke-width="2.4" fill="none" stroke-linejoin="round" /><path d="M1296 1163 H2742" stroke="#d2d2d2" stroke-width="2" stroke-dasharray="8 8" fill="none"/><path d="M1296 1173 H2742" stroke="#d2d2d2" stroke-width="2" stroke-dasharray="8 8" fill="none"/><path d="M1296 1182 H2742" stroke="#d2d2d2" stroke-width="2" stroke-dasharray="8 8" fill="none"/><path d="M1296 1192 H2742" stroke="#d2d2d2" stroke-width="2" stroke-dasharray="8 8" fill="none"/><path d="M1296 1202 H2742" stroke="#d2d2d2" stroke-width="2" stroke-dasharray="8 8" fill="none"/><path d="M1296 1212 H2742" stroke="#d2d2d2" stroke-width="2" stroke-dasharray="8 8" fill="none"/><path d="M1296.00 1212.00 L2244.25 1212.00 L2302.00 1202.50 L2328.00 1202.50 L2385.50 1193.50 L2411.25 1193.50 L2469.00 1184.50 L2495.00 1184.50 L2552.00 1175.50 L2578.25 1175.50 L2636.00 1166.50 L2662.00 1166.50 L2719.25 1157.50 L2742.00 1157.50" stroke="#6cb347" stroke-width="2.4" fill="none" stroke-linejoin="round" /><rect x="2240.75" y="1208.5" width="7" height="7" fill="#6cb347"/><rect x="2298.50" y="1199.0" width="7" height="7" fill="#6cb347"/><rect x="2324.50" y="1199.0" width="7" height="7" fill="#6cb347"/><rect x="2382.00" y="1190.0" width="7" height="7" fill="#6cb347"/><rect x="2407.75" y="1190.0" width="7" height="7" fill="#6cb347"/><rect x="2465.50" y="1181.0" width="7" height="7" fill="#6cb347"/><rect x="2491.50" y="1181.0" width="7" height="7" fill="#6cb347"/><rect x="2548.50" y="1172.0" width="7" height="7" fill="#6cb347"/><rect x="2574.75" y="1172.0" width="7" height="7" fill="#6cb347"/><rect x="2632.50" y="1163.0" width="7" height="7" fill="#6cb347"/><rect x="2658.50" y="1163.0" width="7" height="7" fill="#6cb347"/><rect x="2715.75" y="1154.0" width="7" height="7" fill="#6cb347"/><rect x="2244" y="1239" width="61.5" height="31.5" fill="#d6e8f6"/><rect x="2244" y="1239" width="2.5" height="31.5" fill="#a6c6de"/><rect x="2328" y="1239" width="61" height="31.5" fill="#d6e8f6"/><rect x="2328" y="1239" width="2.5" height="31.5" fill="#a6c6de"/><rect x="2411" y="1239" width="61.5" height="31.5" fill="#d6e8f6"/><rect x="2411" y="1239" width="2.5" height="31.5" fill="#a6c6de"/><rect x="2495" y="1239" width="61" height="31.5" fill="#d6e8f6"/><rect x="2495" y="1239" width="2.5" height="31.5" fill="#a6c6de"/><rect x="2578" y="1239" width="61.5" height="31.5" fill="#d6e8f6"/><rect x="2578" y="1239" width="2.5" height="31.5" fill="#a6c6de"/><rect x="2662" y="1239" width="61" height="31.5" fill="#d6e8f6"/><rect x="2662" y="1239" width="2.5" height="31.5" fill="#a6c6de"/><text x="2727" y="1261.5" font-family="Liberation Sans" font-size="19" fill="#b0b0b0">D</text><rect x="1318.50" y="1283" width="4" height="31.5" fill="#d9b96e"/><text x="1327.00" y="1305.5" font-family="Liberation Sans" font-size="21" fill="#b9b5aa" textLength="223" lengthAdjust="spacingAndGlyphs">ChangeRadarDataMode</text><rect x="1381.00" y="1306" width="4" height="31.5" fill="#d9b96e"/><text x="1389.50" y="1328.5" font-family="Liberation Sans" font-size="21" fill="#b9b5aa" textLength="223" lengthAdjust="spacingAndGlyphs">ChangeRadarDataMode</text><rect x="1402.00" y="1329.5" width="4" height="31.5" fill="#d9b96e"/><text x="1410.50" y="1352.0" font-family="Liberation Sans" font-size="21" fill="#b9b5aa" textLength="223" lengthAdjust="spacingAndGlyphs">ChangeRadarDataMode</text><rect x="1485.50" y="1352.5" width="4" height="31.5" fill="#d9b96e"/><text x="1494.00" y="1375.0" font-family="Liberation Sans" font-size="21" fill="#b9b5aa" textLength="223" lengthAdjust="spacingAndGlyphs">ChangeRadarDataMode</text><rect x="1548.50" y="1283" width="4" height="31.5" fill="#d9b96e"/><text x="1557.00" y="1305.5" font-family="Liberation Sans" font-size="21" fill="#b9b5aa" textLength="223" lengthAdjust="spacingAndGlyphs">ChangeRadarDataMode</text><rect x="1569.00" y="1376" width="4" height="31.5" fill="#d9b96e"/><text x="1577.50" y="1398.5" font-family="Liberation Sans" font-size="21" fill="#b9b5aa" textLength="223" lengthAdjust="spacingAndGlyphs">ChangeRadarDataMode</text><rect x="1652.50" y="1306" width="4" height="31.5" fill="#d9b96e"/><text x="1661.00" y="1328.5" font-family="Liberation Sans" font-size="21" fill="#b9b5aa" textLength="223" lengthAdjust="spacingAndGlyphs">ChangeRadarDataMode</text><rect x="1715.00" y="1329.5" width="4" height="31.5" fill="#d9b96e"/><text x="1723.50" y="1352.0" font-family="Liberation Sans" font-size="21" fill="#b9b5aa" textLength="223" lengthAdjust="spacingAndGlyphs">ChangeRadarDataMode</text><rect x="1736.00" y="1352.5" width="4" height="31.5" fill="#d9b96e"/><text x="1744.50" y="1375.0" font-family="Liberation Sans" font-size="21" fill="#b9b5aa" textLength="223" lengthAdjust="spacingAndGlyphs">ChangeRadarDataMode</text><rect x="1819.50" y="1283" width="4" height="31.5" fill="#d9b96e"/><text x="1828.00" y="1305.5" font-family="Liberation Sans" font-size="21" fill="#b9b5aa" textLength="223" lengthAdjust="spacingAndGlyphs">ChangeRadarDataMode</text><rect x="1882.00" y="1306" width="4" height="31.5" fill="#7fb6d6"/><text x="1890.50" y="1328.5" font-family="Liberation Sans" font-size="21" fill="#2e6da4" textLength="223" lengthAdjust="spacingAndGlyphs">ChangeRadarDataMode</text><rect x="1903.00" y="1376" width="4" height="31.5" fill="#d9b96e"/><text x="1911.50" y="1398.5" font-family="Liberation Sans" font-size="21" fill="#b9b5aa" textLength="223" lengthAdjust="spacingAndGlyphs">ChangeRadarDataMode</text><rect x="1986.50" y="1329.5" width="4" height="31.5" fill="#d9b96e"/><text x="1995.00" y="1352.0" font-family="Liberation Sans" font-size="21" fill="#b9b5aa" textLength="223" lengthAdjust="spacingAndGlyphs">ChangeRadarDataMode</text><rect x="2049.50" y="1283" width="4" height="31.5" fill="#d9b96e"/><text x="2058.00" y="1305.5" font-family="Liberation Sans" font-size="21" fill="#b9b5aa" textLength="223" lengthAdjust="spacingAndGlyphs">ChangeRadarDataMode</text><rect x="2070.50" y="1352.5" width="4" height="31.5" fill="#d9b96e"/><text x="2079.00" y="1375.0" font-family="Liberation Sans" font-size="21" fill="#b9b5aa" textLength="223" lengthAdjust="spacingAndGlyphs">ChangeRadarDataMode</text><rect x="2154.00" y="1306" width="4" height="31.5" fill="#d9b96e"/><text x="2162.50" y="1328.5" font-family="Liberation Sans" font-size="21" fill="#b9b5aa" textLength="223" lengthAdjust="spacingAndGlyphs">ChangeRadarDataMode</text><rect x="2216.00" y="1329.5" width="4" height="31.5" fill="#d9b96e"/><text x="2224.50" y="1352.0" font-family="Liberation Sans" font-size="21" fill="#b9b5aa" textLength="223" lengthAdjust="spacingAndGlyphs">ChangeRadarDataMode</text><rect x="2237.00" y="1376" width="4" height="31.5" fill="#d9b96e"/><text x="2245.50" y="1398.5" font-family="Liberation Sans" font-size="21" fill="#b9b5aa" textLength="223" lengthAdjust="spacingAndGlyphs">ChangeRadarDataMode</text><rect x="1296.00" y="1419.5" width="23.00" height="46.5" fill="#f4a55c"/><rect x="1319.00" y="1419.5" width="62.00" height="46.5" fill="#e87a7c"/><text x="1328.00" y="1451" font-family="Liberation Sans" font-size="19" fill="#1e1e1e" textLength="43.5" lengthAdjust="spacingAndGlyphs">MED...</text><rect x="1381.00" y="1419.5" width="21.50" height="46.5" fill="#8fc2bb"/><rect x="1402.50" y="1419.5" width="83.50" height="46.5" fill="#f4a55c"/><text x="1411.00" y="1451" font-family="Liberation Sans" font-size="19" fill="#1e1e1e" textLength="66" lengthAdjust="spacingAndGlyphs">LOW_R...</text><rect x="1486.00" y="1419.5" width="62.00" height="46.5" fill="#e87a7c"/><text x="1495.00" y="1451" font-family="Liberation Sans" font-size="19" fill="#1e1e1e" textLength="43.5" lengthAdjust="spacingAndGlyphs">MED...</text><rect x="1548.00" y="1419.5" width="21.50" height="46.5" fill="#8fc2bb"/><rect x="1569.50" y="1419.5" width="83.50" height="46.5" fill="#f4a55c"/><text x="1578.00" y="1451" font-family="Liberation Sans" font-size="19" fill="#1e1e1e" textLength="66" lengthAdjust="spacingAndGlyphs">LOW_R...</text><rect x="1653.00" y="1419.5" width="62.00" height="46.5" fill="#e87a7c"/><text x="1662.00" y="1451" font-family="Liberation Sans" font-size="19" fill="#1e1e1e" textLength="43.5" lengthAdjust="spacingAndGlyphs">MED...</text><rect x="1715.00" y="1419.5" width="21.50" height="46.5" fill="#8fc2bb"/><rect x="1736.50" y="1419.5" width="83.50" height="46.5" fill="#f4a55c"/><text x="1745.00" y="1451" font-family="Liberation Sans" font-size="19" fill="#1e1e1e" textLength="66" lengthAdjust="spacingAndGlyphs">LOW_R...</text><rect x="1820.00" y="1419.5" width="62.00" height="46.5" fill="#e87a7c"/><text x="1829.00" y="1451" font-family="Liberation Sans" font-size="19" fill="#1e1e1e" textLength="43.5" lengthAdjust="spacingAndGlyphs">MED...</text><rect x="1882.00" y="1419.5" width="21.50" height="46.5" fill="#8fc2bb"/><rect x="1903.50" y="1419.5" width="83.50" height="46.5" fill="#f4a55c"/><text x="1912.00" y="1451" font-family="Liberation Sans" font-size="19" fill="#1e1e1e" textLength="66" lengthAdjust="spacingAndGlyphs">LOW_R...</text><rect x="1987.00" y="1419.5" width="62.00" height="46.5" fill="#e87a7c"/><text x="1996.00" y="1451" font-family="Liberation Sans" font-size="19" fill="#1e1e1e" textLength="43.5" lengthAdjust="spacingAndGlyphs">MED...</text><rect x="2049.00" y="1419.5" width="21.50" height="46.5" fill="#8fc2bb"/><rect x="2070.50" y="1419.5" width="83.50" height="46.5" fill="#f4a55c"/><text x="2079.00" y="1451" font-family="Liberation Sans" font-size="19" fill="#1e1e1e" textLength="66" lengthAdjust="spacingAndGlyphs">LOW_R...</text><rect x="2154.00" y="1419.5" width="62.00" height="46.5" fill="#e87a7c"/><text x="2163.00" y="1451" font-family="Liberation Sans" font-size="19" fill="#1e1e1e" textLength="43.5" lengthAdjust="spacingAndGlyphs">MED...</text><rect x="2216.00" y="1419.5" width="21.50" height="46.5" fill="#8fc2bb"/><rect x="2237.50" y="1419.5" width="504.50" height="46.5" fill="#7095b9"/><text x="2471.5" y="1451" font-family="Liberation Sans" font-size="19" fill="#1e1e1e" textLength="36.5" lengthAdjust="spacingAndGlyphs">OFF</text><path d="M1296 1487 H2742" stroke="#d2d2d2" stroke-width="2" stroke-dasharray="8 8" fill="none"/><path d="M1296 1510 H2742" stroke="#d2d2d2" stroke-width="2" stroke-dasharray="8 8" fill="none"/><path d="M1296 1533 H2742" stroke="#d2d2d2" stroke-width="2" stroke-dasharray="8 8" fill="none"/><path d="M1381 1540 V1487 H1402 V1540" stroke="#283593" stroke-width="2.4" fill="none"/><circle cx="1381" cy="1487" r="3.6" fill="#283593"/><circle cx="1402" cy="1487" r="3.6" fill="#283593"/><path d="M1548 1540 V1487 H1569.5 V1540" stroke="#283593" stroke-width="2.4" fill="none"/><circle cx="1548" cy="1487" r="3.6" fill="#283593"/><circle cx="1569.5" cy="1487" r="3.6" fill="#283593"/><path d="M1715 1540 V1487 H1736 V1540" stroke="#283593" stroke-width="2.4" fill="none"/><circle cx="1715" cy="1487" r="3.6" fill="#283593"/><circle cx="1736" cy="1487" r="3.6" fill="#283593"/><path d="M1882 1540 V1487 H1903 V1540" stroke="#283593" stroke-width="2.4" fill="none"/><circle cx="1882" cy="1487" r="3.6" fill="#283593"/><circle cx="1903" cy="1487" r="3.6" fill="#283593"/><path d="M2049 1540 V1487 H2070.5 V1540" stroke="#283593" stroke-width="2.4" fill="none"/><circle cx="2049" cy="1487" r="3.6" fill="#283593"/><circle cx="2070.5" cy="1487" r="3.6" fill="#283593"/><path d="M2216 1540 V1487 H2237.5 V1540" stroke="#283593" stroke-width="2.4" fill="none"/><circle cx="2216" cy="1487" r="3.6" fill="#283593"/><circle cx="2237.5" cy="1487" r="3.6" fill="#283593"/><rect x="1790.6" y="405" width="2" height="1129" fill="#8d8d8d"/></g></svg>
<svg style="left:1778px;top:378px;" width="28" height="36" viewBox="0 0 28 36"><path d="M13.6 33 L4 19 A11 11 0 1 1 23.2 19 Z" fill="#4b5b63"/><circle cx="13.6" cy="13.2" r="8.6" fill="#fff"/><circle cx="13.6" cy="13.2" r="6.8" fill="#4b5b63"/><path d="M13.6 8.6 V17.8 M9 13.2 H18.2" stroke="#fff" stroke-width="2.6"/></svg>
<div style="left:1812px;top:377px;width:377px;height:32px;background:#eeeff1;border-radius:16px;box-shadow:0 1px 1px rgba(0,0,0,0.12);"></div>
<div class="t" style="top:381.0px;font-size:24px;line-height:24px;color:#1e1e1e;letter-spacing:1.729px;left:1824.0px;">2024-002T23:47:55.925 UTC</div>
<div class="t" style="top:932.5px;font-size:23px;line-height:23px;color:#f24430;letter-spacing:0.208px;left:1306.5px;">Min SOC Limit</div>
<div style="left:650px;top:1534px;width:2153px;height:6px;background:#e8eaea;"></div>
<svg style="left:1696px;top:1535px;" width="64" height="4" viewBox="0 0 64 4"><rect x="2.0" y="0.5" width="4" height="2.5" fill="#c8c8c8"/><rect x="9.5" y="0.5" width="4" height="2.5" fill="#c8c8c8"/><rect x="17.0" y="0.5" width="4" height="2.5" fill="#c8c8c8"/><rect x="24.5" y="0.5" width="4" height="2.5" fill="#c8c8c8"/><rect x="32.0" y="0.5" width="4" height="2.5" fill="#c8c8c8"/><rect x="39.5" y="0.5" width="4" height="2.5" fill="#c8c8c8"/><rect x="47.0" y="0.5" width="4" height="2.5" fill="#c8c8c8"/><rect x="54.5" y="0.5" width="4" height="2.5" fill="#c8c8c8"/></svg>
<div style="left:650px;top:1540px;width:2153px;height:373px;background:#fff;"></div>
<div style="left:667px;top:1563.5px;width:377px;height:47px;border:2px solid #c5c9cc;background:#fff;border-radius:8px;box-sizing:border-box;"></div>
<div class="t" style="top:1573.1px;font-size:27px;line-height:27px;color:#23282c;-webkit-text-stroke:0.35px currentColor;letter-spacing:0.625px;left:686.0px;">Activity Directives Table</div>
<svg style="left:999px;top:1579px;" width="24" height="16" viewBox="0 0 24 16"><path d="M3 3 L12.0 13 L21 3" fill="none" stroke="#222" stroke-width="3.4" stroke-linecap="round" stroke-linejoin="round"/></svg>
<div style="left:2210px;top:1563px;width:296px;height:48px;background:#f7f7f7;border:2px solid #e8e8e8;border-radius:9px;box-sizing:border-box;"></div>
<div class="t" style="top:1575.8px;font-size:25px;line-height:25px;color:#a6a6a6;letter-spacing:1.609px;left:2224.0px;width:262px;overflow:hidden;">Filter Activity Directiv</div>
<div style="left:2539px;top:1563px;width:67px;height:47px;border:2px solid #e8e8e8;background:#fff;border-radius:8px;box-sizing:border-box;"></div>
<svg style="left:2555px;top:1570px;" width="34" height="32" viewBox="0 0 34 32"><rect x="3" y="3" width="13" height="26" fill="none" stroke="#222" stroke-width="2.4"/><rect x="6" y="8" width="6" height="3.5" fill="#222"/><rect x="6" y="15" width="6" height="3.5" fill="#222"/><path d="M21 16 H32" stroke="#222" stroke-width="3.4"/><path d="M18 16 L25 9.5 L25 22.5 Z" fill="#222"/></svg>
<div style="left:2614px;top:1563px;width:68px;height:47px;background:#ebebeb;border-radius:8px;"></div>
<svg style="left:2631px;top:1570px;" width="34" height="32" viewBox="0 0 34 32"><rect x="3" y="3" width="29" height="28" fill="none" stroke="#222" stroke-width="2.6"/><path d="M10 17 H25" stroke="#222" stroke-width="3.4"/><path d="M6.5 17 L13 10.5 L13 23.5 Z M28.5 17 L22 10.5 L22 23.5 Z" fill="#222"/></svg>
<div style="left:2714px;top:1563px;width:72px;height:47px;border:2px solid #e8e8e8;background:#fff;border-radius:8px;box-sizing:border-box;"></div>
<svg style="left:2734px;top:1582px;" width="32" height="12" viewBox="0 0 32 12"><circle cx="5" cy="6" r="4" fill="#222"/><circle cx="16" cy="6" r="4" fill="#222"/><circle cx="27" cy="6" r="4" fill="#222"/></svg>
<div style="left:650px;top:1633.5px;width:2153px;height:2px;background:#e2e2e2;"></div>
<div style="left:651px;top:1636px;width:2151px;height:277px;background:#fff;border-left:2px solid #e2e2e2;border-right:2px solid #e2e2e2;box-sizing:border-box;"></div>
<div style="left:651px;top:1636px;width:2151px;height:67px;background:#f8f8f8;border:2px solid #e2e2e2;border-bottom:2px solid #dedede;border-radius:6px 6px 0 0;box-sizing:border-box;"></div>
<div style="left:786px;top:1660px;width:4px;height:18px;background:#dde2ea;"></div>
<div style="left:957px;top:1660px;width:4px;height:18px;background:#dde2ea;"></div>
<div style="left:1393px;top:1660px;width:4px;height:18px;background:#dde2ea;"></div>
<div style="left:1829px;top:1660px;width:4px;height:18px;background:#dde2ea;"></div>
<div style="left:2265px;top:1660px;width:4px;height:18px;background:#dde2ea;"></div>
<div style="left:2701px;top:1660px;width:4px;height:18px;background:#dde2ea;"></div>
<div class="t" style="top:1655.5px;font-size:26px;line-height:26px;color:#1f2326;-webkit-text-stroke:0.35px currentColor;letter-spacing:-0.600px;left:817.0px;">ID</div>
<div class="t" style="top:1655.5px;font-size:26px;line-height:26px;color:#1f2326;-webkit-text-stroke:0.35px currentColor;letter-spacing:-0.600px;left:988.0px;">Name</div>
<div class="t" style="top:1655.5px;font-size:26px;line-height:26px;color:#1f2326;-webkit-text-stroke:0.35px currentColor;letter-spacing:0.136px;left:1423.0px;">Start Offset</div>
<div class="t" style="top:1655.5px;font-size:26px;line-height:26px;color:#1f2326;-webkit-text-stroke:0.35px currentColor;letter-spacing:0.000px;left:1859.0px;">Type</div>
<div class="t" style="top:1655.5px;font-size:26px;line-height:26px;color:#1f2326;-webkit-text-stroke:0.35px currentColor;letter-spacing:-0.125px;left:2295.0px;">Absolute Start Time (UTC)</div>
<div style="left:653px;top:1703px;width:2118px;height:15px;background:#fbfbfb;"></div>
<div style="left:653px;top:1717px;width:2118px;height:2px;background:#d9dfe7;"></div>
<div style="left:653px;top:1719px;width:2118px;height:63px;background:#fff;"></div>
<div style="left:653px;top:1782px;width:2118px;height:2px;background:#d9dfe7;"></div>
<div class="t" style="top:1740.0px;font-size:26px;line-height:26px;color:#1f2326;letter-spacing:-0.600px;left:817.0px;">227</div>
<div class="t" style="top:1740.0px;font-size:26px;line-height:26px;color:#1f2326;letter-spacing:-0.600px;left:988.0px;">ChangeRadarDataMode</div>
<div class="t" style="top:1740.0px;font-size:26px;line-height:26px;color:#1f2326;letter-spacing:-0.464px;left:1423.0px;">31:53:59.160486</div>
<div class="t" style="top:1740.0px;font-size:26px;line-height:26px;color:#1f2326;letter-spacing:-0.600px;left:1859.0px;">ChangeRadarDataMode</div>
<div class="t" style="top:1740.0px;font-size:26px;line-height:26px;color:#1f2326;letter-spacing:-0.125px;left:2295.0px;">2024-003T07:53:59.160</div>
<div style="left:653px;top:1783px;width:2118px;height:63px;background:#fafafa;"></div>
<div style="left:653px;top:1846px;width:2118px;height:2px;background:#d9dfe7;"></div>
<div class="t" style="top:1804.0px;font-size:26px;line-height:26px;color:#1f2326;letter-spacing:-0.600px;left:817.0px;">228</div>
<div class="t" style="top:1804.0px;font-size:26px;line-height:26px;color:#1f2326;letter-spacing:-0.600px;left:988.0px;">ChangeRadarDataMode</div>
<div class="t" style="top:1804.0px;font-size:26px;line-height:26px;color:#1f2326;letter-spacing:-0.143px;left:1423.0px;">20:40:25.784766</div>
<div class="t" style="top:1804.0px;font-size:26px;line-height:26px;color:#1f2326;letter-spacing:-0.600px;left:1859.0px;">ChangeRadarDataMode</div>
<div class="t" style="top:1804.0px;font-size:26px;line-height:26px;color:#1f2326;letter-spacing:0.125px;left:2295.0px;">2024-002T20:40:25.784</div>
<div style="left:653px;top:1847px;width:2118px;height:63px;background:#deebfa;"></div>
<div style="left:653px;top:1910px;width:2118px;height:2px;background:#d9dfe7;"></div>
<div class="t" style="top:1868.0px;font-size:26px;line-height:26px;color:#1f2326;letter-spacing:-0.600px;left:817.0px;">229</div>
<div class="t" style="top:1868.0px;font-size:26px;line-height:26px;color:#1f2326;letter-spacing:-0.600px;left:988.0px;">ChangeRadarDataMode</div>
<div class="t" style="top:1868.0px;font-size:26px;line-height:26px;color:#1f2326;letter-spacing:0.143px;left:1423.0px;">25:48:54.694368</div>
<div class="t" style="top:1868.0px;font-size:26px;line-height:26px;color:#1f2326;letter-spacing:-0.600px;left:1859.0px;">ChangeRadarDataMode</div>
<div class="t" style="top:1868.0px;font-size:26px;line-height:26px;color:#1f2326;letter-spacing:0.100px;left:2295.0px;">2024-003T01:48:54.694</div>
<div style="left:651px;top:1910px;width:2151px;height:3px;background:#e2e2e2;"></div>
<div style="left:2803px;top:97px;width:6px;height:1816px;background:#e9e9e9;"></div>
<svg style="left:2804px;top:975px;" width="4" height="62" viewBox="0 0 4 62"><rect x="0.5" y="2.0" width="2.5" height="4" fill="#c8c8c8"/><rect x="0.5" y="9.5" width="2.5" height="4" fill="#c8c8c8"/><rect x="0.5" y="17.0" width="2.5" height="4" fill="#c8c8c8"/><rect x="0.5" y="24.5" width="2.5" height="4" fill="#c8c8c8"/><rect x="0.5" y="32.0" width="2.5" height="4" fill="#c8c8c8"/><rect x="0.5" y="39.5" width="2.5" height="4" fill="#c8c8c8"/><rect x="0.5" y="47.0" width="2.5" height="4" fill="#c8c8c8"/><rect x="0.5" y="54.5" width="2.5" height="4" fill="#c8c8c8"/></svg>
<div style="left:2825px;top:120px;width:289px;height:47px;border:2px solid #c5c9cc;background:#fff;border-radius:8px;box-sizing:border-box;"></div>
<div class="t" style="top:130.4px;font-size:27px;line-height:27px;color:#23282c;-webkit-text-stroke:0.35px currentColor;letter-spacing:0.750px;left:2844.0px;">Selected Activity</div>
<svg style="left:3068px;top:136px;" width="24" height="16" viewBox="0 0 24 16"><path d="M3 3 L12.0 13 L21 3" fill="none" stroke="#222" stroke-width="3.4" stroke-linecap="round" stroke-linejoin="round"/></svg>
<div style="left:3264px;top:120px;width:48px;height:47px;border:2px solid #c5c9cc;background:#fff;border-radius:8px;box-sizing:border-box;"></div>
<div style="left:3328px;top:120px;width:48px;height:47px;border:2px solid #c5c9cc;background:#fff;border-radius:8px;box-sizing:border-box;"></div>
<div style="left:3392px;top:120px;width:48px;height:47px;border:2px solid #c5c9cc;background:#fff;border-radius:8px;box-sizing:border-box;"></div>
<svg style="left:3272px;top:128px;" width="32" height="32" viewBox="0 0 32 32"><path d="M16 4 L28 16 L16 28 L4 16 Z" fill="none" stroke="#222" stroke-width="2.4" stroke-linejoin="round"/></svg>
<svg style="left:3336px;top:126px;" width="34" height="34" viewBox="0 0 34 34"><rect x="5" y="15" width="20" height="16" rx="4" fill="#222"/><path d="M9 15 V10 A6 6 0 0 1 21 9" fill="none" stroke="#222" stroke-width="3.2"/><path d="M25 5 L27 2 M27 9 L31 8 M24 8 L26 6" stroke="#222" stroke-width="1.6"/></svg>
<svg style="left:3400px;top:126px;" width="34" height="34" viewBox="0 0 34 34"><rect x="6" y="8" width="20" height="3.5" fill="#222"/><rect x="13" y="4.5" width="6" height="4" rx="1" fill="#222"/><path d="M7.5 13 H24.5 L23.5 30 Q23.4 31 22.4 31 H9.6 Q8.6 31 8.5 30 Z" fill="#222"/><rect x="12" y="16" width="2.6" height="11" fill="#fff"/><rect x="17.4" y="16" width="2.6" height="11" fill="#fff"/></svg>
<div style="left:2809px;top:191px;width:648px;height:2px;background:#e8e8e8;"></div>
<div style="left:2809px;top:193px;width:648px;height:65px;background:#f7f7f7;"></div>
<div style="left:2809px;top:258px;width:648px;height:2px;background:#ededed;"></div>
<div class="t" style="top:210.6px;font-size:26px;line-height:26px;color:#222;font-style:italic;letter-spacing:-0.461px;left:2842.0px;">ChangeRadarDataMode</div>
<svg style="left:3400px;top:206px;" width="36" height="36" viewBox="0 0 36 36"><circle cx="13" cy="24" r="8.5" fill="none" stroke="#5f686d" stroke-width="2.8"/><path d="M13 20 V27" stroke="#5f686d" stroke-width="2.4"/><rect x="14" y="8" width="18" height="3" fill="#5f686d"/><rect x="22" y="15" width="10" height="3" fill="#5f686d"/><rect x="26" y="22" width="6" height="3" fill="#5f686d"/></svg>
<svg style="left:2842px;top:302px;" width="15.680000000000001" height="13.200000000000001" viewBox="0 0 15.680000000000001 13.200000000000001"><path d="M0 0 L15.680000000000001 0 L7.840000000000001 13.200000000000001 Z" fill="#1e1e1e"/></svg>
<div class="t" style="top:293.2px;font-size:26px;line-height:26px;color:#23282c;-webkit-text-stroke:0.35px currentColor;letter-spacing:0.056px;left:2876.0px;">Definition</div>
<div class="t" style="top:357.8px;font-size:25px;line-height:25px;color:#3b4248;letter-spacing:-0.600px;left:2906.0px;">ID</div>
<div style="left:3130px;top:347.5px;width:294px;height:47px;background:#f7f7f7;border:2px solid #ececec;border-radius:9px;box-sizing:border-box;"></div>
<div class="t" style="top:357.8px;font-size:25px;line-height:25px;color:#a6a6a6;letter-spacing:-0.350px;left:3144.0px;width:267px;overflow:hidden;">229</div>
<div class="t" style="top:429.5px;font-size:25px;line-height:25px;color:#3b4248;letter-spacing:0.833px;left:2906.0px;">Activity Type</div>
<div style="left:3130px;top:419.2px;width:294px;height:47px;background:#f7f7f7;border:2px solid #ececec;border-radius:9px;box-sizing:border-box;"></div>
<div class="t" style="top:429.5px;font-size:25px;line-height:25px;color:#a6a6a6;letter-spacing:-0.056px;left:3144.0px;width:267px;overflow:hidden;">ChangeRadarDataMode</div>
<div class="t" style="top:501.4px;font-size:25px;line-height:25px;color:#3b4248;letter-spacing:0.059px;left:2906.0px;">Start Time (UTC...</div>
<div style="left:3130px;top:491.1px;width:294px;height:47px;background:#f7f7f7;border:2px solid #ececec;border-radius:9px;box-sizing:border-box;"></div>
<div class="t" style="top:501.4px;font-size:25px;line-height:25px;color:#2a3035;letter-spacing:0.650px;left:3144.0px;width:267px;overflow:hidden;">2024-003T01:48:54.694</div>
<svg style="left:2908px;top:579.5px;" width="14.3" height="14.560000000000002" viewBox="0 0 14.3 14.560000000000002"><path d="M0 0 L14.3 7.280000000000001 L0 14.560000000000002 Z" fill="#1e1e1e"/></svg>
<div class="t" style="top:572.4px;font-size:26px;line-height:26px;color:#23282c;-webkit-text-stroke:0.35px currentColor;letter-spacing:-0.340px;left:2940.0px;">Anchor</div>
<div class="t" style="top:645.5px;font-size:25px;line-height:25px;color:#3b4248;letter-spacing:0.000px;left:2906.0px;">Creation Time (...</div>
<div style="left:3130px;top:635.2px;width:294px;height:47px;background:#f7f7f7;border:2px solid #ececec;border-radius:9px;box-sizing:border-box;"></div>
<div class="t" style="top:645.5px;font-size:25px;line-height:25px;color:#a6a6a6;letter-spacing:0.500px;left:3144.0px;width:267px;overflow:hidden;">2025-01-30T16:36:20.412</div>
<div class="t" style="top:717.8px;font-size:25px;line-height:25px;color:#3b4248;letter-spacing:0.222px;left:2906.0px;">Last Modified Ti...</div>
<div style="left:3130px;top:707.5px;width:294px;height:47px;background:#f7f7f7;border:2px solid #ececec;border-radius:9px;box-sizing:border-box;"></div>
<div class="t" style="top:717.8px;font-size:25px;line-height:25px;color:#a6a6a6;letter-spacing:0.500px;left:3144.0px;width:267px;overflow:hidden;">2025-01-30T16:36:20.412</div>
<div class="t" style="top:789.8px;font-size:25px;line-height:25px;color:#3b4248;letter-spacing:0.233px;left:2906.0px;">Last Modified By</div>
<div style="left:3130px;top:779.5px;width:294px;height:47px;background:#f7f7f7;border:2px solid #ececec;border-radius:9px;box-sizing:border-box;"></div>
<div class="t" style="top:789.8px;font-size:25px;line-height:25px;color:#a6a6a6;letter-spacing:-0.300px;left:3144.0px;width:267px;overflow:hidden;">aplave</div>
<div class="t" style="top:862.8px;font-size:25px;line-height:25px;color:#3b4248;letter-spacing:-0.111px;left:2906.0px;">Created By</div>
<div style="left:3130px;top:852.5px;width:294px;height:47px;background:#f7f7f7;border:2px solid #ececec;border-radius:9px;box-sizing:border-box;"></div>
<div class="t" style="top:862.8px;font-size:25px;line-height:25px;color:#a6a6a6;letter-spacing:-0.300px;left:3144.0px;width:267px;overflow:hidden;">aplave</div>
<div class="t" style="top:934.3px;font-size:25px;line-height:25px;color:#3b4248;letter-spacing:-0.088px;left:2906.0px;">Source Scheduli...</div>
<div style="left:3130px;top:924.0px;width:294px;height:47px;background:#f7f7f7;border:2px solid #ececec;border-radius:9px;box-sizing:border-box;"></div>
<div class="t" style="top:934.3px;font-size:25px;line-height:25px;color:#a6a6a6;letter-spacing:-0.167px;left:3144.0px;width:267px;overflow:hidden;">None</div>
<div class="t" style="top:1007.8px;font-size:25px;line-height:25px;color:#3b4248;letter-spacing:-0.167px;left:2906.0px;">Tags</div>
<div style="left:3130px;top:996.5px;width:294px;height:50px;background:#f7f7f7;border:2px solid #ececec;border-radius:9px;box-sizing:border-box;"></div>
<div class="t" style="top:1007.8px;font-size:25px;line-height:25px;color:#a6a6a6;letter-spacing:-0.038px;left:3146.5px;">Enter a tag...</div>
<svg style="left:2842px;top:1099px;" width="15.680000000000001" height="13.200000000000001" viewBox="0 0 15.680000000000001 13.200000000000001"><path d="M0 0 L15.680000000000001 0 L7.840000000000001 13.200000000000001 Z" fill="#1e1e1e"/></svg>
<div class="t" style="top:1090.0px;font-size:26px;line-height:26px;color:#23282c;-webkit-text-stroke:0.35px currentColor;letter-spacing:-0.444px;left:2876.0px;">Parameters</div>
<div style="left:2906px;top:1135.5px;width:518px;height:103px;background:#f7f7f7;border:2px solid #ececec;border-radius:9px;box-sizing:border-box;"></div>
<div class="t" style="top:1145.8px;font-size:25px;line-height:25px;color:#333a3f;letter-spacing:-0.100px;left:2920.0px;">Preset</div>
<div style="left:2920px;top:1184px;width:489px;height:46px;background:#fff;border:2px solid #d2d2d2;border-radius:9px;box-sizing:border-box;"></div>
<div class="t" style="top:1193.5px;font-size:26px;line-height:26px;color:#23282c;-webkit-text-stroke:0.35px currentColor;letter-spacing:-0.600px;left:2930.0px;">None</div>
<svg style="left:3367px;top:1190px;" width="34" height="34" viewBox="0 0 34 34"><g transform="translate(17,17)"><rect x="-3" y="-16" width="6" height="8.0" transform="rotate(0)" fill="#8a8a8a"/><rect x="-3" y="-16" width="6" height="8.0" transform="rotate(45)" fill="#8a8a8a"/><rect x="-3" y="-16" width="6" height="8.0" transform="rotate(90)" fill="#8a8a8a"/><rect x="-3" y="-16" width="6" height="8.0" transform="rotate(135)" fill="#8a8a8a"/><rect x="-3" y="-16" width="6" height="8.0" transform="rotate(180)" fill="#8a8a8a"/><rect x="-3" y="-16" width="6" height="8.0" transform="rotate(225)" fill="#8a8a8a"/><rect x="-3" y="-16" width="6" height="8.0" transform="rotate(270)" fill="#8a8a8a"/><rect x="-3" y="-16" width="6" height="8.0" transform="rotate(315)" fill="#8a8a8a"/><circle r="10.88" fill="none" stroke="#8a8a8a" stroke-width="5.76"/></g></svg>
<div class="t" style="top:1265.8px;font-size:25px;line-height:25px;color:#3b4248;letter-spacing:0.000px;left:2907.5px;">mode</div>
<div style="left:3114px;top:1255.5px;width:234px;height:47px;background:#fff;border:2px solid #d2d2d2;border-radius:8px;box-sizing:border-box;"></div>
<div class="t" style="top:1265.0px;font-size:26px;line-height:26px;color:#23282c;-webkit-text-stroke:0.35px currentColor;letter-spacing:-0.600px;left:3124.0px;">HI_RES</div>
<svg style="left:3319px;top:1272px;" width="24" height="15" viewBox="0 0 24 15"><path d="M3 3 L12.0 12 L21 3" fill="none" stroke="#222" stroke-width="2.2" stroke-linecap="round" stroke-linejoin="round"/></svg>
<div style="left:3358px;top:1273px;width:12px;height:12px;background:#f7a30f;border-radius:6px;"></div>
<svg style="left:2842px;top:1355px;" width="15.680000000000001" height="13.200000000000001" viewBox="0 0 15.680000000000001 13.200000000000001"><path d="M0 0 L15.680000000000001 0 L7.840000000000001 13.200000000000001 Z" fill="#1e1e1e"/></svg>
<div class="t" style="top:1346.0px;font-size:26px;line-height:26px;color:#23282c;-webkit-text-stroke:0.35px currentColor;letter-spacing:-0.050px;left:2876.0px;">Annotations</div>
<div class="t" style="top:1394.3px;font-size:25px;line-height:25px;color:#575d61;letter-spacing:0.553px;left:2906.5px;">No Annotations Found</div>
<div style="left:0px;top:1913px;width:3457px;height:72px;background:#f7f7f7;"></div>
<div style="left:0px;top:1913px;width:140px;height:72px;background:#e9ebeb;"></div>
<div class="t" style="top:1936.0px;font-size:26px;line-height:26px;color:#1e2226;-webkit-text-stroke:0.35px currentColor;letter-spacing:-0.600px;left:33.0px;">All</div>
<div class="t" style="top:1936.0px;font-size:26px;line-height:26px;color:#666;left:86.0px;">0</div>
<div style="left:175px;top:1934px;width:2px;height:28px;background:#cfcfcf;"></div>
<svg style="left:246px;top:1933px;" width="30" height="32" viewBox="0 0 30 32"><path d="M3 3 L3 29 L27 29 Z" fill="none" stroke="#56636b" stroke-width="5" stroke-linejoin="round"/><path d="M9 12 L12 9 M12 16 L15 13 M15 20 L18 17" stroke="#56636b" stroke-width="2"/></svg>
<div style="left:291px;top:1933px;width:32px;height:32px;background:#e9eaea;border-radius:16px;"></div>
<div class="t" style="top:1936.0px;font-size:26px;line-height:26px;color:#5f686d;left:-193px;width:1000px;text-align:center;">0</div>
<svg style="left:386px;top:1933px;" width="34" height="32" viewBox="0 0 34 32"><rect x="2" y="2" width="30" height="28" rx="3" fill="none" stroke="#56636b" stroke-width="3"/><rect x="2" y="2" width="30" height="7" fill="#56636b"/><rect x="8" y="14" width="3.5" height="3.5" fill="#56636b"/><rect x="15.5" y="14" width="3.5" height="3.5" fill="#56636b"/><rect x="23" y="14" width="3.5" height="3.5" fill="#56636b"/><rect x="8" y="21" width="3.5" height="3.5" fill="#56636b"/><rect x="15.5" y="21" width="3.5" height="3.5" fill="#56636b"/></svg>
<div style="left:435px;top:1933px;width:32px;height:32px;background:#e9eaea;border-radius:16px;"></div>
<div class="t" style="top:1936.0px;font-size:26px;line-height:26px;color:#5f686d;left:-49px;width:1000px;text-align:center;">0</div>
<svg style="left:530px;top:1932px;" width="34" height="34" viewBox="0 0 34 34"><g transform="translate(17,17)"><rect x="-3.5" y="-16" width="7" height="7.2" transform="rotate(0)" fill="#56636b"/><rect x="-3.5" y="-16" width="7" height="7.2" transform="rotate(45)" fill="#56636b"/><rect x="-3.5" y="-16" width="7" height="7.2" transform="rotate(90)" fill="#56636b"/><rect x="-3.5" y="-16" width="7" height="7.2" transform="rotate(135)" fill="#56636b"/><rect x="-3.5" y="-16" width="7" height="7.2" transform="rotate(180)" fill="#56636b"/><rect x="-3.5" y="-16" width="7" height="7.2" transform="rotate(225)" fill="#56636b"/><rect x="-3.5" y="-16" width="7" height="7.2" transform="rotate(270)" fill="#56636b"/><rect x="-3.5" y="-16" width="7" height="7.2" transform="rotate(315)" fill="#56636b"/><circle r="11.2" fill="none" stroke="#56636b" stroke-width="3.2"/><path d="M0 0 L0 -11.2 M0 0 L9.6 5.6 M0 0 L-9.6 5.6" stroke="#56636b" stroke-width="2.5"/></g></svg>
<div style="left:578px;top:1933px;width:32px;height:32px;background:#e9eaea;border-radius:16px;"></div>
<div class="t" style="top:1936.0px;font-size:26px;line-height:26px;color:#5f686d;left:94px;width:1000px;text-align:center;">0</div>
<svg style="left:674px;top:1933px;" width="34" height="32" viewBox="0 0 34 32"><g fill="#56636b"><rect x="2" y="2" width="16" height="8" rx="2"/><rect x="8" y="12" width="16" height="8" rx="2"/><rect x="14" y="22" width="16" height="8" rx="2"/></g><g fill="#f6f6f6"><rect x="5" y="5" width="8" height="2"/><rect x="11" y="15" width="8" height="2"/><rect x="17" y="25" width="8" height="2"/></g></svg>
<div style="left:722px;top:1933px;width:32px;height:32px;background:#e9eaea;border-radius:16px;"></div>
<div class="t" style="top:1936.0px;font-size:26px;line-height:26px;color:#5f686d;left:238px;width:1000px;text-align:center;">0</div>
<svg style="left:817px;top:1934px;" width="38" height="30" viewBox="0 0 38 30"><g fill="#56636b"><rect x="1" y="1" width="16" height="28" rx="2"/><rect x="20" y="13" width="16" height="16" rx="2"/><rect x="15" y="24" width="8" height="5"/></g></svg>
<div style="left:869px;top:1933px;width:32px;height:32px;background:#e9eaea;border-radius:16px;"></div>
<div class="t" style="top:1936.0px;font-size:26px;line-height:26px;color:#5f686d;left:385px;width:1000px;text-align:center;">0</div>
<svg style="left:3395px;top:1936px;" width="26" height="18" viewBox="0 0 26 18"><path d="M4 14 L13 5 L22 14" fill="none" stroke="#1e1e1e" stroke-width="4" stroke-linecap="round" stroke-linejoin="round"/></svg>
</body></html>
